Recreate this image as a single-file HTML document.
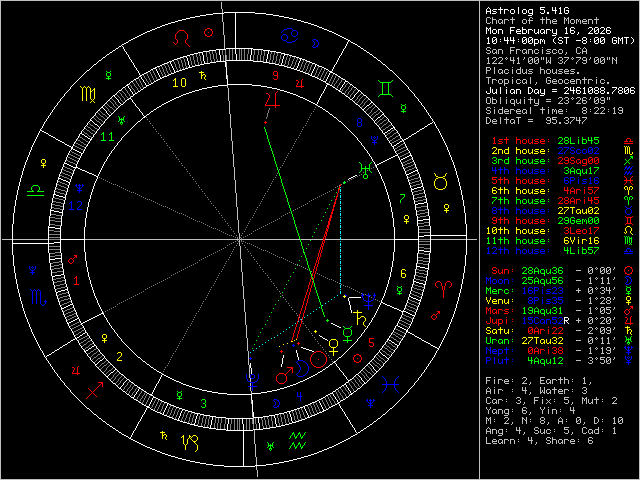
<!DOCTYPE html>
<html><head><meta charset="utf-8"><title>Astrolog 5.41G - Chart of the Moment</title>
<style>html,body{margin:0;padding:0;background:#000;width:640px;height:480px;overflow:hidden}svg{display:block}</style></head>
<body><svg width="640" height="480" viewBox="0 0 640 480" shape-rendering="crispEdges">
<defs><symbol id="g34" overflow="visible"><path d="M1 0h1v1h-1zM3 0h1v1h-1zM1 1h1v1h-1zM3 1h1v1h-1zM1 2h1v1h-1zM3 2h1v1h-1z"/></symbol><symbol id="g39" overflow="visible"><path d="M2 0h1v1h-1zM2 1h1v1h-1zM1 2h1v1h-1z"/></symbol><symbol id="g40" overflow="visible"><path d="M3 0h1v1h-1zM2 1h1v1h-1zM1 2h1v1h-1zM1 3h1v1h-1zM1 4h1v1h-1zM2 5h1v1h-1zM3 6h1v1h-1z"/></symbol><symbol id="g41" overflow="visible"><path d="M1 0h1v1h-1zM2 1h1v1h-1zM3 2h1v1h-1zM3 3h1v1h-1zM3 4h1v1h-1zM2 5h1v1h-1zM1 6h1v1h-1z"/></symbol><symbol id="g43" overflow="visible"><path d="M2 1h1v1h-1zM2 2h1v1h-1zM0 3h5v1h-5zM2 4h1v1h-1zM2 5h1v1h-1z"/></symbol><symbol id="g44" overflow="visible"><path d="M2 5h1v1h-1zM2 6h1v1h-1zM1 7h1v1h-1z"/></symbol><symbol id="g45" overflow="visible"><path d="M0 3h5v1h-5z"/></symbol><symbol id="g46" overflow="visible"><path d="M1 5h2v1h-2zM1 6h2v1h-2z"/></symbol><symbol id="g48" overflow="visible"><path d="M1 0h3v1h-3zM0 1h1v1h-1zM4 1h1v1h-1zM0 2h1v1h-1zM3 2h2v1h-2zM0 3h1v1h-1zM2 3h1v1h-1zM4 3h1v1h-1zM0 4h2v1h-2zM4 4h1v1h-1zM0 5h1v1h-1zM4 5h1v1h-1zM1 6h3v1h-3z"/></symbol><symbol id="g49" overflow="visible"><path d="M2 0h1v1h-1zM1 1h2v1h-2zM2 2h1v1h-1zM2 3h1v1h-1zM2 4h1v1h-1zM2 5h1v1h-1zM1 6h3v1h-3z"/></symbol><symbol id="g50" overflow="visible"><path d="M1 0h3v1h-3zM0 1h1v1h-1zM4 1h1v1h-1zM4 2h1v1h-1zM3 3h1v1h-1zM2 4h1v1h-1zM1 5h1v1h-1zM0 6h5v1h-5z"/></symbol><symbol id="g51" overflow="visible"><path d="M1 0h3v1h-3zM0 1h1v1h-1zM4 1h1v1h-1zM4 2h1v1h-1zM2 3h2v1h-2zM4 4h1v1h-1zM0 5h1v1h-1zM4 5h1v1h-1zM1 6h3v1h-3z"/></symbol><symbol id="g52" overflow="visible"><path d="M0 0h1v1h-1zM3 0h1v1h-1zM0 1h1v1h-1zM3 1h1v1h-1zM0 2h1v1h-1zM3 2h1v1h-1zM0 3h5v1h-5zM3 4h1v1h-1zM3 5h1v1h-1zM3 6h1v1h-1z"/></symbol><symbol id="g53" overflow="visible"><path d="M0 0h5v1h-5zM0 1h1v1h-1zM0 2h4v1h-4zM4 3h1v1h-1zM4 4h1v1h-1zM0 5h1v1h-1zM4 5h1v1h-1zM1 6h3v1h-3z"/></symbol><symbol id="g54" overflow="visible"><path d="M1 0h3v1h-3zM0 1h1v1h-1zM4 1h1v1h-1zM0 2h1v1h-1zM0 3h4v1h-4zM0 4h1v1h-1zM4 4h1v1h-1zM0 5h1v1h-1zM4 5h1v1h-1zM1 6h3v1h-3z"/></symbol><symbol id="g55" overflow="visible"><path d="M0 0h5v1h-5zM4 1h1v1h-1zM3 2h1v1h-1zM2 3h1v1h-1zM1 4h1v1h-1zM0 5h1v1h-1zM0 6h1v1h-1z"/></symbol><symbol id="g56" overflow="visible"><path d="M1 0h3v1h-3zM0 1h1v1h-1zM4 1h1v1h-1zM0 2h1v1h-1zM4 2h1v1h-1zM1 3h3v1h-3zM0 4h1v1h-1zM4 4h1v1h-1zM0 5h1v1h-1zM4 5h1v1h-1zM1 6h3v1h-3z"/></symbol><symbol id="g57" overflow="visible"><path d="M1 0h3v1h-3zM0 1h1v1h-1zM4 1h1v1h-1zM0 2h1v1h-1zM4 2h1v1h-1zM1 3h4v1h-4zM4 4h1v1h-1zM0 5h1v1h-1zM4 5h1v1h-1zM1 6h3v1h-3z"/></symbol><symbol id="g58" overflow="visible"><path d="M2 2h1v1h-1zM2 4h1v1h-1z"/></symbol><symbol id="g61" overflow="visible"><path d="M0 2h5v1h-5zM0 4h5v1h-5z"/></symbol><symbol id="g65" overflow="visible"><path d="M2 0h1v1h-1zM1 1h1v1h-1zM3 1h1v1h-1zM0 2h1v1h-1zM4 2h1v1h-1zM0 3h1v1h-1zM4 3h1v1h-1zM0 4h5v1h-5zM0 5h1v1h-1zM4 5h1v1h-1zM0 6h1v1h-1zM4 6h1v1h-1z"/></symbol><symbol id="g67" overflow="visible"><path d="M1 0h3v1h-3zM0 1h1v1h-1zM4 1h1v1h-1zM0 2h1v1h-1zM0 3h1v1h-1zM0 4h1v1h-1zM0 5h1v1h-1zM4 5h1v1h-1zM1 6h3v1h-3z"/></symbol><symbol id="g68" overflow="visible"><path d="M0 0h3v1h-3zM0 1h1v1h-1zM3 1h1v1h-1zM0 2h1v1h-1zM4 2h1v1h-1zM0 3h1v1h-1zM4 3h1v1h-1zM0 4h1v1h-1zM4 4h1v1h-1zM0 5h1v1h-1zM3 5h1v1h-1zM0 6h3v1h-3z"/></symbol><symbol id="g69" overflow="visible"><path d="M0 0h5v1h-5zM0 1h1v1h-1zM0 2h1v1h-1zM0 3h4v1h-4zM0 4h1v1h-1zM0 5h1v1h-1zM0 6h5v1h-5z"/></symbol><symbol id="g70" overflow="visible"><path d="M0 0h5v1h-5zM0 1h1v1h-1zM0 2h1v1h-1zM0 3h4v1h-4zM0 4h1v1h-1zM0 5h1v1h-1zM0 6h1v1h-1z"/></symbol><symbol id="g71" overflow="visible"><path d="M1 0h3v1h-3zM0 1h1v1h-1zM4 1h1v1h-1zM0 2h1v1h-1zM0 3h1v1h-1zM2 3h3v1h-3zM0 4h1v1h-1zM4 4h1v1h-1zM0 5h1v1h-1zM4 5h1v1h-1zM1 6h3v1h-3z"/></symbol><symbol id="g74" overflow="visible"><path d="M4 0h1v1h-1zM4 1h1v1h-1zM4 2h1v1h-1zM4 3h1v1h-1zM0 4h1v1h-1zM4 4h1v1h-1zM0 5h1v1h-1zM4 5h1v1h-1zM1 6h3v1h-3z"/></symbol><symbol id="g76" overflow="visible"><path d="M0 0h1v1h-1zM0 1h1v1h-1zM0 2h1v1h-1zM0 3h1v1h-1zM0 4h1v1h-1zM0 5h1v1h-1zM0 6h5v1h-5z"/></symbol><symbol id="g77" overflow="visible"><path d="M0 0h1v1h-1zM4 0h1v1h-1zM0 1h2v1h-2zM3 1h2v1h-2zM0 2h1v1h-1zM2 2h1v1h-1zM4 2h1v1h-1zM0 3h1v1h-1zM2 3h1v1h-1zM4 3h1v1h-1zM0 4h1v1h-1zM4 4h1v1h-1zM0 5h1v1h-1zM4 5h1v1h-1zM0 6h1v1h-1zM4 6h1v1h-1z"/></symbol><symbol id="g78" overflow="visible"><path d="M0 0h1v1h-1zM4 0h1v1h-1zM0 1h2v1h-2zM4 1h1v1h-1zM0 2h1v1h-1zM2 2h1v1h-1zM4 2h1v1h-1zM0 3h1v1h-1zM3 3h2v1h-2zM0 4h1v1h-1zM4 4h1v1h-1zM0 5h1v1h-1zM4 5h1v1h-1zM0 6h1v1h-1zM4 6h1v1h-1z"/></symbol><symbol id="g79" overflow="visible"><path d="M1 0h3v1h-3zM0 1h1v1h-1zM4 1h1v1h-1zM0 2h1v1h-1zM4 2h1v1h-1zM0 3h1v1h-1zM4 3h1v1h-1zM0 4h1v1h-1zM4 4h1v1h-1zM0 5h1v1h-1zM4 5h1v1h-1zM1 6h3v1h-3z"/></symbol><symbol id="g80" overflow="visible"><path d="M0 0h4v1h-4zM0 1h1v1h-1zM4 1h1v1h-1zM0 2h1v1h-1zM4 2h1v1h-1zM0 3h4v1h-4zM0 4h1v1h-1zM0 5h1v1h-1zM0 6h1v1h-1z"/></symbol><symbol id="g82" overflow="visible"><path d="M0 0h4v1h-4zM0 1h1v1h-1zM4 1h1v1h-1zM0 2h1v1h-1zM4 2h1v1h-1zM0 3h4v1h-4zM0 4h1v1h-1zM2 4h1v1h-1zM0 5h1v1h-1zM3 5h1v1h-1zM0 6h1v1h-1zM4 6h1v1h-1z"/></symbol><symbol id="g83" overflow="visible"><path d="M1 0h3v1h-3zM0 1h1v1h-1zM4 1h1v1h-1zM0 2h1v1h-1zM1 3h3v1h-3zM4 4h1v1h-1zM0 5h1v1h-1zM4 5h1v1h-1zM1 6h3v1h-3z"/></symbol><symbol id="g84" overflow="visible"><path d="M0 0h5v1h-5zM2 1h1v1h-1zM2 2h1v1h-1zM2 3h1v1h-1zM2 4h1v1h-1zM2 5h1v1h-1zM2 6h1v1h-1z"/></symbol><symbol id="g85" overflow="visible"><path d="M0 0h1v1h-1zM4 0h1v1h-1zM0 1h1v1h-1zM4 1h1v1h-1zM0 2h1v1h-1zM4 2h1v1h-1zM0 3h1v1h-1zM4 3h1v1h-1zM0 4h1v1h-1zM4 4h1v1h-1zM0 5h1v1h-1zM4 5h1v1h-1zM1 6h3v1h-3z"/></symbol><symbol id="g86" overflow="visible"><path d="M0 0h1v1h-1zM4 0h1v1h-1zM0 1h1v1h-1zM4 1h1v1h-1zM0 2h1v1h-1zM4 2h1v1h-1zM1 3h1v1h-1zM3 3h1v1h-1zM1 4h1v1h-1zM3 4h1v1h-1zM2 5h1v1h-1zM2 6h1v1h-1z"/></symbol><symbol id="g87" overflow="visible"><path d="M0 0h1v1h-1zM4 0h1v1h-1zM0 1h1v1h-1zM4 1h1v1h-1zM0 2h1v1h-1zM4 2h1v1h-1zM0 3h1v1h-1zM2 3h1v1h-1zM4 3h1v1h-1zM0 4h1v1h-1zM2 4h1v1h-1zM4 4h1v1h-1zM0 5h2v1h-2zM3 5h2v1h-2zM0 6h1v1h-1zM4 6h1v1h-1z"/></symbol><symbol id="g89" overflow="visible"><path d="M0 0h1v1h-1zM4 0h1v1h-1zM0 1h1v1h-1zM4 1h1v1h-1zM1 2h1v1h-1zM3 2h1v1h-1zM2 3h1v1h-1zM2 4h1v1h-1zM2 5h1v1h-1zM2 6h1v1h-1z"/></symbol><symbol id="g97" overflow="visible"><path d="M1 2h3v1h-3zM0 3h1v1h-1zM4 3h1v1h-1zM0 4h1v1h-1zM4 4h1v1h-1zM0 5h1v1h-1zM3 5h2v1h-2zM1 6h2v1h-2zM4 6h1v1h-1z"/></symbol><symbol id="g98" overflow="visible"><path d="M0 0h1v1h-1zM0 1h1v1h-1zM0 2h4v1h-4zM0 3h1v1h-1zM4 3h1v1h-1zM0 4h1v1h-1zM4 4h1v1h-1zM0 5h1v1h-1zM4 5h1v1h-1zM0 6h4v1h-4z"/></symbol><symbol id="g99" overflow="visible"><path d="M1 2h3v1h-3zM0 3h1v1h-1zM4 3h1v1h-1zM0 4h1v1h-1zM0 5h1v1h-1zM4 5h1v1h-1zM1 6h3v1h-3z"/></symbol><symbol id="g100" overflow="visible"><path d="M4 0h1v1h-1zM4 1h1v1h-1zM1 2h4v1h-4zM0 3h1v1h-1zM4 3h1v1h-1zM0 4h1v1h-1zM4 4h1v1h-1zM0 5h1v1h-1zM4 5h1v1h-1zM1 6h4v1h-4z"/></symbol><symbol id="g101" overflow="visible"><path d="M1 2h3v1h-3zM0 3h1v1h-1zM4 3h1v1h-1zM0 4h5v1h-5zM0 5h1v1h-1zM1 6h4v1h-4z"/></symbol><symbol id="g102" overflow="visible"><path d="M2 0h2v1h-2zM1 1h1v1h-1zM4 1h1v1h-1zM1 2h1v1h-1zM0 3h5v1h-5zM1 4h1v1h-1zM1 5h1v1h-1zM1 6h1v1h-1z"/></symbol><symbol id="g103" overflow="visible"><path d="M1 2h4v1h-4zM0 3h1v1h-1zM4 3h1v1h-1zM0 4h1v1h-1zM4 4h1v1h-1zM0 5h1v1h-1zM4 5h1v1h-1zM1 6h4v1h-4zM4 7h1v1h-1zM0 8h4v1h-4z"/></symbol><symbol id="g104" overflow="visible"><path d="M0 0h1v1h-1zM0 1h1v1h-1zM0 2h4v1h-4zM0 3h1v1h-1zM4 3h1v1h-1zM0 4h1v1h-1zM4 4h1v1h-1zM0 5h1v1h-1zM4 5h1v1h-1zM0 6h1v1h-1zM4 6h1v1h-1z"/></symbol><symbol id="g105" overflow="visible"><path d="M2 0h1v1h-1zM2 2h1v1h-1zM2 3h1v1h-1zM2 4h1v1h-1zM2 5h1v1h-1zM2 6h1v1h-1z"/></symbol><symbol id="g108" overflow="visible"><path d="M2 0h1v1h-1zM2 1h1v1h-1zM2 2h1v1h-1zM2 3h1v1h-1zM2 4h1v1h-1zM2 5h1v1h-1zM2 6h1v1h-1z"/></symbol><symbol id="g109" overflow="visible"><path d="M0 2h2v1h-2zM3 2h1v1h-1zM0 3h1v1h-1zM2 3h1v1h-1zM4 3h1v1h-1zM0 4h1v1h-1zM2 4h1v1h-1zM4 4h1v1h-1zM0 5h1v1h-1zM4 5h1v1h-1zM0 6h1v1h-1zM4 6h1v1h-1z"/></symbol><symbol id="g110" overflow="visible"><path d="M0 2h4v1h-4zM0 3h1v1h-1zM4 3h1v1h-1zM0 4h1v1h-1zM4 4h1v1h-1zM0 5h1v1h-1zM4 5h1v1h-1zM0 6h1v1h-1zM4 6h1v1h-1z"/></symbol><symbol id="g111" overflow="visible"><path d="M1 2h3v1h-3zM0 3h1v1h-1zM4 3h1v1h-1zM0 4h1v1h-1zM4 4h1v1h-1zM0 5h1v1h-1zM4 5h1v1h-1zM1 6h3v1h-3z"/></symbol><symbol id="g112" overflow="visible"><path d="M0 2h4v1h-4zM0 3h1v1h-1zM4 3h1v1h-1zM0 4h1v1h-1zM4 4h1v1h-1zM0 5h1v1h-1zM4 5h1v1h-1zM0 6h4v1h-4zM0 7h1v1h-1zM0 8h1v1h-1z"/></symbol><symbol id="g113" overflow="visible"><path d="M1 2h3v1h-3zM0 3h1v1h-1zM4 3h1v1h-1zM0 4h1v1h-1zM4 4h1v1h-1zM0 5h1v1h-1zM4 5h1v1h-1zM1 6h4v1h-4zM4 7h1v1h-1zM4 8h1v1h-1z"/></symbol><symbol id="g114" overflow="visible"><path d="M0 2h4v1h-4zM0 3h1v1h-1zM4 3h1v1h-1zM0 4h1v1h-1zM0 5h1v1h-1zM0 6h1v1h-1z"/></symbol><symbol id="g115" overflow="visible"><path d="M1 2h4v1h-4zM0 3h1v1h-1zM1 4h3v1h-3zM4 5h1v1h-1zM0 6h4v1h-4z"/></symbol><symbol id="g116" overflow="visible"><path d="M2 0h1v1h-1zM2 1h1v1h-1zM0 2h5v1h-5zM2 3h1v1h-1zM2 4h1v1h-1zM2 5h1v1h-1zM2 6h1v1h-1z"/></symbol><symbol id="g117" overflow="visible"><path d="M0 2h1v1h-1zM4 2h1v1h-1zM0 3h1v1h-1zM4 3h1v1h-1zM0 4h1v1h-1zM4 4h1v1h-1zM0 5h1v1h-1zM3 5h2v1h-2zM1 6h2v1h-2zM4 6h1v1h-1z"/></symbol><symbol id="g120" overflow="visible"><path d="M0 2h1v1h-1zM4 2h1v1h-1zM1 3h1v1h-1zM3 3h1v1h-1zM2 4h1v1h-1zM1 5h1v1h-1zM3 5h1v1h-1zM0 6h1v1h-1zM4 6h1v1h-1z"/></symbol><symbol id="g121" overflow="visible"><path d="M0 2h1v1h-1zM4 2h1v1h-1zM0 3h1v1h-1zM4 3h1v1h-1zM0 4h1v1h-1zM4 4h1v1h-1zM0 5h1v1h-1zM4 5h1v1h-1zM1 6h4v1h-4zM4 7h1v1h-1zM0 8h4v1h-4z"/></symbol><symbol id="g176" overflow="visible"><path d="M2 0h1v1h-1zM1 1h1v1h-1zM3 1h1v1h-1zM2 2h1v1h-1z"/></symbol></defs>
<rect width="640" height="480" fill="#000"/>
<g id="wheel">
<path fill="#c0c0c0" d="M0 0h640v1h-640zM0 1h1v1h-1zM479 1h1v1h-1zM639 1h1v1h-1zM0 2h1v1h-1zM221 2h1v1h-1zM479 2h1v1h-1zM639 2h1v1h-1zM0 3h1v1h-1zM221 3h1v1h-1zM479 3h1v1h-1zM639 3h1v1h-1zM0 4h1v1h-1zM221 4h1v1h-1zM479 4h1v1h-1zM639 4h1v1h-1zM0 5h1v1h-1zM221 5h1v1h-1zM479 5h1v1h-1zM639 5h1v1h-1zM0 6h1v1h-1zM221 6h1v1h-1zM479 6h1v1h-1zM639 6h1v1h-1zM0 7h1v1h-1zM221 7h1v1h-1zM479 7h1v1h-1zM639 7h1v1h-1zM0 8h1v1h-1zM221 8h1v1h-1zM479 8h1v1h-1zM639 8h1v1h-1zM0 9h1v1h-1zM222 9h1v1h-1zM479 9h1v1h-1zM639 9h1v1h-1zM0 10h1v1h-1zM222 10h1v1h-1zM479 10h1v1h-1zM639 10h1v1h-1zM0 11h1v1h-1zM222 11h1v1h-1zM479 11h1v1h-1zM639 11h1v1h-1zM0 12h1v1h-1zM222 12h1v1h-1zM479 12h1v1h-1zM639 12h1v1h-1zM0 13h1v1h-1zM479 13h1v1h-1zM639 13h1v1h-1zM0 14h1v1h-1zM222 14h1v1h-1zM479 14h1v1h-1zM639 14h1v1h-1zM0 15h1v1h-1zM222 15h1v1h-1zM479 15h1v1h-1zM639 15h1v1h-1zM0 16h1v1h-1zM222 16h1v1h-1zM479 16h1v1h-1zM639 16h1v1h-1zM0 17h1v1h-1zM222 17h1v1h-1zM479 17h1v1h-1zM639 17h1v1h-1zM0 18h1v1h-1zM222 18h1v1h-1zM479 18h1v1h-1zM639 18h1v1h-1zM0 19h1v1h-1zM222 19h1v1h-1zM479 19h1v1h-1zM639 19h1v1h-1zM0 20h1v1h-1zM222 20h1v1h-1zM479 20h1v1h-1zM639 20h1v1h-1zM0 21h1v1h-1zM222 21h1v1h-1zM479 21h1v1h-1zM639 21h1v1h-1zM0 22h1v1h-1zM223 22h1v1h-1zM479 22h1v1h-1zM639 22h1v1h-1zM0 23h1v1h-1zM223 23h1v1h-1zM479 23h1v1h-1zM639 23h1v1h-1zM0 24h1v1h-1zM223 24h1v1h-1zM479 24h1v1h-1zM639 24h1v1h-1zM0 25h1v1h-1zM223 25h1v1h-1zM479 25h1v1h-1zM639 25h1v1h-1zM0 26h1v1h-1zM223 26h1v1h-1zM479 26h1v1h-1zM639 26h1v1h-1zM0 27h1v1h-1zM223 27h1v1h-1zM479 27h1v1h-1zM639 27h1v1h-1zM0 28h1v1h-1zM223 28h1v1h-1zM479 28h1v1h-1zM639 28h1v1h-1zM0 29h1v1h-1zM223 29h1v1h-1zM479 29h1v1h-1zM639 29h1v1h-1zM0 30h1v1h-1zM223 30h1v1h-1zM479 30h1v1h-1zM639 30h1v1h-1zM0 31h1v1h-1zM223 31h1v1h-1zM479 31h1v1h-1zM639 31h1v1h-1zM0 32h1v1h-1zM223 32h1v1h-1zM479 32h1v1h-1zM639 32h1v1h-1zM0 33h1v1h-1zM223 33h1v1h-1zM479 33h1v1h-1zM639 33h1v1h-1zM0 34h1v1h-1zM223 34h1v1h-1zM479 34h1v1h-1zM639 34h1v1h-1zM0 35h1v1h-1zM224 35h1v1h-1zM479 35h1v1h-1zM639 35h1v1h-1zM0 36h1v1h-1zM224 36h1v1h-1zM479 36h1v1h-1zM639 36h1v1h-1zM0 37h1v1h-1zM224 37h1v1h-1zM479 37h1v1h-1zM639 37h1v1h-1zM0 38h1v1h-1zM224 38h1v1h-1zM479 38h1v1h-1zM639 38h1v1h-1zM0 39h1v1h-1zM224 39h1v1h-1zM479 39h1v1h-1zM639 39h1v1h-1zM0 40h1v1h-1zM224 40h1v1h-1zM479 40h1v1h-1zM639 40h1v1h-1zM0 41h1v1h-1zM224 41h1v1h-1zM479 41h1v1h-1zM639 41h1v1h-1zM0 42h1v1h-1zM224 42h1v1h-1zM479 42h1v1h-1zM639 42h1v1h-1zM0 43h1v1h-1zM224 43h1v1h-1zM479 43h1v1h-1zM639 43h1v1h-1zM0 44h1v1h-1zM224 44h1v1h-1zM479 44h1v1h-1zM639 44h1v1h-1zM0 45h1v1h-1zM224 45h1v1h-1zM479 45h1v1h-1zM639 45h1v1h-1zM0 46h1v1h-1zM224 46h1v1h-1zM479 46h1v1h-1zM639 46h1v1h-1zM0 47h1v1h-1zM224 47h1v1h-1zM479 47h1v1h-1zM639 47h1v1h-1zM0 48h1v1h-1zM224 48h1v1h-1zM479 48h1v1h-1zM639 48h1v1h-1zM0 49h1v1h-1zM479 49h1v1h-1zM639 49h1v1h-1zM0 50h1v1h-1zM479 50h1v1h-1zM639 50h1v1h-1zM0 51h1v1h-1zM479 51h1v1h-1zM639 51h1v1h-1zM0 52h1v1h-1zM479 52h1v1h-1zM639 52h1v1h-1zM0 53h1v1h-1zM479 53h1v1h-1zM639 53h1v1h-1zM0 54h1v1h-1zM479 54h1v1h-1zM639 54h1v1h-1zM0 55h1v1h-1zM225 55h1v1h-1zM479 55h1v1h-1zM639 55h1v1h-1zM0 56h1v1h-1zM225 56h1v1h-1zM479 56h1v1h-1zM639 56h1v1h-1zM0 57h1v1h-1zM225 57h1v1h-1zM479 57h1v1h-1zM639 57h1v1h-1zM0 58h1v1h-1zM225 58h1v1h-1zM479 58h1v1h-1zM639 58h1v1h-1zM0 59h1v1h-1zM225 59h1v1h-1zM479 59h1v1h-1zM639 59h1v1h-1zM0 60h1v1h-1zM225 60h1v1h-1zM479 60h1v1h-1zM639 60h1v1h-1zM0 61h1v1h-1zM479 61h1v1h-1zM639 61h1v1h-1zM0 62h1v1h-1zM226 62h1v1h-1zM479 62h1v1h-1zM639 62h1v1h-1zM0 63h1v1h-1zM226 63h1v1h-1zM479 63h1v1h-1zM639 63h1v1h-1zM0 64h1v1h-1zM226 64h1v1h-1zM479 64h1v1h-1zM639 64h1v1h-1zM0 65h1v1h-1zM226 65h1v1h-1zM479 65h1v1h-1zM639 65h1v1h-1zM0 66h1v1h-1zM226 66h1v1h-1zM479 66h1v1h-1zM639 66h1v1h-1zM0 67h1v1h-1zM479 67h1v1h-1zM639 67h1v1h-1zM0 68h1v1h-1zM479 68h1v1h-1zM639 68h1v1h-1zM0 69h1v1h-1zM479 69h1v1h-1zM639 69h1v1h-1zM0 70h1v1h-1zM479 70h1v1h-1zM639 70h1v1h-1zM0 71h1v1h-1zM479 71h1v1h-1zM639 71h1v1h-1zM0 72h1v1h-1zM479 72h1v1h-1zM639 72h1v1h-1zM0 73h1v1h-1zM479 73h1v1h-1zM639 73h1v1h-1zM0 74h1v1h-1zM479 74h1v1h-1zM639 74h1v1h-1zM0 75h1v1h-1zM227 75h1v1h-1zM479 75h1v1h-1zM639 75h1v1h-1zM0 76h1v1h-1zM227 76h1v1h-1zM479 76h1v1h-1zM639 76h1v1h-1zM0 77h1v1h-1zM227 77h1v1h-1zM479 77h1v1h-1zM639 77h1v1h-1zM0 78h1v1h-1zM227 78h1v1h-1zM479 78h1v1h-1zM639 78h1v1h-1zM0 79h1v1h-1zM479 79h1v1h-1zM639 79h1v1h-1zM0 80h1v1h-1zM479 80h1v1h-1zM639 80h1v1h-1zM0 81h1v1h-1zM479 81h1v1h-1zM639 81h1v1h-1zM0 82h1v1h-1zM479 82h1v1h-1zM639 82h1v1h-1zM0 83h1v1h-1zM479 83h1v1h-1zM639 83h1v1h-1zM0 84h1v1h-1zM479 84h1v1h-1zM639 84h1v1h-1zM0 85h1v1h-1zM227 85h1v1h-1zM479 85h1v1h-1zM639 85h1v1h-1zM0 86h1v1h-1zM227 86h1v1h-1zM479 86h1v1h-1zM639 86h1v1h-1zM0 87h1v1h-1zM227 87h1v1h-1zM479 87h1v1h-1zM639 87h1v1h-1zM0 88h1v1h-1zM228 88h1v1h-1zM479 88h1v1h-1zM639 88h1v1h-1zM0 89h1v1h-1zM228 89h1v1h-1zM479 89h1v1h-1zM639 89h1v1h-1zM0 90h1v1h-1zM228 90h1v1h-1zM479 90h1v1h-1zM639 90h1v1h-1zM0 91h1v1h-1zM228 91h1v1h-1zM479 91h1v1h-1zM639 91h1v1h-1zM0 92h1v1h-1zM228 92h1v1h-1zM479 92h1v1h-1zM639 92h1v1h-1zM0 93h1v1h-1zM228 93h1v1h-1zM479 93h1v1h-1zM639 93h1v1h-1zM0 94h1v1h-1zM228 94h1v1h-1zM479 94h1v1h-1zM639 94h1v1h-1zM0 95h1v1h-1zM228 95h1v1h-1zM479 95h1v1h-1zM639 95h1v1h-1zM0 96h1v1h-1zM228 96h1v1h-1zM479 96h1v1h-1zM639 96h1v1h-1zM0 97h1v1h-1zM228 97h1v1h-1zM479 97h1v1h-1zM639 97h1v1h-1zM0 98h1v1h-1zM228 98h1v1h-1zM479 98h1v1h-1zM639 98h1v1h-1zM0 99h1v1h-1zM228 99h1v1h-1zM479 99h1v1h-1zM639 99h1v1h-1zM0 100h1v1h-1zM228 100h1v1h-1zM479 100h1v1h-1zM639 100h1v1h-1zM0 101h1v1h-1zM229 101h1v1h-1zM479 101h1v1h-1zM639 101h1v1h-1zM0 102h1v1h-1zM229 102h1v1h-1zM479 102h1v1h-1zM639 102h1v1h-1zM0 103h1v1h-1zM229 103h1v1h-1zM479 103h1v1h-1zM639 103h1v1h-1zM0 104h1v1h-1zM229 104h1v1h-1zM479 104h1v1h-1zM639 104h1v1h-1zM0 105h1v1h-1zM229 105h1v1h-1zM479 105h1v1h-1zM639 105h1v1h-1zM0 106h1v1h-1zM229 106h1v1h-1zM479 106h1v1h-1zM639 106h1v1h-1zM0 107h1v1h-1zM229 107h1v1h-1zM479 107h1v1h-1zM639 107h1v1h-1zM0 108h1v1h-1zM229 108h1v1h-1zM479 108h1v1h-1zM639 108h1v1h-1zM0 109h1v1h-1zM229 109h1v1h-1zM479 109h1v1h-1zM639 109h1v1h-1zM0 110h1v1h-1zM229 110h1v1h-1zM479 110h1v1h-1zM639 110h1v1h-1zM0 111h1v1h-1zM229 111h1v1h-1zM479 111h1v1h-1zM639 111h1v1h-1zM0 112h1v1h-1zM229 112h1v1h-1zM479 112h1v1h-1zM639 112h1v1h-1zM0 113h1v1h-1zM229 113h1v1h-1zM479 113h1v1h-1zM639 113h1v1h-1zM0 114h1v1h-1zM230 114h1v1h-1zM479 114h1v1h-1zM639 114h1v1h-1zM0 115h1v1h-1zM230 115h1v1h-1zM479 115h1v1h-1zM639 115h1v1h-1zM0 116h1v1h-1zM230 116h1v1h-1zM479 116h1v1h-1zM639 116h1v1h-1zM0 117h1v1h-1zM230 117h1v1h-1zM479 117h1v1h-1zM639 117h1v1h-1zM0 118h1v1h-1zM230 118h1v1h-1zM479 118h1v1h-1zM639 118h1v1h-1zM0 119h1v1h-1zM230 119h1v1h-1zM479 119h1v1h-1zM639 119h1v1h-1zM0 120h1v1h-1zM230 120h1v1h-1zM479 120h1v1h-1zM639 120h1v1h-1zM0 121h1v1h-1zM230 121h1v1h-1zM479 121h1v1h-1zM639 121h1v1h-1zM0 122h1v1h-1zM230 122h1v1h-1zM479 122h1v1h-1zM639 122h1v1h-1zM0 123h1v1h-1zM230 123h1v1h-1zM479 123h1v1h-1zM639 123h1v1h-1zM0 124h1v1h-1zM230 124h1v1h-1zM479 124h1v1h-1zM639 124h1v1h-1zM0 125h1v1h-1zM230 125h1v1h-1zM479 125h1v1h-1zM639 125h1v1h-1zM0 126h1v1h-1zM230 126h1v1h-1zM479 126h1v1h-1zM639 126h1v1h-1zM0 127h1v1h-1zM230 127h1v1h-1zM479 127h1v1h-1zM639 127h1v1h-1zM0 128h1v1h-1zM231 128h1v1h-1zM479 128h1v1h-1zM639 128h1v1h-1zM0 129h1v1h-1zM231 129h1v1h-1zM479 129h1v1h-1zM639 129h1v1h-1zM0 130h1v1h-1zM231 130h1v1h-1zM479 130h1v1h-1zM639 130h1v1h-1zM0 131h1v1h-1zM231 131h1v1h-1zM479 131h1v1h-1zM639 131h1v1h-1zM0 132h1v1h-1zM231 132h1v1h-1zM479 132h1v1h-1zM639 132h1v1h-1zM0 133h1v1h-1zM231 133h1v1h-1zM479 133h1v1h-1zM639 133h1v1h-1zM0 134h1v1h-1zM231 134h1v1h-1zM479 134h1v1h-1zM639 134h1v1h-1zM0 135h1v1h-1zM231 135h1v1h-1zM479 135h1v1h-1zM639 135h1v1h-1zM0 136h1v1h-1zM231 136h1v1h-1zM479 136h1v1h-1zM639 136h1v1h-1zM0 137h1v1h-1zM231 137h1v1h-1zM479 137h1v1h-1zM639 137h1v1h-1zM0 138h1v1h-1zM231 138h1v1h-1zM479 138h1v1h-1zM639 138h1v1h-1zM0 139h1v1h-1zM231 139h1v1h-1zM479 139h1v1h-1zM639 139h1v1h-1zM0 140h1v1h-1zM231 140h1v1h-1zM479 140h1v1h-1zM639 140h1v1h-1zM0 141h1v1h-1zM232 141h1v1h-1zM479 141h1v1h-1zM639 141h1v1h-1zM0 142h1v1h-1zM232 142h1v1h-1zM479 142h1v1h-1zM639 142h1v1h-1zM0 143h1v1h-1zM232 143h1v1h-1zM479 143h1v1h-1zM639 143h1v1h-1zM0 144h1v1h-1zM232 144h1v1h-1zM479 144h1v1h-1zM639 144h1v1h-1zM0 145h1v1h-1zM232 145h1v1h-1zM479 145h1v1h-1zM639 145h1v1h-1zM0 146h1v1h-1zM232 146h1v1h-1zM479 146h1v1h-1zM639 146h1v1h-1zM0 147h1v1h-1zM232 147h1v1h-1zM479 147h1v1h-1zM639 147h1v1h-1zM0 148h1v1h-1zM232 148h1v1h-1zM479 148h1v1h-1zM639 148h1v1h-1zM0 149h1v1h-1zM232 149h1v1h-1zM479 149h1v1h-1zM639 149h1v1h-1zM0 150h1v1h-1zM232 150h1v1h-1zM479 150h1v1h-1zM639 150h1v1h-1zM0 151h1v1h-1zM232 151h1v1h-1zM479 151h1v1h-1zM639 151h1v1h-1zM0 152h1v1h-1zM232 152h1v1h-1zM479 152h1v1h-1zM639 152h1v1h-1zM0 153h1v1h-1zM232 153h1v1h-1zM479 153h1v1h-1zM639 153h1v1h-1zM0 154h1v1h-1zM233 154h1v1h-1zM479 154h1v1h-1zM639 154h1v1h-1zM0 155h1v1h-1zM233 155h1v1h-1zM479 155h1v1h-1zM639 155h1v1h-1zM0 156h1v1h-1zM233 156h1v1h-1zM479 156h1v1h-1zM639 156h1v1h-1zM0 157h1v1h-1zM233 157h1v1h-1zM479 157h1v1h-1zM639 157h1v1h-1zM0 158h1v1h-1zM233 158h1v1h-1zM479 158h1v1h-1zM639 158h1v1h-1zM0 159h1v1h-1zM233 159h1v1h-1zM479 159h1v1h-1zM639 159h1v1h-1zM0 160h1v1h-1zM233 160h1v1h-1zM479 160h1v1h-1zM639 160h1v1h-1zM0 161h1v1h-1zM233 161h1v1h-1zM479 161h1v1h-1zM639 161h1v1h-1zM0 162h1v1h-1zM233 162h1v1h-1zM479 162h1v1h-1zM639 162h1v1h-1zM0 163h1v1h-1zM233 163h1v1h-1zM479 163h1v1h-1zM639 163h1v1h-1zM0 164h1v1h-1zM233 164h1v1h-1zM479 164h1v1h-1zM639 164h1v1h-1zM0 165h1v1h-1zM233 165h1v1h-1zM479 165h1v1h-1zM639 165h1v1h-1zM0 166h1v1h-1zM233 166h1v1h-1zM479 166h1v1h-1zM639 166h1v1h-1zM0 167h1v1h-1zM234 167h1v1h-1zM479 167h1v1h-1zM639 167h1v1h-1zM0 168h1v1h-1zM234 168h1v1h-1zM479 168h1v1h-1zM639 168h1v1h-1zM0 169h1v1h-1zM234 169h1v1h-1zM479 169h1v1h-1zM639 169h1v1h-1zM0 170h1v1h-1zM234 170h1v1h-1zM479 170h1v1h-1zM639 170h1v1h-1zM0 171h1v1h-1zM234 171h1v1h-1zM479 171h1v1h-1zM639 171h1v1h-1zM0 172h1v1h-1zM234 172h1v1h-1zM479 172h1v1h-1zM639 172h1v1h-1zM0 173h1v1h-1zM234 173h1v1h-1zM479 173h1v1h-1zM639 173h1v1h-1zM0 174h1v1h-1zM234 174h1v1h-1zM479 174h1v1h-1zM639 174h1v1h-1zM0 175h1v1h-1zM234 175h1v1h-1zM479 175h1v1h-1zM639 175h1v1h-1zM0 176h1v1h-1zM234 176h1v1h-1zM479 176h1v1h-1zM639 176h1v1h-1zM0 177h1v1h-1zM234 177h1v1h-1zM479 177h1v1h-1zM639 177h1v1h-1zM0 178h1v1h-1zM234 178h1v1h-1zM479 178h1v1h-1zM639 178h1v1h-1zM0 179h1v1h-1zM234 179h1v1h-1zM479 179h1v1h-1zM639 179h1v1h-1zM0 180h1v1h-1zM235 180h1v1h-1zM479 180h1v1h-1zM639 180h1v1h-1zM0 181h1v1h-1zM235 181h1v1h-1zM479 181h1v1h-1zM639 181h1v1h-1zM0 182h1v1h-1zM235 182h1v1h-1zM479 182h1v1h-1zM639 182h1v1h-1zM0 183h1v1h-1zM235 183h1v1h-1zM479 183h1v1h-1zM639 183h1v1h-1zM0 184h1v1h-1zM235 184h1v1h-1zM479 184h1v1h-1zM639 184h1v1h-1zM0 185h1v1h-1zM235 185h1v1h-1zM479 185h1v1h-1zM639 185h1v1h-1zM0 186h1v1h-1zM235 186h1v1h-1zM479 186h1v1h-1zM639 186h1v1h-1zM0 187h1v1h-1zM235 187h1v1h-1zM479 187h1v1h-1zM639 187h1v1h-1zM0 188h1v1h-1zM235 188h1v1h-1zM479 188h1v1h-1zM639 188h1v1h-1zM0 189h1v1h-1zM235 189h1v1h-1zM479 189h1v1h-1zM639 189h1v1h-1zM0 190h1v1h-1zM235 190h1v1h-1zM479 190h1v1h-1zM639 190h1v1h-1zM0 191h1v1h-1zM235 191h1v1h-1zM479 191h1v1h-1zM639 191h1v1h-1zM0 192h1v1h-1zM235 192h1v1h-1zM479 192h1v1h-1zM639 192h1v1h-1zM0 193h1v1h-1zM236 193h1v1h-1zM479 193h1v1h-1zM639 193h1v1h-1zM0 194h1v1h-1zM236 194h1v1h-1zM479 194h1v1h-1zM639 194h1v1h-1zM0 195h1v1h-1zM236 195h1v1h-1zM479 195h1v1h-1zM639 195h1v1h-1zM0 196h1v1h-1zM236 196h1v1h-1zM479 196h1v1h-1zM639 196h1v1h-1zM0 197h1v1h-1zM236 197h1v1h-1zM479 197h1v1h-1zM639 197h1v1h-1zM0 198h1v1h-1zM236 198h1v1h-1zM479 198h1v1h-1zM639 198h1v1h-1zM0 199h1v1h-1zM236 199h1v1h-1zM479 199h1v1h-1zM639 199h1v1h-1zM0 200h1v1h-1zM236 200h1v1h-1zM479 200h1v1h-1zM639 200h1v1h-1zM0 201h1v1h-1zM236 201h1v1h-1zM479 201h1v1h-1zM639 201h1v1h-1zM0 202h1v1h-1zM236 202h1v1h-1zM479 202h1v1h-1zM639 202h1v1h-1zM0 203h1v1h-1zM236 203h1v1h-1zM479 203h1v1h-1zM639 203h1v1h-1zM0 204h1v1h-1zM236 204h1v1h-1zM479 204h1v1h-1zM639 204h1v1h-1zM0 205h1v1h-1zM236 205h1v1h-1zM479 205h1v1h-1zM639 205h1v1h-1zM0 206h1v1h-1zM236 206h1v1h-1zM479 206h1v1h-1zM639 206h1v1h-1zM0 207h1v1h-1zM237 207h1v1h-1zM479 207h1v1h-1zM639 207h1v1h-1zM0 208h1v1h-1zM237 208h1v1h-1zM479 208h1v1h-1zM639 208h1v1h-1zM0 209h1v1h-1zM237 209h1v1h-1zM479 209h1v1h-1zM639 209h1v1h-1zM0 210h1v1h-1zM237 210h1v1h-1zM479 210h1v1h-1zM639 210h1v1h-1zM0 211h1v1h-1zM237 211h1v1h-1zM479 211h1v1h-1zM639 211h1v1h-1zM0 212h1v1h-1zM237 212h1v1h-1zM479 212h1v1h-1zM639 212h1v1h-1zM0 213h1v1h-1zM237 213h1v1h-1zM479 213h1v1h-1zM639 213h1v1h-1zM0 214h1v1h-1zM237 214h1v1h-1zM479 214h1v1h-1zM639 214h1v1h-1zM0 215h1v1h-1zM237 215h1v1h-1zM479 215h1v1h-1zM639 215h1v1h-1zM0 216h1v1h-1zM237 216h1v1h-1zM479 216h1v1h-1zM639 216h1v1h-1zM0 217h1v1h-1zM237 217h1v1h-1zM479 217h1v1h-1zM639 217h1v1h-1zM0 218h1v1h-1zM237 218h1v1h-1zM479 218h1v1h-1zM639 218h1v1h-1zM0 219h1v1h-1zM237 219h1v1h-1zM479 219h1v1h-1zM639 219h1v1h-1zM0 220h1v1h-1zM238 220h1v1h-1zM479 220h1v1h-1zM639 220h1v1h-1zM0 221h1v1h-1zM238 221h1v1h-1zM479 221h1v1h-1zM639 221h1v1h-1zM0 222h1v1h-1zM238 222h1v1h-1zM479 222h1v1h-1zM639 222h1v1h-1zM0 223h1v1h-1zM238 223h1v1h-1zM479 223h1v1h-1zM639 223h1v1h-1zM0 224h1v1h-1zM238 224h1v1h-1zM479 224h1v1h-1zM639 224h1v1h-1zM0 225h1v1h-1zM238 225h1v1h-1zM479 225h1v1h-1zM639 225h1v1h-1zM0 226h1v1h-1zM238 226h1v1h-1zM479 226h1v1h-1zM639 226h1v1h-1zM0 227h1v1h-1zM238 227h1v1h-1zM479 227h1v1h-1zM639 227h1v1h-1zM0 228h1v1h-1zM238 228h1v1h-1zM479 228h1v1h-1zM639 228h1v1h-1zM0 229h1v1h-1zM238 229h1v1h-1zM479 229h1v1h-1zM639 229h1v1h-1zM0 230h1v1h-1zM238 230h1v1h-1zM479 230h1v1h-1zM639 230h1v1h-1zM0 231h1v1h-1zM238 231h1v1h-1zM479 231h1v1h-1zM639 231h1v1h-1zM0 232h1v1h-1zM238 232h1v1h-1zM479 232h1v1h-1zM639 232h1v1h-1zM0 233h1v1h-1zM239 233h1v1h-1zM479 233h1v1h-1zM639 233h1v1h-1zM0 234h1v1h-1zM239 234h1v1h-1zM479 234h1v1h-1zM639 234h1v1h-1zM0 235h1v1h-1zM239 235h1v1h-1zM479 235h1v1h-1zM639 235h1v1h-1zM0 236h1v1h-1zM239 236h1v1h-1zM479 236h1v1h-1zM639 236h1v1h-1zM0 237h1v1h-1zM239 237h1v1h-1zM479 237h1v1h-1zM639 237h1v1h-1zM0 238h1v1h-1zM239 238h1v1h-1zM479 238h1v1h-1zM639 238h1v1h-1zM0 239h1v1h-1zM2 239h10v1h-10zM13 239h35v1h-35zM85 239h154v1h-154zM240 239h60v1h-60zM301 239h22v1h-22zM325 239h15v1h-15zM341 239h53v1h-53zM431 239h35v1h-35zM467 239h10v1h-10zM479 239h1v1h-1zM639 239h1v1h-1zM0 240h1v1h-1zM239 240h1v1h-1zM479 240h1v1h-1zM639 240h1v1h-1zM0 241h1v1h-1zM239 241h1v1h-1zM479 241h1v1h-1zM639 241h1v1h-1zM0 242h1v1h-1zM239 242h1v1h-1zM479 242h1v1h-1zM639 242h1v1h-1zM0 243h1v1h-1zM239 243h1v1h-1zM479 243h1v1h-1zM639 243h1v1h-1zM0 244h1v1h-1zM239 244h1v1h-1zM479 244h1v1h-1zM639 244h1v1h-1zM0 245h1v1h-1zM239 245h1v1h-1zM479 245h1v1h-1zM639 245h1v1h-1zM0 246h1v1h-1zM240 246h1v1h-1zM479 246h1v1h-1zM639 246h1v1h-1zM0 247h1v1h-1zM240 247h1v1h-1zM479 247h1v1h-1zM639 247h1v1h-1zM0 248h1v1h-1zM240 248h1v1h-1zM479 248h1v1h-1zM639 248h1v1h-1zM0 249h1v1h-1zM240 249h1v1h-1zM479 249h1v1h-1zM639 249h1v1h-1zM0 250h1v1h-1zM240 250h1v1h-1zM479 250h1v1h-1zM639 250h1v1h-1zM0 251h1v1h-1zM240 251h1v1h-1zM479 251h1v1h-1zM639 251h1v1h-1zM0 252h1v1h-1zM240 252h1v1h-1zM479 252h1v1h-1zM639 252h1v1h-1zM0 253h1v1h-1zM240 253h1v1h-1zM479 253h1v1h-1zM639 253h1v1h-1zM0 254h1v1h-1zM240 254h1v1h-1zM479 254h1v1h-1zM639 254h1v1h-1zM0 255h1v1h-1zM240 255h1v1h-1zM479 255h1v1h-1zM639 255h1v1h-1zM0 256h1v1h-1zM240 256h1v1h-1zM479 256h1v1h-1zM639 256h1v1h-1zM0 257h1v1h-1zM240 257h1v1h-1zM479 257h1v1h-1zM639 257h1v1h-1zM0 258h1v1h-1zM240 258h1v1h-1zM479 258h1v1h-1zM639 258h1v1h-1zM0 259h1v1h-1zM241 259h1v1h-1zM479 259h1v1h-1zM639 259h1v1h-1zM0 260h1v1h-1zM241 260h1v1h-1zM479 260h1v1h-1zM639 260h1v1h-1zM0 261h1v1h-1zM241 261h1v1h-1zM479 261h1v1h-1zM639 261h1v1h-1zM0 262h1v1h-1zM241 262h1v1h-1zM479 262h1v1h-1zM639 262h1v1h-1zM0 263h1v1h-1zM241 263h1v1h-1zM479 263h1v1h-1zM639 263h1v1h-1zM0 264h1v1h-1zM241 264h1v1h-1zM479 264h1v1h-1zM639 264h1v1h-1zM0 265h1v1h-1zM241 265h1v1h-1zM479 265h1v1h-1zM639 265h1v1h-1zM0 266h1v1h-1zM241 266h1v1h-1zM479 266h1v1h-1zM639 266h1v1h-1zM0 267h1v1h-1zM241 267h1v1h-1zM479 267h1v1h-1zM639 267h1v1h-1zM0 268h1v1h-1zM241 268h1v1h-1zM479 268h1v1h-1zM639 268h1v1h-1zM0 269h1v1h-1zM241 269h1v1h-1zM479 269h1v1h-1zM639 269h1v1h-1zM0 270h1v1h-1zM241 270h1v1h-1zM479 270h1v1h-1zM639 270h1v1h-1zM0 271h1v1h-1zM241 271h1v1h-1zM479 271h1v1h-1zM639 271h1v1h-1zM0 272h1v1h-1zM242 272h1v1h-1zM479 272h1v1h-1zM639 272h1v1h-1zM0 273h1v1h-1zM242 273h1v1h-1zM479 273h1v1h-1zM639 273h1v1h-1zM0 274h1v1h-1zM242 274h1v1h-1zM479 274h1v1h-1zM639 274h1v1h-1zM0 275h1v1h-1zM242 275h1v1h-1zM479 275h1v1h-1zM639 275h1v1h-1zM0 276h1v1h-1zM242 276h1v1h-1zM479 276h1v1h-1zM639 276h1v1h-1zM0 277h1v1h-1zM242 277h1v1h-1zM479 277h1v1h-1zM639 277h1v1h-1zM0 278h1v1h-1zM242 278h1v1h-1zM479 278h1v1h-1zM639 278h1v1h-1zM0 279h1v1h-1zM242 279h1v1h-1zM479 279h1v1h-1zM639 279h1v1h-1zM0 280h1v1h-1zM242 280h1v1h-1zM479 280h1v1h-1zM639 280h1v1h-1zM0 281h1v1h-1zM242 281h1v1h-1zM479 281h1v1h-1zM639 281h1v1h-1zM0 282h1v1h-1zM242 282h1v1h-1zM479 282h1v1h-1zM639 282h1v1h-1zM0 283h1v1h-1zM242 283h1v1h-1zM479 283h1v1h-1zM639 283h1v1h-1zM0 284h1v1h-1zM242 284h1v1h-1zM479 284h1v1h-1zM639 284h1v1h-1zM0 285h1v1h-1zM242 285h1v1h-1zM479 285h1v1h-1zM639 285h1v1h-1zM0 286h1v1h-1zM243 286h1v1h-1zM479 286h1v1h-1zM639 286h1v1h-1zM0 287h1v1h-1zM243 287h1v1h-1zM479 287h1v1h-1zM639 287h1v1h-1zM0 288h1v1h-1zM243 288h1v1h-1zM479 288h1v1h-1zM639 288h1v1h-1zM0 289h1v1h-1zM243 289h1v1h-1zM479 289h1v1h-1zM639 289h1v1h-1zM0 290h1v1h-1zM243 290h1v1h-1zM479 290h1v1h-1zM639 290h1v1h-1zM0 291h1v1h-1zM243 291h1v1h-1zM479 291h1v1h-1zM639 291h1v1h-1zM0 292h1v1h-1zM243 292h1v1h-1zM479 292h1v1h-1zM639 292h1v1h-1zM0 293h1v1h-1zM243 293h1v1h-1zM479 293h1v1h-1zM639 293h1v1h-1zM0 294h1v1h-1zM243 294h1v1h-1zM479 294h1v1h-1zM639 294h1v1h-1zM0 295h1v1h-1zM243 295h1v1h-1zM479 295h1v1h-1zM639 295h1v1h-1zM0 296h1v1h-1zM243 296h1v1h-1zM479 296h1v1h-1zM639 296h1v1h-1zM0 297h1v1h-1zM243 297h1v1h-1zM479 297h1v1h-1zM639 297h1v1h-1zM0 298h1v1h-1zM243 298h1v1h-1zM479 298h1v1h-1zM639 298h1v1h-1zM0 299h1v1h-1zM244 299h1v1h-1zM479 299h1v1h-1zM639 299h1v1h-1zM0 300h1v1h-1zM244 300h1v1h-1zM479 300h1v1h-1zM639 300h1v1h-1zM0 301h1v1h-1zM244 301h1v1h-1zM479 301h1v1h-1zM639 301h1v1h-1zM0 302h1v1h-1zM244 302h1v1h-1zM479 302h1v1h-1zM639 302h1v1h-1zM0 303h1v1h-1zM244 303h1v1h-1zM479 303h1v1h-1zM639 303h1v1h-1zM0 304h1v1h-1zM244 304h1v1h-1zM479 304h1v1h-1zM639 304h1v1h-1zM0 305h1v1h-1zM244 305h1v1h-1zM479 305h1v1h-1zM639 305h1v1h-1zM0 306h1v1h-1zM244 306h1v1h-1zM479 306h1v1h-1zM639 306h1v1h-1zM0 307h1v1h-1zM244 307h1v1h-1zM479 307h1v1h-1zM639 307h1v1h-1zM0 308h1v1h-1zM244 308h1v1h-1zM479 308h1v1h-1zM639 308h1v1h-1zM0 309h1v1h-1zM244 309h1v1h-1zM479 309h1v1h-1zM639 309h1v1h-1zM0 310h1v1h-1zM244 310h1v1h-1zM479 310h1v1h-1zM639 310h1v1h-1zM0 311h1v1h-1zM244 311h1v1h-1zM479 311h1v1h-1zM639 311h1v1h-1zM0 312h1v1h-1zM245 312h1v1h-1zM479 312h1v1h-1zM639 312h1v1h-1zM0 313h1v1h-1zM245 313h1v1h-1zM479 313h1v1h-1zM639 313h1v1h-1zM0 314h1v1h-1zM245 314h1v1h-1zM479 314h1v1h-1zM639 314h1v1h-1zM0 315h1v1h-1zM245 315h1v1h-1zM479 315h1v1h-1zM639 315h1v1h-1zM0 316h1v1h-1zM245 316h1v1h-1zM479 316h1v1h-1zM639 316h1v1h-1zM0 317h1v1h-1zM245 317h1v1h-1zM479 317h1v1h-1zM639 317h1v1h-1zM0 318h1v1h-1zM245 318h1v1h-1zM479 318h1v1h-1zM639 318h1v1h-1zM0 319h1v1h-1zM245 319h1v1h-1zM479 319h1v1h-1zM639 319h1v1h-1zM0 320h1v1h-1zM245 320h1v1h-1zM479 320h1v1h-1zM639 320h1v1h-1zM0 321h1v1h-1zM245 321h1v1h-1zM479 321h1v1h-1zM639 321h1v1h-1zM0 322h1v1h-1zM245 322h1v1h-1zM479 322h1v1h-1zM639 322h1v1h-1zM0 323h1v1h-1zM245 323h1v1h-1zM479 323h1v1h-1zM639 323h1v1h-1zM0 324h1v1h-1zM245 324h1v1h-1zM479 324h1v1h-1zM639 324h1v1h-1zM0 325h1v1h-1zM246 325h1v1h-1zM479 325h1v1h-1zM639 325h1v1h-1zM0 326h1v1h-1zM246 326h1v1h-1zM479 326h1v1h-1zM639 326h1v1h-1zM0 327h1v1h-1zM246 327h1v1h-1zM479 327h1v1h-1zM639 327h1v1h-1zM0 328h1v1h-1zM246 328h1v1h-1zM479 328h1v1h-1zM639 328h1v1h-1zM0 329h1v1h-1zM246 329h1v1h-1zM479 329h1v1h-1zM639 329h1v1h-1zM0 330h1v1h-1zM246 330h1v1h-1zM479 330h1v1h-1zM639 330h1v1h-1zM0 331h1v1h-1zM246 331h1v1h-1zM479 331h1v1h-1zM639 331h1v1h-1zM0 332h1v1h-1zM246 332h1v1h-1zM479 332h1v1h-1zM639 332h1v1h-1zM0 333h1v1h-1zM246 333h1v1h-1zM479 333h1v1h-1zM639 333h1v1h-1zM0 334h1v1h-1zM246 334h1v1h-1zM479 334h1v1h-1zM639 334h1v1h-1zM0 335h1v1h-1zM246 335h1v1h-1zM479 335h1v1h-1zM639 335h1v1h-1zM0 336h1v1h-1zM246 336h1v1h-1zM479 336h1v1h-1zM639 336h1v1h-1zM0 337h1v1h-1zM246 337h1v1h-1zM479 337h1v1h-1zM639 337h1v1h-1zM0 338h1v1h-1zM247 338h1v1h-1zM479 338h1v1h-1zM639 338h1v1h-1zM0 339h1v1h-1zM247 339h1v1h-1zM479 339h1v1h-1zM639 339h1v1h-1zM0 340h1v1h-1zM247 340h1v1h-1zM479 340h1v1h-1zM639 340h1v1h-1zM0 341h1v1h-1zM247 341h1v1h-1zM479 341h1v1h-1zM639 341h1v1h-1zM0 342h1v1h-1zM247 342h1v1h-1zM479 342h1v1h-1zM639 342h1v1h-1zM0 343h1v1h-1zM247 343h1v1h-1zM479 343h1v1h-1zM639 343h1v1h-1zM0 344h1v1h-1zM247 344h1v1h-1zM479 344h1v1h-1zM639 344h1v1h-1zM0 345h1v1h-1zM247 345h1v1h-1zM479 345h1v1h-1zM639 345h1v1h-1zM0 346h1v1h-1zM247 346h1v1h-1zM479 346h1v1h-1zM639 346h1v1h-1zM0 347h1v1h-1zM247 347h1v1h-1zM479 347h1v1h-1zM639 347h1v1h-1zM0 348h1v1h-1zM247 348h1v1h-1zM479 348h1v1h-1zM639 348h1v1h-1zM0 349h1v1h-1zM247 349h1v1h-1zM479 349h1v1h-1zM639 349h1v1h-1zM0 350h1v1h-1zM247 350h1v1h-1zM479 350h1v1h-1zM639 350h1v1h-1zM0 351h1v1h-1zM248 351h1v1h-1zM479 351h1v1h-1zM639 351h1v1h-1zM0 352h1v1h-1zM248 352h1v1h-1zM479 352h1v1h-1zM639 352h1v1h-1zM0 353h1v1h-1zM248 353h1v1h-1zM479 353h1v1h-1zM639 353h1v1h-1zM0 354h1v1h-1zM248 354h1v1h-1zM479 354h1v1h-1zM639 354h1v1h-1zM0 355h1v1h-1zM248 355h1v1h-1zM479 355h1v1h-1zM639 355h1v1h-1zM0 356h1v1h-1zM248 356h1v1h-1zM479 356h1v1h-1zM639 356h1v1h-1zM0 357h1v1h-1zM248 357h1v1h-1zM479 357h1v1h-1zM639 357h1v1h-1zM0 358h1v1h-1zM248 358h1v1h-1zM479 358h1v1h-1zM639 358h1v1h-1zM0 359h1v1h-1zM248 359h1v1h-1zM479 359h1v1h-1zM639 359h1v1h-1zM0 360h1v1h-1zM248 360h1v1h-1zM479 360h1v1h-1zM639 360h1v1h-1zM0 361h1v1h-1zM248 361h1v1h-1zM479 361h1v1h-1zM639 361h1v1h-1zM0 362h1v1h-1zM248 362h1v1h-1zM479 362h1v1h-1zM639 362h1v1h-1zM0 363h1v1h-1zM248 363h1v1h-1zM479 363h1v1h-1zM639 363h1v1h-1zM0 364h1v1h-1zM248 364h1v1h-1zM479 364h1v1h-1zM639 364h1v1h-1zM0 365h1v1h-1zM249 365h1v1h-1zM479 365h1v1h-1zM639 365h1v1h-1zM0 366h1v1h-1zM249 366h1v1h-1zM479 366h1v1h-1zM639 366h1v1h-1zM0 367h1v1h-1zM249 367h1v1h-1zM479 367h1v1h-1zM639 367h1v1h-1zM0 368h1v1h-1zM249 368h1v1h-1zM479 368h1v1h-1zM639 368h1v1h-1zM0 369h1v1h-1zM249 369h1v1h-1zM479 369h1v1h-1zM639 369h1v1h-1zM0 370h1v1h-1zM249 370h1v1h-1zM479 370h1v1h-1zM639 370h1v1h-1zM0 371h1v1h-1zM249 371h1v1h-1zM479 371h1v1h-1zM639 371h1v1h-1zM0 372h1v1h-1zM249 372h1v1h-1zM479 372h1v1h-1zM639 372h1v1h-1zM0 373h1v1h-1zM249 373h1v1h-1zM479 373h1v1h-1zM639 373h1v1h-1zM0 374h1v1h-1zM249 374h1v1h-1zM479 374h1v1h-1zM639 374h1v1h-1zM0 375h1v1h-1zM249 375h1v1h-1zM479 375h1v1h-1zM639 375h1v1h-1zM0 376h1v1h-1zM249 376h1v1h-1zM479 376h1v1h-1zM639 376h1v1h-1zM0 377h1v1h-1zM249 377h1v1h-1zM479 377h1v1h-1zM639 377h1v1h-1zM0 378h1v1h-1zM250 378h1v1h-1zM479 378h1v1h-1zM639 378h1v1h-1zM0 379h1v1h-1zM250 379h1v1h-1zM479 379h1v1h-1zM639 379h1v1h-1zM0 380h1v1h-1zM250 380h1v1h-1zM479 380h1v1h-1zM639 380h1v1h-1zM0 381h1v1h-1zM250 381h1v1h-1zM479 381h1v1h-1zM639 381h1v1h-1zM0 382h1v1h-1zM479 382h1v1h-1zM639 382h1v1h-1zM0 383h1v1h-1zM250 383h1v1h-1zM479 383h1v1h-1zM639 383h1v1h-1zM0 384h1v1h-1zM250 384h1v1h-1zM479 384h1v1h-1zM639 384h1v1h-1zM0 385h1v1h-1zM250 385h1v1h-1zM479 385h1v1h-1zM639 385h1v1h-1zM0 386h1v1h-1zM479 386h1v1h-1zM639 386h1v1h-1zM0 387h1v1h-1zM250 387h1v1h-1zM479 387h1v1h-1zM639 387h1v1h-1zM0 388h1v1h-1zM250 388h1v1h-1zM479 388h1v1h-1zM639 388h1v1h-1zM0 389h1v1h-1zM250 389h1v1h-1zM479 389h1v1h-1zM639 389h1v1h-1zM0 390h1v1h-1zM250 390h1v1h-1zM479 390h1v1h-1zM639 390h1v1h-1zM0 391h1v1h-1zM251 391h1v1h-1zM479 391h1v1h-1zM639 391h1v1h-1zM0 392h1v1h-1zM251 392h1v1h-1zM479 392h1v1h-1zM639 392h1v1h-1zM0 393h1v1h-1zM251 393h1v1h-1zM479 393h1v1h-1zM639 393h1v1h-1zM0 394h1v1h-1zM479 394h1v1h-1zM639 394h1v1h-1zM0 395h1v1h-1zM479 395h1v1h-1zM639 395h1v1h-1zM0 396h1v1h-1zM479 396h1v1h-1zM639 396h1v1h-1zM0 397h1v1h-1zM479 397h1v1h-1zM639 397h1v1h-1zM0 398h1v1h-1zM479 398h1v1h-1zM639 398h1v1h-1zM0 399h1v1h-1zM479 399h1v1h-1zM639 399h1v1h-1zM0 400h1v1h-1zM251 400h1v1h-1zM479 400h1v1h-1zM639 400h1v1h-1zM0 401h1v1h-1zM251 401h1v1h-1zM479 401h1v1h-1zM639 401h1v1h-1zM0 402h1v1h-1zM251 402h1v1h-1zM479 402h1v1h-1zM639 402h1v1h-1zM0 403h1v1h-1zM251 403h1v1h-1zM479 403h1v1h-1zM639 403h1v1h-1zM0 404h1v1h-1zM479 404h1v1h-1zM639 404h1v1h-1zM0 405h1v1h-1zM479 405h1v1h-1zM639 405h1v1h-1zM0 406h1v1h-1zM479 406h1v1h-1zM639 406h1v1h-1zM0 407h1v1h-1zM479 407h1v1h-1zM639 407h1v1h-1zM0 408h1v1h-1zM479 408h1v1h-1zM639 408h1v1h-1zM0 409h1v1h-1zM479 409h1v1h-1zM639 409h1v1h-1zM0 410h1v1h-1zM479 410h1v1h-1zM639 410h1v1h-1zM0 411h1v1h-1zM479 411h1v1h-1zM639 411h1v1h-1zM0 412h1v1h-1zM252 412h1v1h-1zM479 412h1v1h-1zM639 412h1v1h-1zM0 413h1v1h-1zM252 413h1v1h-1zM479 413h1v1h-1zM639 413h1v1h-1zM0 414h1v1h-1zM252 414h1v1h-1zM479 414h1v1h-1zM639 414h1v1h-1zM0 415h1v1h-1zM252 415h1v1h-1zM479 415h1v1h-1zM639 415h1v1h-1zM0 416h1v1h-1zM252 416h1v1h-1zM479 416h1v1h-1zM639 416h1v1h-1zM0 417h1v1h-1zM479 417h1v1h-1zM639 417h1v1h-1zM0 418h1v1h-1zM253 418h1v1h-1zM479 418h1v1h-1zM639 418h1v1h-1zM0 419h1v1h-1zM253 419h1v1h-1zM479 419h1v1h-1zM639 419h1v1h-1zM0 420h1v1h-1zM253 420h1v1h-1zM479 420h1v1h-1zM639 420h1v1h-1zM0 421h1v1h-1zM253 421h1v1h-1zM479 421h1v1h-1zM639 421h1v1h-1zM0 422h1v1h-1zM253 422h1v1h-1zM479 422h1v1h-1zM639 422h1v1h-1zM0 423h1v1h-1zM253 423h1v1h-1zM479 423h1v1h-1zM639 423h1v1h-1zM0 424h1v1h-1zM479 424h1v1h-1zM639 424h1v1h-1zM0 425h1v1h-1zM479 425h1v1h-1zM639 425h1v1h-1zM0 426h1v1h-1zM479 426h1v1h-1zM639 426h1v1h-1zM0 427h1v1h-1zM479 427h1v1h-1zM639 427h1v1h-1zM0 428h1v1h-1zM479 428h1v1h-1zM639 428h1v1h-1zM0 429h1v1h-1zM479 429h1v1h-1zM639 429h1v1h-1zM0 430h1v1h-1zM254 430h1v1h-1zM479 430h1v1h-1zM639 430h1v1h-1zM0 431h1v1h-1zM254 431h1v1h-1zM479 431h1v1h-1zM639 431h1v1h-1zM0 432h1v1h-1zM254 432h1v1h-1zM479 432h1v1h-1zM639 432h1v1h-1zM0 433h1v1h-1zM254 433h1v1h-1zM479 433h1v1h-1zM639 433h1v1h-1zM0 434h1v1h-1zM254 434h1v1h-1zM479 434h1v1h-1zM639 434h1v1h-1zM0 435h1v1h-1zM254 435h1v1h-1zM479 435h1v1h-1zM639 435h1v1h-1zM0 436h1v1h-1zM254 436h1v1h-1zM479 436h1v1h-1zM639 436h1v1h-1zM0 437h1v1h-1zM254 437h1v1h-1zM479 437h1v1h-1zM639 437h1v1h-1zM0 438h1v1h-1zM254 438h1v1h-1zM479 438h1v1h-1zM639 438h1v1h-1zM0 439h1v1h-1zM254 439h1v1h-1zM479 439h1v1h-1zM639 439h1v1h-1zM0 440h1v1h-1zM254 440h1v1h-1zM479 440h1v1h-1zM639 440h1v1h-1zM0 441h1v1h-1zM254 441h1v1h-1zM479 441h1v1h-1zM639 441h1v1h-1zM0 442h1v1h-1zM254 442h1v1h-1zM479 442h1v1h-1zM639 442h1v1h-1zM0 443h1v1h-1zM254 443h1v1h-1zM479 443h1v1h-1zM639 443h1v1h-1zM0 444h1v1h-1zM255 444h1v1h-1zM479 444h1v1h-1zM639 444h1v1h-1zM0 445h1v1h-1zM255 445h1v1h-1zM479 445h1v1h-1zM639 445h1v1h-1zM0 446h1v1h-1zM255 446h1v1h-1zM479 446h1v1h-1zM639 446h1v1h-1zM0 447h1v1h-1zM255 447h1v1h-1zM479 447h1v1h-1zM639 447h1v1h-1zM0 448h1v1h-1zM255 448h1v1h-1zM479 448h1v1h-1zM639 448h1v1h-1zM0 449h1v1h-1zM255 449h1v1h-1zM479 449h1v1h-1zM639 449h1v1h-1zM0 450h1v1h-1zM255 450h1v1h-1zM479 450h1v1h-1zM639 450h1v1h-1zM0 451h1v1h-1zM255 451h1v1h-1zM479 451h1v1h-1zM639 451h1v1h-1zM0 452h1v1h-1zM255 452h1v1h-1zM479 452h1v1h-1zM639 452h1v1h-1zM0 453h1v1h-1zM255 453h1v1h-1zM479 453h1v1h-1zM639 453h1v1h-1zM0 454h1v1h-1zM255 454h1v1h-1zM479 454h1v1h-1zM639 454h1v1h-1zM0 455h1v1h-1zM255 455h1v1h-1zM479 455h1v1h-1zM639 455h1v1h-1zM0 456h1v1h-1zM255 456h1v1h-1zM479 456h1v1h-1zM639 456h1v1h-1zM0 457h1v1h-1zM256 457h1v1h-1zM479 457h1v1h-1zM639 457h1v1h-1zM0 458h1v1h-1zM256 458h1v1h-1zM479 458h1v1h-1zM639 458h1v1h-1zM0 459h1v1h-1zM256 459h1v1h-1zM479 459h1v1h-1zM639 459h1v1h-1zM0 460h1v1h-1zM256 460h1v1h-1zM479 460h1v1h-1zM639 460h1v1h-1zM0 461h1v1h-1zM256 461h1v1h-1zM479 461h1v1h-1zM639 461h1v1h-1zM0 462h1v1h-1zM256 462h1v1h-1zM479 462h1v1h-1zM639 462h1v1h-1zM0 463h1v1h-1zM256 463h1v1h-1zM479 463h1v1h-1zM639 463h1v1h-1zM0 464h1v1h-1zM256 464h1v1h-1zM479 464h1v1h-1zM639 464h1v1h-1zM0 465h1v1h-1zM479 465h1v1h-1zM639 465h1v1h-1zM0 466h1v1h-1zM256 466h1v1h-1zM479 466h1v1h-1zM639 466h1v1h-1zM0 467h1v1h-1zM256 467h1v1h-1zM479 467h1v1h-1zM639 467h1v1h-1zM0 468h1v1h-1zM256 468h1v1h-1zM479 468h1v1h-1zM639 468h1v1h-1zM0 469h1v1h-1zM256 469h1v1h-1zM479 469h1v1h-1zM639 469h1v1h-1zM0 470h1v1h-1zM257 470h1v1h-1zM479 470h1v1h-1zM639 470h1v1h-1zM0 471h1v1h-1zM257 471h1v1h-1zM479 471h1v1h-1zM639 471h1v1h-1zM0 472h1v1h-1zM257 472h1v1h-1zM479 472h1v1h-1zM639 472h1v1h-1zM0 473h1v1h-1zM257 473h1v1h-1zM479 473h1v1h-1zM639 473h1v1h-1zM0 474h1v1h-1zM257 474h1v1h-1zM479 474h1v1h-1zM639 474h1v1h-1zM0 475h1v1h-1zM257 475h1v1h-1zM479 475h1v1h-1zM639 475h1v1h-1zM0 476h1v1h-1zM257 476h1v1h-1zM479 476h1v1h-1zM639 476h1v1h-1zM0 477h1v1h-1zM479 477h1v1h-1zM639 477h1v1h-1zM0 478h1v1h-1zM479 478h1v1h-1zM639 478h1v1h-1zM0 479h640v1h-640z"/>
<path fill="#ffffff" d="M224 12h31v1h-31zM213 13h11v1h-11zM235 13h1v1h-1zM255 13h11v1h-11zM206 14h7v1h-7zM235 14h1v1h-1zM266 14h7v1h-7zM200 15h6v1h-6zM235 15h1v1h-1zM273 15h6v1h-6zM195 16h5v1h-5zM235 16h1v1h-1zM279 16h5v1h-5zM190 17h5v1h-5zM235 17h1v1h-1zM284 17h5v1h-5zM186 18h4v1h-4zM235 18h1v1h-1zM289 18h4v1h-4zM182 19h4v1h-4zM235 19h1v1h-1zM293 19h4v1h-4zM178 20h4v1h-4zM235 20h1v1h-1zM297 20h4v1h-4zM175 21h3v1h-3zM235 21h1v1h-1zM301 21h3v1h-3zM171 22h4v1h-4zM235 22h1v1h-1zM304 22h4v1h-4zM168 23h3v1h-3zM235 23h1v1h-1zM308 23h3v1h-3zM165 24h3v1h-3zM235 24h1v1h-1zM311 24h3v1h-3zM162 25h3v1h-3zM235 25h1v1h-1zM314 25h3v1h-3zM160 26h2v1h-2zM235 26h1v1h-1zM317 26h2v1h-2zM157 27h3v1h-3zM235 27h1v1h-1zM319 27h3v1h-3zM155 28h2v1h-2zM235 28h1v1h-1zM322 28h2v1h-2zM152 29h3v1h-3zM235 29h1v1h-1zM324 29h3v1h-3zM150 30h2v1h-2zM235 30h1v1h-1zM327 30h2v1h-2zM147 31h3v1h-3zM235 31h1v1h-1zM329 31h3v1h-3zM145 32h2v1h-2zM235 32h1v1h-1zM332 32h2v1h-2zM143 33h2v1h-2zM235 33h1v1h-1zM334 33h2v1h-2zM141 34h2v1h-2zM235 34h1v1h-1zM336 34h2v1h-2zM139 35h2v1h-2zM235 35h1v1h-1zM338 35h2v1h-2zM137 36h2v1h-2zM235 36h1v1h-1zM340 36h2v1h-2zM135 37h2v1h-2zM235 37h1v1h-1zM342 37h2v1h-2zM133 38h2v1h-2zM235 38h1v1h-1zM344 38h2v1h-2zM131 39h2v1h-2zM235 39h1v1h-1zM346 39h2v1h-2zM129 40h2v1h-2zM235 40h1v1h-1zM348 40h2v1h-2zM128 41h1v1h-1zM235 41h1v1h-1zM348 41h1v1h-1zM350 41h1v1h-1zM126 42h2v1h-2zM235 42h1v1h-1zM347 42h1v1h-1zM351 42h2v1h-2zM124 43h2v1h-2zM235 43h1v1h-1zM347 43h1v1h-1zM353 43h2v1h-2zM122 44h2v1h-2zM235 44h1v1h-1zM346 44h1v1h-1zM355 44h2v1h-2zM121 45h1v1h-1zM235 45h1v1h-1zM346 45h1v1h-1zM357 45h1v1h-1zM119 46h2v1h-2zM122 46h1v1h-1zM235 46h1v1h-1zM345 46h1v1h-1zM358 46h2v1h-2zM118 47h1v1h-1zM123 47h1v1h-1zM235 47h1v1h-1zM345 47h1v1h-1zM360 47h1v1h-1zM116 48h2v1h-2zM123 48h1v1h-1zM226 48h27v1h-27zM344 48h1v1h-1zM361 48h2v1h-2zM115 49h1v1h-1zM124 49h1v1h-1zM216 49h10v1h-10zM235 49h1v1h-1zM251 49h1v1h-1zM253 49h10v1h-10zM343 49h1v1h-1zM363 49h1v1h-1zM113 50h2v1h-2zM124 50h1v1h-1zM209 50h7v1h-7zM219 50h1v1h-1zM235 50h1v1h-1zM251 50h1v1h-1zM263 50h7v1h-7zM343 50h1v1h-1zM364 50h2v1h-2zM112 51h1v1h-1zM125 51h1v1h-1zM203 51h6v1h-6zM219 51h1v1h-1zM235 51h1v1h-1zM251 51h1v1h-1zM268 51h1v1h-1zM270 51h6v1h-6zM342 51h1v1h-1zM366 51h1v1h-1zM110 52h2v1h-2zM126 52h1v1h-1zM198 52h5v1h-5zM219 52h1v1h-1zM235 52h1v1h-1zM251 52h1v1h-1zM268 52h1v1h-1zM276 52h5v1h-5zM342 52h1v1h-1zM367 52h2v1h-2zM109 53h1v1h-1zM126 53h1v1h-1zM194 53h4v1h-4zM202 53h1v1h-1zM219 53h1v1h-1zM235 53h1v1h-1zM251 53h1v1h-1zM268 53h1v1h-1zM281 53h4v1h-4zM341 53h1v1h-1zM369 53h1v1h-1zM107 54h2v1h-2zM127 54h1v1h-1zM190 54h4v1h-4zM202 54h1v1h-1zM219 54h1v1h-1zM236 54h1v1h-1zM251 54h1v1h-1zM267 54h1v1h-1zM284 54h5v1h-5zM341 54h1v1h-1zM370 54h2v1h-2zM106 55h1v1h-1zM128 55h1v1h-1zM187 55h3v1h-3zM203 55h1v1h-1zM220 55h1v1h-1zM236 55h1v1h-1zM250 55h1v1h-1zM267 55h1v1h-1zM284 55h1v1h-1zM289 55h3v1h-3zM340 55h1v1h-1zM372 55h1v1h-1zM105 56h1v1h-1zM128 56h1v1h-1zM183 56h4v1h-4zM203 56h1v1h-1zM220 56h1v1h-1zM236 56h1v1h-1zM250 56h1v1h-1zM267 56h1v1h-1zM283 56h1v1h-1zM292 56h4v1h-4zM339 56h1v1h-1zM373 56h1v1h-1zM103 57h2v1h-2zM129 57h1v1h-1zM180 57h3v1h-3zM186 57h1v1h-1zM203 57h1v1h-1zM220 57h1v1h-1zM236 57h1v1h-1zM250 57h1v1h-1zM267 57h1v1h-1zM283 57h1v1h-1zM296 57h3v1h-3zM339 57h1v1h-1zM374 57h2v1h-2zM102 58h1v1h-1zM129 58h1v1h-1zM177 58h3v1h-3zM187 58h1v1h-1zM203 58h1v1h-1zM220 58h1v1h-1zM236 58h1v1h-1zM250 58h1v1h-1zM267 58h1v1h-1zM283 58h1v1h-1zM299 58h3v1h-3zM338 58h1v1h-1zM376 58h1v1h-1zM101 59h1v1h-1zM130 59h1v1h-1zM174 59h3v1h-3zM187 59h1v1h-1zM203 59h1v1h-1zM220 59h1v1h-1zM236 59h1v1h-1zM250 59h1v1h-1zM266 59h1v1h-1zM282 59h1v1h-1zM300 59h1v1h-1zM302 59h3v1h-3zM338 59h1v1h-1zM377 59h1v1h-1zM99 60h2v1h-2zM131 60h1v1h-1zM172 60h2v1h-2zM187 60h1v1h-1zM203 60h1v1h-1zM220 60h1v1h-1zM226 60h27v1h-27zM266 60h1v1h-1zM282 60h1v1h-1zM300 60h1v1h-1zM305 60h2v1h-2zM337 60h1v1h-1zM378 60h2v1h-2zM98 61h1v1h-1zM131 61h1v1h-1zM169 61h3v1h-3zM188 61h1v1h-1zM204 61h1v1h-1zM216 61h10v1h-10zM253 61h10v1h-10zM266 61h1v1h-1zM282 61h1v1h-1zM299 61h1v1h-1zM307 61h3v1h-3zM337 61h1v1h-1zM380 61h1v1h-1zM97 62h1v1h-1zM132 62h1v1h-1zM167 62h2v1h-2zM170 62h1v1h-1zM188 62h1v1h-1zM204 62h1v1h-1zM210 62h6v1h-6zM225 62h1v1h-1zM263 62h6v1h-6zM282 62h1v1h-1zM299 62h1v1h-1zM310 62h2v1h-2zM336 62h1v1h-1zM381 62h1v1h-1zM96 63h1v1h-1zM133 63h1v1h-1zM164 63h3v1h-3zM170 63h1v1h-1zM188 63h1v1h-1zM204 63h6v1h-6zM225 63h1v1h-1zM269 63h6v1h-6zM281 63h1v1h-1zM298 63h1v1h-1zM312 63h3v1h-3zM336 63h1v1h-1zM382 63h1v1h-1zM94 64h2v1h-2zM133 64h1v1h-1zM162 64h2v1h-2zM171 64h1v1h-1zM188 64h1v1h-1zM200 64h4v1h-4zM225 64h1v1h-1zM275 64h4v1h-4zM281 64h1v1h-1zM298 64h1v1h-1zM315 64h2v1h-2zM335 64h1v1h-1zM383 64h2v1h-2zM93 65h1v1h-1zM134 65h1v1h-1zM160 65h2v1h-2zM171 65h1v1h-1zM189 65h1v1h-1zM195 65h5v1h-5zM225 65h1v1h-1zM279 65h5v1h-5zM298 65h1v1h-1zM315 65h1v1h-1zM317 65h2v1h-2zM334 65h1v1h-1zM385 65h1v1h-1zM92 66h1v1h-1zM134 66h1v1h-1zM157 66h3v1h-3zM172 66h1v1h-1zM189 66h1v1h-1zM192 66h3v1h-3zM225 66h1v1h-1zM284 66h3v1h-3zM297 66h1v1h-1zM315 66h1v1h-1zM319 66h3v1h-3zM334 66h1v1h-1zM386 66h1v1h-1zM91 67h1v1h-1zM135 67h1v1h-1zM155 67h2v1h-2zM172 67h1v1h-1zM188 67h4v1h-4zM226 67h1v1h-1zM287 67h4v1h-4zM297 67h1v1h-1zM314 67h1v1h-1zM322 67h2v1h-2zM333 67h1v1h-1zM387 67h1v1h-1zM90 68h1v1h-1zM136 68h1v1h-1zM153 68h3v1h-3zM173 68h1v1h-1zM185 68h3v1h-3zM226 68h1v1h-1zM291 68h3v1h-3zM296 68h1v1h-1zM314 68h1v1h-1zM324 68h2v1h-2zM333 68h1v1h-1zM388 68h1v1h-1zM89 69h1v1h-1zM136 69h1v1h-1zM151 69h2v1h-2zM156 69h1v1h-1zM173 69h1v1h-1zM182 69h3v1h-3zM226 69h1v1h-1zM294 69h3v1h-3zM313 69h1v1h-1zM326 69h2v1h-2zM332 69h1v1h-1zM389 69h1v1h-1zM87 70h2v1h-2zM137 70h1v1h-1zM150 70h1v1h-1zM156 70h1v1h-1zM174 70h1v1h-1zM179 70h3v1h-3zM226 70h1v1h-1zM297 70h3v1h-3zM313 70h1v1h-1zM328 70h1v1h-1zM332 70h1v1h-1zM390 70h2v1h-2zM86 71h1v1h-1zM138 71h1v1h-1zM148 71h2v1h-2zM157 71h1v1h-1zM174 71h1v1h-1zM176 71h3v1h-3zM226 71h1v1h-1zM300 71h3v1h-3zM312 71h1v1h-1zM329 71h3v1h-3zM392 71h1v1h-1zM85 72h1v1h-1zM138 72h1v1h-1zM146 72h2v1h-2zM157 72h1v1h-1zM174 72h2v1h-2zM226 72h1v1h-1zM303 72h2v1h-2zM312 72h1v1h-1zM330 72h3v1h-3zM393 72h1v1h-1zM84 73h1v1h-1zM139 73h1v1h-1zM144 73h2v1h-2zM158 73h1v1h-1zM171 73h3v1h-3zM226 73h1v1h-1zM305 73h3v1h-3zM311 73h1v1h-1zM329 73h1v1h-1zM333 73h2v1h-2zM394 73h1v1h-1zM83 74h1v1h-1zM139 74h1v1h-1zM142 74h2v1h-2zM158 74h1v1h-1zM169 74h2v1h-2zM226 74h1v1h-1zM308 74h2v1h-2zM311 74h1v1h-1zM329 74h1v1h-1zM335 74h2v1h-2zM395 74h1v1h-1zM82 75h1v1h-1zM140 75h2v1h-2zM159 75h1v1h-1zM167 75h2v1h-2zM226 75h1v1h-1zM310 75h2v1h-2zM328 75h1v1h-1zM337 75h1v1h-1zM396 75h1v1h-1zM81 76h1v1h-1zM139 76h2v1h-2zM159 76h1v1h-1zM164 76h3v1h-3zM226 76h1v1h-1zM312 76h3v1h-3zM328 76h1v1h-1zM338 76h2v1h-2zM397 76h1v1h-1zM80 77h1v1h-1zM138 77h1v1h-1zM141 77h1v1h-1zM160 77h1v1h-1zM162 77h2v1h-2zM226 77h1v1h-1zM315 77h2v1h-2zM327 77h1v1h-1zM340 77h1v1h-1zM398 77h1v1h-1zM79 78h1v1h-1zM136 78h2v1h-2zM141 78h1v1h-1zM160 78h2v1h-2zM226 78h1v1h-1zM317 78h2v1h-2zM327 78h1v1h-1zM341 78h2v1h-2zM399 78h1v1h-1zM78 79h1v1h-1zM134 79h2v1h-2zM142 79h1v1h-1zM158 79h2v1h-2zM227 79h1v1h-1zM319 79h2v1h-2zM326 79h1v1h-1zM343 79h2v1h-2zM400 79h1v1h-1zM77 80h1v1h-1zM133 80h1v1h-1zM143 80h1v1h-1zM156 80h2v1h-2zM227 80h1v1h-1zM321 80h2v1h-2zM326 80h1v1h-1zM345 80h1v1h-1zM401 80h1v1h-1zM76 81h1v1h-1zM131 81h2v1h-2zM143 81h1v1h-1zM154 81h2v1h-2zM227 81h1v1h-1zM323 81h3v1h-3zM345 81h3v1h-3zM402 81h1v1h-1zM75 82h1v1h-1zM130 82h1v1h-1zM144 82h1v1h-1zM153 82h1v1h-1zM227 82h1v1h-1zM325 82h1v1h-1zM344 82h1v1h-1zM348 82h1v1h-1zM403 82h1v1h-1zM74 83h1v1h-1zM129 83h1v1h-1zM145 83h1v1h-1zM151 83h2v1h-2zM227 83h1v1h-1zM326 83h2v1h-2zM344 83h1v1h-1zM349 83h1v1h-1zM404 83h1v1h-1zM73 84h1v1h-1zM127 84h2v1h-2zM145 84h1v1h-1zM149 84h2v1h-2zM227 84h25v1h-25zM327 84h3v1h-3zM343 84h1v1h-1zM350 84h2v1h-2zM405 84h1v1h-1zM72 85h1v1h-1zM126 85h2v1h-2zM146 85h3v1h-3zM218 85h9v1h-9zM252 85h9v1h-9zM326 85h1v1h-1zM330 85h2v1h-2zM342 85h1v1h-1zM352 85h1v1h-1zM406 85h1v1h-1zM71 86h1v1h-1zM125 86h1v1h-1zM128 86h1v1h-1zM146 86h1v1h-1zM212 86h6v1h-6zM261 86h6v1h-6zM326 86h1v1h-1zM332 86h1v1h-1zM342 86h1v1h-1zM353 86h1v1h-1zM407 86h1v1h-1zM70 87h1v1h-1zM123 87h2v1h-2zM128 87h1v1h-1zM144 87h2v1h-2zM207 87h5v1h-5zM267 87h5v1h-5zM325 87h1v1h-1zM333 87h2v1h-2zM341 87h1v1h-1zM354 87h2v1h-2zM408 87h1v1h-1zM70 88h1v1h-1zM122 88h1v1h-1zM129 88h1v1h-1zM143 88h1v1h-1zM202 88h5v1h-5zM272 88h5v1h-5zM325 88h1v1h-1zM335 88h1v1h-1zM340 88h1v1h-1zM356 88h1v1h-1zM408 88h1v1h-1zM69 89h1v1h-1zM121 89h1v1h-1zM130 89h1v1h-1zM141 89h2v1h-2zM199 89h3v1h-3zM277 89h3v1h-3zM324 89h1v1h-1zM336 89h2v1h-2zM340 89h1v1h-1zM357 89h1v1h-1zM409 89h1v1h-1zM68 90h1v1h-1zM119 90h2v1h-2zM130 90h1v1h-1zM140 90h1v1h-1zM195 90h4v1h-4zM280 90h4v1h-4zM324 90h1v1h-1zM338 90h2v1h-2zM358 90h2v1h-2zM410 90h1v1h-1zM67 91h1v1h-1zM118 91h1v1h-1zM131 91h1v1h-1zM138 91h2v1h-2zM192 91h3v1h-3zM284 91h3v1h-3zM323 91h1v1h-1zM339 91h2v1h-2zM358 91h1v1h-1zM360 91h1v1h-1zM411 91h1v1h-1zM66 92h1v1h-1zM117 92h1v1h-1zM132 92h1v1h-1zM137 92h1v1h-1zM189 92h3v1h-3zM287 92h3v1h-3zM323 92h1v1h-1zM341 92h1v1h-1zM357 92h1v1h-1zM361 92h1v1h-1zM412 92h1v1h-1zM65 93h1v1h-1zM116 93h1v1h-1zM132 93h1v1h-1zM135 93h2v1h-2zM186 93h3v1h-3zM290 93h3v1h-3zM322 93h1v1h-1zM342 93h2v1h-2zM356 93h1v1h-1zM362 93h1v1h-1zM413 93h1v1h-1zM64 94h1v1h-1zM115 94h1v1h-1zM133 94h2v1h-2zM183 94h3v1h-3zM293 94h3v1h-3zM321 94h1v1h-1zM344 94h1v1h-1zM355 94h1v1h-1zM363 94h1v1h-1zM414 94h1v1h-1zM64 95h1v1h-1zM113 95h2v1h-2zM133 95h1v1h-1zM181 95h2v1h-2zM296 95h2v1h-2zM321 95h1v1h-1zM345 95h1v1h-1zM354 95h1v1h-1zM364 95h2v1h-2zM414 95h1v1h-1zM63 96h1v1h-1zM112 96h1v1h-1zM114 96h1v1h-1zM131 96h2v1h-2zM179 96h2v1h-2zM298 96h2v1h-2zM320 96h1v1h-1zM346 96h2v1h-2zM354 96h1v1h-1zM366 96h1v1h-1zM415 96h1v1h-1zM62 97h1v1h-1zM111 97h1v1h-1zM115 97h1v1h-1zM130 97h1v1h-1zM176 97h3v1h-3zM300 97h3v1h-3zM320 97h1v1h-1zM348 97h1v1h-1zM353 97h1v1h-1zM367 97h1v1h-1zM416 97h1v1h-1zM61 98h1v1h-1zM110 98h1v1h-1zM116 98h1v1h-1zM129 98h2v1h-2zM174 98h2v1h-2zM303 98h2v1h-2zM319 98h1v1h-1zM349 98h1v1h-1zM352 98h1v1h-1zM368 98h1v1h-1zM417 98h1v1h-1zM60 99h1v1h-1zM109 99h1v1h-1zM117 99h1v1h-1zM127 99h2v1h-2zM131 99h1v1h-1zM172 99h2v1h-2zM305 99h2v1h-2zM319 99h1v1h-1zM350 99h2v1h-2zM369 99h1v1h-1zM418 99h1v1h-1zM60 100h1v1h-1zM108 100h1v1h-1zM118 100h1v1h-1zM126 100h1v1h-1zM132 100h1v1h-1zM170 100h2v1h-2zM307 100h2v1h-2zM318 100h1v1h-1zM352 100h1v1h-1zM370 100h1v1h-1zM418 100h1v1h-1zM59 101h1v1h-1zM107 101h1v1h-1zM118 101h1v1h-1zM125 101h1v1h-1zM132 101h1v1h-1zM168 101h2v1h-2zM309 101h2v1h-2zM318 101h1v1h-1zM353 101h1v1h-1zM371 101h1v1h-1zM419 101h1v1h-1zM58 102h1v1h-1zM106 102h1v1h-1zM119 102h1v1h-1zM124 102h1v1h-1zM133 102h1v1h-1zM166 102h2v1h-2zM311 102h2v1h-2zM317 102h1v1h-1zM354 102h1v1h-1zM371 102h2v1h-2zM420 102h1v1h-1zM57 103h1v1h-1zM105 103h1v1h-1zM120 103h1v1h-1zM123 103h1v1h-1zM134 103h1v1h-1zM164 103h2v1h-2zM313 103h2v1h-2zM317 103h1v1h-1zM355 103h1v1h-1zM370 103h1v1h-1zM373 103h1v1h-1zM421 103h1v1h-1zM57 104h1v1h-1zM104 104h1v1h-1zM121 104h2v1h-2zM135 104h1v1h-1zM162 104h2v1h-2zM315 104h2v1h-2zM356 104h2v1h-2zM369 104h1v1h-1zM374 104h1v1h-1zM421 104h1v1h-1zM56 105h1v1h-1zM103 105h1v1h-1zM120 105h1v1h-1zM135 105h1v1h-1zM161 105h1v1h-1zM317 105h1v1h-1zM358 105h1v1h-1zM367 105h2v1h-2zM375 105h1v1h-1zM422 105h1v1h-1zM55 106h1v1h-1zM102 106h1v1h-1zM119 106h1v1h-1zM136 106h1v1h-1zM159 106h2v1h-2zM318 106h2v1h-2zM359 106h1v1h-1zM366 106h1v1h-1zM376 106h1v1h-1zM423 106h1v1h-1zM54 107h1v1h-1zM101 107h2v1h-2zM118 107h1v1h-1zM137 107h1v1h-1zM157 107h2v1h-2zM320 107h2v1h-2zM360 107h1v1h-1zM365 107h1v1h-1zM377 107h1v1h-1zM424 107h1v1h-1zM54 108h1v1h-1zM100 108h1v1h-1zM103 108h1v1h-1zM117 108h1v1h-1zM138 108h1v1h-1zM156 108h1v1h-1zM322 108h1v1h-1zM361 108h1v1h-1zM364 108h1v1h-1zM378 108h1v1h-1zM424 108h1v1h-1zM53 109h1v1h-1zM99 109h1v1h-1zM104 109h1v1h-1zM116 109h1v1h-1zM139 109h1v1h-1zM154 109h2v1h-2zM323 109h2v1h-2zM362 109h2v1h-2zM379 109h1v1h-1zM425 109h1v1h-1zM52 110h1v1h-1zM98 110h1v1h-1zM105 110h1v1h-1zM115 110h1v1h-1zM139 110h1v1h-1zM153 110h1v1h-1zM325 110h1v1h-1zM363 110h1v1h-1zM380 110h1v1h-1zM426 110h1v1h-1zM52 111h1v1h-1zM97 111h1v1h-1zM106 111h1v1h-1zM114 111h1v1h-1zM140 111h1v1h-1zM151 111h2v1h-2zM326 111h2v1h-2zM364 111h1v1h-1zM381 111h1v1h-1zM426 111h1v1h-1zM51 112h1v1h-1zM96 112h1v1h-1zM106 112h1v1h-1zM113 112h1v1h-1zM141 112h1v1h-1zM150 112h1v1h-1zM328 112h1v1h-1zM365 112h1v1h-1zM382 112h1v1h-1zM427 112h1v1h-1zM50 113h1v1h-1zM95 113h1v1h-1zM107 113h1v1h-1zM112 113h1v1h-1zM142 113h1v1h-1zM149 113h1v1h-1zM329 113h1v1h-1zM366 113h1v1h-1zM383 113h1v1h-1zM428 113h1v1h-1zM50 114h1v1h-1zM95 114h1v1h-1zM108 114h1v1h-1zM111 114h1v1h-1zM142 114h1v1h-1zM147 114h2v1h-2zM330 114h2v1h-2zM367 114h1v1h-1zM382 114h2v1h-2zM428 114h1v1h-1zM49 115h1v1h-1zM94 115h1v1h-1zM109 115h2v1h-2zM143 115h1v1h-1zM146 115h1v1h-1zM332 115h1v1h-1zM368 115h1v1h-1zM381 115h1v1h-1zM384 115h1v1h-1zM429 115h1v1h-1zM48 116h1v1h-1zM93 116h1v1h-1zM109 116h1v1h-1zM144 116h2v1h-2zM333 116h1v1h-1zM369 116h1v1h-1zM380 116h1v1h-1zM385 116h1v1h-1zM430 116h1v1h-1zM48 117h1v1h-1zM92 117h1v1h-1zM108 117h1v1h-1zM143 117h2v1h-2zM334 117h2v1h-2zM370 117h1v1h-1zM378 117h2v1h-2zM386 117h1v1h-1zM430 117h1v1h-1zM47 118h1v1h-1zM91 118h1v1h-1zM107 118h1v1h-1zM142 118h1v1h-1zM336 118h1v1h-1zM371 118h1v1h-1zM377 118h1v1h-1zM387 118h1v1h-1zM431 118h1v1h-1zM46 119h1v1h-1zM90 119h1v1h-1zM106 119h1v1h-1zM141 119h1v1h-1zM337 119h1v1h-1zM372 119h1v1h-1zM376 119h1v1h-1zM388 119h1v1h-1zM432 119h1v1h-1zM46 120h1v1h-1zM90 120h2v1h-2zM105 120h1v1h-1zM140 120h1v1h-1zM338 120h1v1h-1zM373 120h1v1h-1zM375 120h1v1h-1zM388 120h1v1h-1zM432 120h1v1h-1zM45 121h1v1h-1zM89 121h1v1h-1zM92 121h1v1h-1zM104 121h1v1h-1zM138 121h2v1h-2zM339 121h2v1h-2zM374 121h1v1h-1zM389 121h1v1h-1zM433 121h1v1h-1zM44 122h1v1h-1zM88 122h1v1h-1zM93 122h1v1h-1zM104 122h1v1h-1zM137 122h1v1h-1zM341 122h1v1h-1zM374 122h1v1h-1zM390 122h1v1h-1zM432 122h1v1h-1zM434 122h1v1h-1zM44 123h1v1h-1zM87 123h1v1h-1zM94 123h1v1h-1zM103 123h1v1h-1zM136 123h1v1h-1zM342 123h1v1h-1zM375 123h1v1h-1zM391 123h1v1h-1zM430 123h2v1h-2zM434 123h1v1h-1zM43 124h1v1h-1zM87 124h1v1h-1zM95 124h2v1h-2zM102 124h1v1h-1zM135 124h1v1h-1zM343 124h1v1h-1zM376 124h1v1h-1zM391 124h1v1h-1zM428 124h2v1h-2zM435 124h1v1h-1zM43 125h1v1h-1zM86 125h1v1h-1zM97 125h1v1h-1zM101 125h1v1h-1zM134 125h1v1h-1zM344 125h1v1h-1zM377 125h1v1h-1zM392 125h1v1h-1zM427 125h1v1h-1zM435 125h1v1h-1zM42 126h1v1h-1zM85 126h1v1h-1zM98 126h1v1h-1zM100 126h1v1h-1zM133 126h1v1h-1zM345 126h1v1h-1zM378 126h1v1h-1zM393 126h1v1h-1zM425 126h2v1h-2zM436 126h1v1h-1zM42 127h1v1h-1zM84 127h1v1h-1zM99 127h1v1h-1zM132 127h1v1h-1zM346 127h1v1h-1zM379 127h1v1h-1zM393 127h2v1h-2zM424 127h1v1h-1zM436 127h1v1h-1zM41 128h1v1h-1zM84 128h1v1h-1zM99 128h1v1h-1zM131 128h1v1h-1zM347 128h1v1h-1zM379 128h1v1h-1zM391 128h2v1h-2zM394 128h1v1h-1zM422 128h2v1h-2zM437 128h1v1h-1zM40 129h1v1h-1zM83 129h1v1h-1zM98 129h1v1h-1zM130 129h1v1h-1zM348 129h1v1h-1zM380 129h1v1h-1zM390 129h1v1h-1zM395 129h1v1h-1zM420 129h2v1h-2zM438 129h1v1h-1zM40 130h2v1h-2zM82 130h1v1h-1zM97 130h1v1h-1zM129 130h1v1h-1zM349 130h1v1h-1zM381 130h1v1h-1zM388 130h2v1h-2zM396 130h1v1h-1zM419 130h1v1h-1zM438 130h1v1h-1zM39 131h1v1h-1zM42 131h2v1h-2zM81 131h1v1h-1zM96 131h1v1h-1zM128 131h1v1h-1zM350 131h1v1h-1zM382 131h1v1h-1zM387 131h1v1h-1zM397 131h1v1h-1zM417 131h2v1h-2zM439 131h1v1h-1zM39 132h1v1h-1zM44 132h2v1h-2zM81 132h1v1h-1zM96 132h1v1h-1zM127 132h1v1h-1zM351 132h1v1h-1zM382 132h1v1h-1zM385 132h2v1h-2zM397 132h1v1h-1zM416 132h1v1h-1zM439 132h1v1h-1zM38 133h1v1h-1zM46 133h2v1h-2zM80 133h2v1h-2zM95 133h1v1h-1zM126 133h1v1h-1zM352 133h1v1h-1zM383 133h2v1h-2zM398 133h1v1h-1zM414 133h2v1h-2zM440 133h1v1h-1zM38 134h1v1h-1zM48 134h1v1h-1zM79 134h1v1h-1zM82 134h2v1h-2zM94 134h1v1h-1zM125 134h1v1h-1zM353 134h1v1h-1zM384 134h1v1h-1zM399 134h1v1h-1zM412 134h2v1h-2zM440 134h1v1h-1zM37 135h1v1h-1zM49 135h2v1h-2zM79 135h1v1h-1zM84 135h1v1h-1zM93 135h1v1h-1zM124 135h1v1h-1zM354 135h1v1h-1zM385 135h1v1h-1zM399 135h1v1h-1zM411 135h1v1h-1zM441 135h1v1h-1zM37 136h1v1h-1zM51 136h2v1h-2zM78 136h1v1h-1zM85 136h2v1h-2zM93 136h1v1h-1zM123 136h1v1h-1zM355 136h1v1h-1zM385 136h1v1h-1zM400 136h1v1h-1zM409 136h2v1h-2zM441 136h1v1h-1zM36 137h1v1h-1zM53 137h2v1h-2zM78 137h1v1h-1zM87 137h1v1h-1zM92 137h1v1h-1zM122 137h1v1h-1zM356 137h1v1h-1zM386 137h1v1h-1zM400 137h1v1h-1zM408 137h1v1h-1zM442 137h1v1h-1zM36 138h1v1h-1zM55 138h1v1h-1zM77 138h1v1h-1zM88 138h2v1h-2zM91 138h1v1h-1zM121 138h1v1h-1zM357 138h1v1h-1zM387 138h1v1h-1zM401 138h1v1h-1zM406 138h2v1h-2zM442 138h1v1h-1zM35 139h1v1h-1zM56 139h2v1h-2zM76 139h1v1h-1zM90 139h2v1h-2zM121 139h1v1h-1zM357 139h1v1h-1zM387 139h1v1h-1zM402 139h1v1h-1zM404 139h2v1h-2zM443 139h1v1h-1zM35 140h1v1h-1zM58 140h2v1h-2zM76 140h1v1h-1zM90 140h1v1h-1zM120 140h1v1h-1zM358 140h1v1h-1zM388 140h1v1h-1zM402 140h2v1h-2zM443 140h1v1h-1zM34 141h1v1h-1zM60 141h2v1h-2zM75 141h1v1h-1zM89 141h1v1h-1zM119 141h1v1h-1zM359 141h1v1h-1zM389 141h1v1h-1zM400 141h2v1h-2zM403 141h1v1h-1zM444 141h1v1h-1zM34 142h1v1h-1zM62 142h2v1h-2zM74 142h1v1h-1zM89 142h1v1h-1zM118 142h1v1h-1zM360 142h1v1h-1zM389 142h1v1h-1zM399 142h1v1h-1zM404 142h1v1h-1zM444 142h1v1h-1zM33 143h1v1h-1zM64 143h1v1h-1zM74 143h1v1h-1zM88 143h1v1h-1zM117 143h1v1h-1zM361 143h1v1h-1zM390 143h1v1h-1zM397 143h2v1h-2zM404 143h1v1h-1zM445 143h1v1h-1zM33 144h1v1h-1zM65 144h2v1h-2zM73 144h1v1h-1zM87 144h1v1h-1zM117 144h1v1h-1zM361 144h1v1h-1zM391 144h1v1h-1zM396 144h1v1h-1zM405 144h1v1h-1zM445 144h1v1h-1zM32 145h1v1h-1zM67 145h2v1h-2zM73 145h1v1h-1zM87 145h1v1h-1zM116 145h1v1h-1zM362 145h1v1h-1zM391 145h1v1h-1zM394 145h2v1h-2zM405 145h1v1h-1zM446 145h1v1h-1zM32 146h1v1h-1zM69 146h2v1h-2zM72 146h1v1h-1zM86 146h1v1h-1zM115 146h1v1h-1zM363 146h1v1h-1zM392 146h2v1h-2zM406 146h1v1h-1zM446 146h1v1h-1zM31 147h1v1h-1zM71 147h2v1h-2zM85 147h1v1h-1zM114 147h1v1h-1zM364 147h1v1h-1zM393 147h1v1h-1zM406 147h1v1h-1zM447 147h1v1h-1zM31 148h1v1h-1zM71 148h2v1h-2zM85 148h1v1h-1zM114 148h1v1h-1zM364 148h1v1h-1zM393 148h1v1h-1zM407 148h1v1h-1zM447 148h1v1h-1zM31 149h1v1h-1zM71 149h1v1h-1zM73 149h2v1h-2zM84 149h1v1h-1zM113 149h1v1h-1zM365 149h1v1h-1zM394 149h1v1h-1zM407 149h1v1h-1zM447 149h1v1h-1zM30 150h1v1h-1zM70 150h1v1h-1zM75 150h2v1h-2zM84 150h1v1h-1zM112 150h1v1h-1zM366 150h1v1h-1zM394 150h1v1h-1zM408 150h1v1h-1zM448 150h1v1h-1zM30 151h1v1h-1zM69 151h1v1h-1zM77 151h2v1h-2zM83 151h1v1h-1zM111 151h1v1h-1zM367 151h1v1h-1zM395 151h1v1h-1zM409 151h1v1h-1zM448 151h1v1h-1zM29 152h1v1h-1zM69 152h1v1h-1zM79 152h2v1h-2zM83 152h1v1h-1zM111 152h1v1h-1zM367 152h1v1h-1zM395 152h1v1h-1zM409 152h1v1h-1zM449 152h1v1h-1zM29 153h1v1h-1zM68 153h1v1h-1zM81 153h2v1h-2zM110 153h1v1h-1zM368 153h1v1h-1zM396 153h1v1h-1zM410 153h1v1h-1zM449 153h1v1h-1zM29 154h1v1h-1zM68 154h1v1h-1zM81 154h1v1h-1zM109 154h1v1h-1zM369 154h1v1h-1zM397 154h1v1h-1zM410 154h1v1h-1zM449 154h1v1h-1zM28 155h1v1h-1zM67 155h1v1h-1zM81 155h1v1h-1zM109 155h1v1h-1zM369 155h1v1h-1zM395 155h3v1h-3zM409 155h3v1h-3zM450 155h1v1h-1zM28 156h1v1h-1zM67 156h1v1h-1zM80 156h1v1h-1zM108 156h1v1h-1zM370 156h1v1h-1zM393 156h2v1h-2zM398 156h1v1h-1zM407 156h2v1h-2zM411 156h1v1h-1zM450 156h1v1h-1zM27 157h1v1h-1zM66 157h1v1h-1zM80 157h1v1h-1zM107 157h1v1h-1zM371 157h1v1h-1zM391 157h2v1h-2zM398 157h1v1h-1zM405 157h2v1h-2zM412 157h1v1h-1zM451 157h1v1h-1zM27 158h1v1h-1zM66 158h1v1h-1zM79 158h1v1h-1zM107 158h1v1h-1zM371 158h1v1h-1zM389 158h2v1h-2zM399 158h1v1h-1zM403 158h2v1h-2zM412 158h1v1h-1zM451 158h1v1h-1zM27 159h1v1h-1zM66 159h1v1h-1zM79 159h1v1h-1zM106 159h1v1h-1zM372 159h1v1h-1zM387 159h2v1h-2zM399 159h1v1h-1zM401 159h2v1h-2zM412 159h1v1h-1zM451 159h1v1h-1zM26 160h1v1h-1zM65 160h1v1h-1zM78 160h1v1h-1zM106 160h1v1h-1zM372 160h1v1h-1zM385 160h2v1h-2zM400 160h1v1h-1zM413 160h1v1h-1zM452 160h1v1h-1zM26 161h1v1h-1zM65 161h1v1h-1zM78 161h1v1h-1zM105 161h1v1h-1zM373 161h1v1h-1zM383 161h2v1h-2zM400 161h1v1h-1zM413 161h1v1h-1zM452 161h1v1h-1zM25 162h1v1h-1zM64 162h1v1h-1zM77 162h1v1h-1zM104 162h1v1h-1zM374 162h1v1h-1zM381 162h2v1h-2zM401 162h1v1h-1zM414 162h1v1h-1zM453 162h1v1h-1zM25 163h1v1h-1zM64 163h3v1h-3zM77 163h1v1h-1zM104 163h1v1h-1zM374 163h1v1h-1zM379 163h2v1h-2zM401 163h1v1h-1zM414 163h1v1h-1zM453 163h1v1h-1zM25 164h1v1h-1zM63 164h1v1h-1zM67 164h2v1h-2zM76 164h1v1h-1zM103 164h1v1h-1zM375 164h1v1h-1zM377 164h2v1h-2zM402 164h1v1h-1zM415 164h1v1h-1zM453 164h1v1h-1zM24 165h1v1h-1zM63 165h1v1h-1zM69 165h2v1h-2zM76 165h1v1h-1zM103 165h1v1h-1zM375 165h2v1h-2zM402 165h1v1h-1zM415 165h1v1h-1zM454 165h1v1h-1zM24 166h1v1h-1zM63 166h1v1h-1zM71 166h2v1h-2zM76 166h1v1h-1zM102 166h1v1h-1zM376 166h1v1h-1zM402 166h1v1h-1zM415 166h1v1h-1zM454 166h1v1h-1zM24 167h1v1h-1zM62 167h1v1h-1zM73 167h5v1h-5zM102 167h1v1h-1zM376 167h1v1h-1zM403 167h1v1h-1zM416 167h1v1h-1zM454 167h1v1h-1zM23 168h1v1h-1zM62 168h1v1h-1zM75 168h1v1h-1zM78 168h2v1h-2zM101 168h1v1h-1zM377 168h1v1h-1zM403 168h1v1h-1zM416 168h1v1h-1zM455 168h1v1h-1zM23 169h1v1h-1zM61 169h1v1h-1zM74 169h1v1h-1zM80 169h2v1h-2zM101 169h1v1h-1zM377 169h1v1h-1zM404 169h1v1h-1zM417 169h1v1h-1zM455 169h1v1h-1zM23 170h1v1h-1zM61 170h1v1h-1zM74 170h1v1h-1zM82 170h3v1h-3zM100 170h1v1h-1zM378 170h1v1h-1zM404 170h1v1h-1zM415 170h3v1h-3zM455 170h1v1h-1zM22 171h1v1h-1zM61 171h1v1h-1zM73 171h1v1h-1zM85 171h2v1h-2zM100 171h1v1h-1zM378 171h1v1h-1zM405 171h1v1h-1zM413 171h2v1h-2zM417 171h1v1h-1zM456 171h1v1h-1zM22 172h1v1h-1zM60 172h1v1h-1zM73 172h1v1h-1zM87 172h2v1h-2zM99 172h1v1h-1zM379 172h1v1h-1zM405 172h1v1h-1zM411 172h2v1h-2zM418 172h1v1h-1zM456 172h1v1h-1zM22 173h1v1h-1zM60 173h1v1h-1zM73 173h1v1h-1zM89 173h3v1h-3zM99 173h1v1h-1zM379 173h1v1h-1zM405 173h1v1h-1zM409 173h2v1h-2zM418 173h1v1h-1zM456 173h1v1h-1zM22 174h1v1h-1zM59 174h1v1h-1zM72 174h1v1h-1zM92 174h2v1h-2zM98 174h1v1h-1zM380 174h1v1h-1zM406 174h3v1h-3zM419 174h1v1h-1zM456 174h1v1h-1zM21 175h1v1h-1zM59 175h1v1h-1zM72 175h1v1h-1zM94 175h2v1h-2zM98 175h1v1h-1zM355 175h2v1h-2zM380 175h1v1h-1zM406 175h1v1h-1zM419 175h1v1h-1zM457 175h1v1h-1zM21 176h1v1h-1zM59 176h1v1h-1zM71 176h1v1h-1zM96 176h2v1h-2zM353 176h2v1h-2zM381 176h1v1h-1zM407 176h1v1h-1zM419 176h1v1h-1zM457 176h1v1h-1zM21 177h1v1h-1zM58 177h1v1h-1zM71 177h1v1h-1zM97 177h1v1h-1zM351 177h2v1h-2zM381 177h1v1h-1zM407 177h1v1h-1zM420 177h1v1h-1zM457 177h1v1h-1zM20 178h1v1h-1zM58 178h3v1h-3zM71 178h1v1h-1zM97 178h1v1h-1zM349 178h2v1h-2zM381 178h1v1h-1zM407 178h1v1h-1zM420 178h1v1h-1zM458 178h1v1h-1zM20 179h1v1h-1zM58 179h1v1h-1zM61 179h2v1h-2zM70 179h1v1h-1zM96 179h1v1h-1zM348 179h1v1h-1zM382 179h1v1h-1zM408 179h1v1h-1zM420 179h1v1h-1zM458 179h1v1h-1zM20 180h1v1h-1zM57 180h1v1h-1zM63 180h3v1h-3zM70 180h1v1h-1zM96 180h1v1h-1zM382 180h1v1h-1zM408 180h1v1h-1zM421 180h1v1h-1zM458 180h1v1h-1zM20 181h1v1h-1zM57 181h1v1h-1zM66 181h2v1h-2zM70 181h1v1h-1zM95 181h1v1h-1zM383 181h1v1h-1zM408 181h1v1h-1zM421 181h1v1h-1zM458 181h1v1h-1zM19 182h1v1h-1zM57 182h1v1h-1zM68 182h2v1h-2zM95 182h1v1h-1zM383 182h1v1h-1zM409 182h1v1h-1zM421 182h1v1h-1zM459 182h1v1h-1zM19 183h1v1h-1zM56 183h1v1h-1zM69 183h1v1h-1zM94 183h1v1h-1zM384 183h1v1h-1zM409 183h1v1h-1zM422 183h1v1h-1zM459 183h1v1h-1zM19 184h1v1h-1zM56 184h1v1h-1zM69 184h1v1h-1zM94 184h1v1h-1zM384 184h1v1h-1zM409 184h1v1h-1zM422 184h1v1h-1zM459 184h1v1h-1zM19 185h1v1h-1zM56 185h1v1h-1zM68 185h1v1h-1zM94 185h1v1h-1zM384 185h1v1h-1zM410 185h1v1h-1zM422 185h1v1h-1zM459 185h1v1h-1zM18 186h1v1h-1zM56 186h1v1h-1zM68 186h1v1h-1zM93 186h1v1h-1zM385 186h1v1h-1zM410 186h1v1h-1zM421 186h2v1h-2zM460 186h1v1h-1zM18 187h1v1h-1zM55 187h1v1h-1zM68 187h1v1h-1zM93 187h1v1h-1zM385 187h1v1h-1zM410 187h1v1h-1zM417 187h4v1h-4zM423 187h1v1h-1zM460 187h1v1h-1zM18 188h1v1h-1zM55 188h1v1h-1zM67 188h1v1h-1zM93 188h1v1h-1zM385 188h1v1h-1zM411 188h1v1h-1zM414 188h3v1h-3zM423 188h1v1h-1zM460 188h1v1h-1zM18 189h1v1h-1zM55 189h1v1h-1zM67 189h1v1h-1zM92 189h1v1h-1zM386 189h1v1h-1zM411 189h3v1h-3zM423 189h1v1h-1zM460 189h1v1h-1zM17 190h1v1h-1zM54 190h1v1h-1zM67 190h1v1h-1zM92 190h1v1h-1zM386 190h1v1h-1zM411 190h1v1h-1zM424 190h1v1h-1zM461 190h1v1h-1zM17 191h1v1h-1zM54 191h1v1h-1zM67 191h1v1h-1zM92 191h1v1h-1zM386 191h1v1h-1zM411 191h1v1h-1zM424 191h1v1h-1zM461 191h1v1h-1zM17 192h1v1h-1zM54 192h1v1h-1zM66 192h1v1h-1zM91 192h1v1h-1zM387 192h1v1h-1zM412 192h1v1h-1zM424 192h1v1h-1zM461 192h1v1h-1zM17 193h1v1h-1zM54 193h1v1h-1zM66 193h1v1h-1zM91 193h1v1h-1zM387 193h1v1h-1zM412 193h1v1h-1zM424 193h1v1h-1zM461 193h1v1h-1zM17 194h1v1h-1zM53 194h3v1h-3zM66 194h1v1h-1zM91 194h1v1h-1zM387 194h1v1h-1zM412 194h1v1h-1zM425 194h1v1h-1zM461 194h1v1h-1zM16 195h1v1h-1zM53 195h1v1h-1zM56 195h3v1h-3zM65 195h1v1h-1zM90 195h1v1h-1zM388 195h1v1h-1zM413 195h1v1h-1zM425 195h1v1h-1zM462 195h1v1h-1zM16 196h1v1h-1zM53 196h1v1h-1zM59 196h4v1h-4zM65 196h1v1h-1zM90 196h1v1h-1zM388 196h1v1h-1zM413 196h1v1h-1zM425 196h1v1h-1zM462 196h1v1h-1zM16 197h1v1h-1zM53 197h1v1h-1zM63 197h3v1h-3zM90 197h1v1h-1zM388 197h1v1h-1zM413 197h1v1h-1zM425 197h1v1h-1zM462 197h1v1h-1zM16 198h1v1h-1zM52 198h1v1h-1zM65 198h1v1h-1zM90 198h1v1h-1zM388 198h1v1h-1zM413 198h1v1h-1zM426 198h1v1h-1zM462 198h1v1h-1zM16 199h1v1h-1zM52 199h1v1h-1zM65 199h1v1h-1zM89 199h1v1h-1zM389 199h1v1h-1zM413 199h1v1h-1zM426 199h1v1h-1zM462 199h1v1h-1zM15 200h1v1h-1zM52 200h1v1h-1zM64 200h1v1h-1zM89 200h1v1h-1zM389 200h1v1h-1zM414 200h1v1h-1zM426 200h1v1h-1zM463 200h1v1h-1zM15 201h1v1h-1zM52 201h1v1h-1zM64 201h1v1h-1zM89 201h1v1h-1zM389 201h1v1h-1zM414 201h1v1h-1zM426 201h1v1h-1zM463 201h1v1h-1zM15 202h1v1h-1zM52 202h1v1h-1zM64 202h1v1h-1zM88 202h1v1h-1zM390 202h1v1h-1zM414 202h1v1h-1zM424 202h3v1h-3zM463 202h1v1h-1zM15 203h1v1h-1zM51 203h1v1h-1zM64 203h1v1h-1zM88 203h1v1h-1zM390 203h1v1h-1zM414 203h1v1h-1zM418 203h6v1h-6zM427 203h1v1h-1zM463 203h1v1h-1zM15 204h1v1h-1zM51 204h1v1h-1zM63 204h1v1h-1zM88 204h1v1h-1zM390 204h1v1h-1zM415 204h3v1h-3zM427 204h1v1h-1zM463 204h1v1h-1zM15 205h1v1h-1zM51 205h1v1h-1zM63 205h1v1h-1zM88 205h1v1h-1zM390 205h1v1h-1zM415 205h1v1h-1zM427 205h1v1h-1zM463 205h1v1h-1zM14 206h1v1h-1zM51 206h1v1h-1zM63 206h1v1h-1zM88 206h1v1h-1zM390 206h1v1h-1zM415 206h1v1h-1zM427 206h1v1h-1zM464 206h1v1h-1zM14 207h1v1h-1zM51 207h1v1h-1zM63 207h1v1h-1zM87 207h1v1h-1zM391 207h1v1h-1zM415 207h1v1h-1zM427 207h1v1h-1zM464 207h1v1h-1zM14 208h1v1h-1zM51 208h1v1h-1zM63 208h1v1h-1zM87 208h1v1h-1zM391 208h1v1h-1zM415 208h1v1h-1zM427 208h1v1h-1zM464 208h1v1h-1zM14 209h1v1h-1zM50 209h1v1h-1zM63 209h1v1h-1zM87 209h1v1h-1zM391 209h1v1h-1zM415 209h1v1h-1zM428 209h1v1h-1zM464 209h1v1h-1zM14 210h1v1h-1zM50 210h4v1h-4zM62 210h1v1h-1zM87 210h1v1h-1zM391 210h1v1h-1zM416 210h1v1h-1zM428 210h1v1h-1zM464 210h1v1h-1zM14 211h1v1h-1zM50 211h1v1h-1zM54 211h5v1h-5zM62 211h1v1h-1zM87 211h1v1h-1zM391 211h1v1h-1zM416 211h1v1h-1zM428 211h1v1h-1zM464 211h1v1h-1zM14 212h1v1h-1zM50 212h1v1h-1zM59 212h4v1h-4zM86 212h1v1h-1zM392 212h1v1h-1zM416 212h1v1h-1zM428 212h1v1h-1zM464 212h1v1h-1zM13 213h1v1h-1zM50 213h1v1h-1zM62 213h1v1h-1zM86 213h1v1h-1zM392 213h1v1h-1zM416 213h1v1h-1zM428 213h1v1h-1zM465 213h1v1h-1zM13 214h1v1h-1zM50 214h1v1h-1zM62 214h1v1h-1zM86 214h1v1h-1zM392 214h1v1h-1zM416 214h1v1h-1zM428 214h1v1h-1zM465 214h1v1h-1zM13 215h1v1h-1zM50 215h1v1h-1zM62 215h1v1h-1zM86 215h1v1h-1zM392 215h1v1h-1zM416 215h1v1h-1zM428 215h1v1h-1zM465 215h1v1h-1zM13 216h1v1h-1zM49 216h1v1h-1zM61 216h1v1h-1zM86 216h1v1h-1zM392 216h1v1h-1zM417 216h1v1h-1zM429 216h1v1h-1zM465 216h1v1h-1zM13 217h1v1h-1zM49 217h1v1h-1zM61 217h1v1h-1zM86 217h1v1h-1zM392 217h1v1h-1zM417 217h1v1h-1zM429 217h1v1h-1zM465 217h1v1h-1zM13 218h1v1h-1zM49 218h1v1h-1zM61 218h1v1h-1zM85 218h1v1h-1zM393 218h1v1h-1zM417 218h1v1h-1zM429 218h1v1h-1zM465 218h1v1h-1zM13 219h1v1h-1zM49 219h1v1h-1zM61 219h1v1h-1zM85 219h1v1h-1zM393 219h1v1h-1zM417 219h1v1h-1zM423 219h7v1h-7zM465 219h1v1h-1zM13 220h1v1h-1zM49 220h1v1h-1zM61 220h1v1h-1zM85 220h1v1h-1zM393 220h1v1h-1zM417 220h6v1h-6zM429 220h1v1h-1zM465 220h1v1h-1zM13 221h1v1h-1zM49 221h1v1h-1zM61 221h1v1h-1zM85 221h1v1h-1zM393 221h1v1h-1zM417 221h1v1h-1zM429 221h1v1h-1zM465 221h1v1h-1zM13 222h1v1h-1zM49 222h1v1h-1zM61 222h1v1h-1zM85 222h1v1h-1zM393 222h1v1h-1zM417 222h1v1h-1zM429 222h1v1h-1zM465 222h1v1h-1zM13 223h1v1h-1zM49 223h1v1h-1zM61 223h1v1h-1zM85 223h1v1h-1zM393 223h1v1h-1zM417 223h1v1h-1zM429 223h1v1h-1zM465 223h1v1h-1zM12 224h1v1h-1zM49 224h1v1h-1zM61 224h1v1h-1zM85 224h1v1h-1zM393 224h1v1h-1zM417 224h1v1h-1zM429 224h1v1h-1zM466 224h1v1h-1zM12 225h1v1h-1zM49 225h1v1h-1zM61 225h1v1h-1zM85 225h1v1h-1zM393 225h1v1h-1zM417 225h1v1h-1zM429 225h1v1h-1zM466 225h1v1h-1zM12 226h1v1h-1zM48 226h1v1h-1zM60 226h1v1h-1zM85 226h1v1h-1zM393 226h1v1h-1zM418 226h1v1h-1zM430 226h1v1h-1zM466 226h1v1h-1zM12 227h1v1h-1zM48 227h7v1h-7zM60 227h1v1h-1zM84 227h1v1h-1zM394 227h1v1h-1zM418 227h1v1h-1zM430 227h1v1h-1zM466 227h1v1h-1zM12 228h1v1h-1zM48 228h1v1h-1zM55 228h6v1h-6zM84 228h1v1h-1zM394 228h1v1h-1zM418 228h1v1h-1zM430 228h1v1h-1zM466 228h1v1h-1zM12 229h1v1h-1zM48 229h1v1h-1zM60 229h1v1h-1zM84 229h1v1h-1zM394 229h1v1h-1zM418 229h1v1h-1zM430 229h1v1h-1zM466 229h1v1h-1zM12 230h1v1h-1zM48 230h1v1h-1zM60 230h1v1h-1zM84 230h1v1h-1zM394 230h1v1h-1zM418 230h1v1h-1zM430 230h1v1h-1zM466 230h1v1h-1zM12 231h1v1h-1zM48 231h1v1h-1zM60 231h1v1h-1zM84 231h1v1h-1zM394 231h1v1h-1zM418 231h1v1h-1zM430 231h1v1h-1zM466 231h1v1h-1zM12 232h1v1h-1zM48 232h1v1h-1zM60 232h1v1h-1zM84 232h1v1h-1zM394 232h1v1h-1zM418 232h1v1h-1zM430 232h1v1h-1zM466 232h1v1h-1zM12 233h1v1h-1zM48 233h1v1h-1zM60 233h1v1h-1zM84 233h1v1h-1zM394 233h1v1h-1zM418 233h1v1h-1zM430 233h1v1h-1zM466 233h1v1h-1zM12 234h1v1h-1zM48 234h1v1h-1zM60 234h1v1h-1zM84 234h1v1h-1zM394 234h1v1h-1zM418 234h1v1h-1zM430 234h1v1h-1zM466 234h1v1h-1zM12 235h1v1h-1zM48 235h1v1h-1zM60 235h1v1h-1zM84 235h1v1h-1zM394 235h1v1h-1zM418 235h1v1h-1zM424 235h43v1h-43zM12 236h1v1h-1zM48 236h1v1h-1zM60 236h1v1h-1zM84 236h1v1h-1zM394 236h1v1h-1zM418 236h6v1h-6zM430 236h1v1h-1zM466 236h1v1h-1zM12 237h1v1h-1zM48 237h1v1h-1zM60 237h1v1h-1zM84 237h1v1h-1zM394 237h1v1h-1zM418 237h1v1h-1zM430 237h1v1h-1zM466 237h1v1h-1zM12 238h1v1h-1zM48 238h1v1h-1zM60 238h1v1h-1zM84 238h1v1h-1zM394 238h1v1h-1zM418 238h1v1h-1zM430 238h1v1h-1zM466 238h1v1h-1zM12 239h1v1h-1zM48 239h1v1h-1zM60 239h25v1h-25zM394 239h25v1h-25zM430 239h1v1h-1zM466 239h1v1h-1zM12 240h1v1h-1zM48 240h1v1h-1zM60 240h1v1h-1zM84 240h1v1h-1zM394 240h1v1h-1zM418 240h1v1h-1zM430 240h1v1h-1zM466 240h1v1h-1zM12 241h1v1h-1zM48 241h1v1h-1zM60 241h1v1h-1zM84 241h1v1h-1zM394 241h1v1h-1zM418 241h1v1h-1zM430 241h1v1h-1zM466 241h1v1h-1zM12 242h1v1h-1zM48 242h1v1h-1zM54 242h7v1h-7zM84 242h1v1h-1zM394 242h1v1h-1zM418 242h1v1h-1zM430 242h1v1h-1zM466 242h1v1h-1zM12 243h42v1h-42zM60 243h1v1h-1zM84 243h1v1h-1zM394 243h1v1h-1zM418 243h1v1h-1zM430 243h1v1h-1zM466 243h1v1h-1zM12 244h1v1h-1zM48 244h1v1h-1zM60 244h1v1h-1zM84 244h1v1h-1zM394 244h1v1h-1zM418 244h1v1h-1zM430 244h1v1h-1zM466 244h1v1h-1zM12 245h1v1h-1zM48 245h1v1h-1zM60 245h1v1h-1zM84 245h1v1h-1zM394 245h1v1h-1zM418 245h1v1h-1zM430 245h1v1h-1zM466 245h1v1h-1zM12 246h1v1h-1zM48 246h1v1h-1zM60 246h1v1h-1zM84 246h1v1h-1zM394 246h1v1h-1zM418 246h1v1h-1zM430 246h1v1h-1zM466 246h1v1h-1zM12 247h1v1h-1zM48 247h1v1h-1zM60 247h1v1h-1zM84 247h1v1h-1zM394 247h1v1h-1zM418 247h1v1h-1zM430 247h1v1h-1zM466 247h1v1h-1zM12 248h1v1h-1zM48 248h1v1h-1zM60 248h1v1h-1zM84 248h1v1h-1zM394 248h1v1h-1zM418 248h1v1h-1zM430 248h1v1h-1zM466 248h1v1h-1zM12 249h1v1h-1zM48 249h1v1h-1zM60 249h1v1h-1zM84 249h1v1h-1zM394 249h1v1h-1zM418 249h1v1h-1zM430 249h1v1h-1zM466 249h1v1h-1zM12 250h1v1h-1zM48 250h1v1h-1zM60 250h1v1h-1zM84 250h1v1h-1zM394 250h1v1h-1zM418 250h6v1h-6zM430 250h1v1h-1zM466 250h1v1h-1zM12 251h1v1h-1zM48 251h1v1h-1zM60 251h1v1h-1zM84 251h1v1h-1zM394 251h1v1h-1zM418 251h1v1h-1zM424 251h7v1h-7zM466 251h1v1h-1zM12 252h1v1h-1zM48 252h1v1h-1zM60 252h1v1h-1zM85 252h1v1h-1zM393 252h1v1h-1zM418 252h1v1h-1zM430 252h1v1h-1zM466 252h1v1h-1zM12 253h1v1h-1zM49 253h1v1h-1zM61 253h1v1h-1zM85 253h1v1h-1zM393 253h1v1h-1zM417 253h1v1h-1zM429 253h1v1h-1zM466 253h1v1h-1zM12 254h1v1h-1zM49 254h1v1h-1zM61 254h1v1h-1zM85 254h1v1h-1zM393 254h1v1h-1zM417 254h1v1h-1zM429 254h1v1h-1zM466 254h1v1h-1zM13 255h1v1h-1zM49 255h1v1h-1zM61 255h1v1h-1zM85 255h1v1h-1zM393 255h1v1h-1zM417 255h1v1h-1zM429 255h1v1h-1zM465 255h1v1h-1zM13 256h1v1h-1zM49 256h1v1h-1zM61 256h1v1h-1zM85 256h1v1h-1zM393 256h1v1h-1zM417 256h1v1h-1zM429 256h1v1h-1zM465 256h1v1h-1zM13 257h1v1h-1zM49 257h1v1h-1zM61 257h1v1h-1zM85 257h1v1h-1zM393 257h1v1h-1zM417 257h1v1h-1zM429 257h1v1h-1zM465 257h1v1h-1zM13 258h1v1h-1zM49 258h1v1h-1zM55 258h7v1h-7zM85 258h1v1h-1zM393 258h1v1h-1zM417 258h1v1h-1zM429 258h1v1h-1zM465 258h1v1h-1zM13 259h1v1h-1zM49 259h6v1h-6zM61 259h1v1h-1zM85 259h1v1h-1zM393 259h1v1h-1zM417 259h1v1h-1zM429 259h1v1h-1zM465 259h1v1h-1zM13 260h1v1h-1zM49 260h1v1h-1zM61 260h1v1h-1zM85 260h1v1h-1zM393 260h1v1h-1zM417 260h1v1h-1zM429 260h1v1h-1zM465 260h1v1h-1zM13 261h1v1h-1zM49 261h1v1h-1zM61 261h1v1h-1zM86 261h1v1h-1zM392 261h1v1h-1zM417 261h1v1h-1zM429 261h1v1h-1zM465 261h1v1h-1zM13 262h1v1h-1zM49 262h1v1h-1zM61 262h1v1h-1zM86 262h1v1h-1zM392 262h1v1h-1zM417 262h1v1h-1zM429 262h1v1h-1zM465 262h1v1h-1zM13 263h1v1h-1zM50 263h1v1h-1zM62 263h1v1h-1zM86 263h1v1h-1zM392 263h1v1h-1zM416 263h1v1h-1zM428 263h1v1h-1zM465 263h1v1h-1zM13 264h1v1h-1zM50 264h1v1h-1zM62 264h1v1h-1zM86 264h1v1h-1zM392 264h1v1h-1zM416 264h1v1h-1zM428 264h1v1h-1zM465 264h1v1h-1zM13 265h1v1h-1zM50 265h1v1h-1zM62 265h1v1h-1zM86 265h1v1h-1zM392 265h1v1h-1zM416 265h1v1h-1zM428 265h1v1h-1zM465 265h1v1h-1zM14 266h1v1h-1zM50 266h1v1h-1zM62 266h1v1h-1zM86 266h1v1h-1zM392 266h1v1h-1zM416 266h4v1h-4zM428 266h1v1h-1zM464 266h1v1h-1zM14 267h1v1h-1zM50 267h1v1h-1zM62 267h1v1h-1zM87 267h1v1h-1zM391 267h1v1h-1zM416 267h1v1h-1zM420 267h5v1h-5zM428 267h1v1h-1zM464 267h1v1h-1zM14 268h1v1h-1zM50 268h1v1h-1zM62 268h1v1h-1zM87 268h1v1h-1zM391 268h1v1h-1zM416 268h1v1h-1zM425 268h4v1h-4zM464 268h1v1h-1zM14 269h1v1h-1zM50 269h1v1h-1zM63 269h1v1h-1zM87 269h1v1h-1zM391 269h1v1h-1zM415 269h1v1h-1zM428 269h1v1h-1zM464 269h1v1h-1zM14 270h1v1h-1zM51 270h1v1h-1zM63 270h1v1h-1zM87 270h1v1h-1zM391 270h1v1h-1zM415 270h1v1h-1zM427 270h1v1h-1zM464 270h1v1h-1zM14 271h1v1h-1zM51 271h1v1h-1zM63 271h1v1h-1zM87 271h1v1h-1zM391 271h1v1h-1zM415 271h1v1h-1zM427 271h1v1h-1zM464 271h1v1h-1zM14 272h1v1h-1zM51 272h1v1h-1zM63 272h1v1h-1zM88 272h1v1h-1zM390 272h1v1h-1zM415 272h1v1h-1zM427 272h1v1h-1zM464 272h1v1h-1zM15 273h1v1h-1zM51 273h1v1h-1zM63 273h1v1h-1zM88 273h1v1h-1zM390 273h1v1h-1zM415 273h1v1h-1zM427 273h1v1h-1zM463 273h1v1h-1zM15 274h1v1h-1zM51 274h1v1h-1zM61 274h3v1h-3zM88 274h1v1h-1zM390 274h1v1h-1zM415 274h1v1h-1zM427 274h1v1h-1zM463 274h1v1h-1zM15 275h1v1h-1zM51 275h1v1h-1zM55 275h6v1h-6zM64 275h1v1h-1zM88 275h1v1h-1zM390 275h1v1h-1zM414 275h1v1h-1zM427 275h1v1h-1zM463 275h1v1h-1zM15 276h1v1h-1zM52 276h3v1h-3zM64 276h1v1h-1zM88 276h1v1h-1zM390 276h1v1h-1zM414 276h1v1h-1zM426 276h1v1h-1zM463 276h1v1h-1zM15 277h1v1h-1zM52 277h1v1h-1zM64 277h1v1h-1zM89 277h1v1h-1zM389 277h1v1h-1zM414 277h1v1h-1zM426 277h1v1h-1zM463 277h1v1h-1zM15 278h1v1h-1zM52 278h1v1h-1zM64 278h1v1h-1zM89 278h1v1h-1zM389 278h1v1h-1zM414 278h1v1h-1zM426 278h1v1h-1zM463 278h1v1h-1zM16 279h1v1h-1zM52 279h1v1h-1zM65 279h1v1h-1zM89 279h1v1h-1zM389 279h1v1h-1zM413 279h1v1h-1zM426 279h1v1h-1zM462 279h1v1h-1zM16 280h1v1h-1zM52 280h1v1h-1zM65 280h1v1h-1zM90 280h1v1h-1zM388 280h1v1h-1zM413 280h1v1h-1zM426 280h1v1h-1zM462 280h1v1h-1zM16 281h1v1h-1zM53 281h1v1h-1zM65 281h1v1h-1zM90 281h1v1h-1zM388 281h1v1h-1zM413 281h3v1h-3zM425 281h1v1h-1zM462 281h1v1h-1zM16 282h1v1h-1zM53 282h1v1h-1zM65 282h1v1h-1zM90 282h1v1h-1zM388 282h1v1h-1zM413 282h1v1h-1zM416 282h3v1h-3zM425 282h1v1h-1zM462 282h1v1h-1zM16 283h1v1h-1zM53 283h1v1h-1zM65 283h1v1h-1zM90 283h1v1h-1zM388 283h1v1h-1zM413 283h1v1h-1zM419 283h4v1h-4zM425 283h1v1h-1zM462 283h1v1h-1zM17 284h1v1h-1zM53 284h1v1h-1zM66 284h1v1h-1zM91 284h1v1h-1zM387 284h1v1h-1zM412 284h1v1h-1zM423 284h3v1h-3zM461 284h1v1h-1zM17 285h1v1h-1zM54 285h1v1h-1zM66 285h1v1h-1zM91 285h1v1h-1zM387 285h1v1h-1zM412 285h1v1h-1zM424 285h1v1h-1zM461 285h1v1h-1zM17 286h1v1h-1zM54 286h1v1h-1zM66 286h1v1h-1zM91 286h1v1h-1zM387 286h1v1h-1zM412 286h1v1h-1zM424 286h1v1h-1zM461 286h1v1h-1zM17 287h1v1h-1zM54 287h1v1h-1zM67 287h1v1h-1zM92 287h1v1h-1zM386 287h1v1h-1zM411 287h1v1h-1zM424 287h1v1h-1zM461 287h1v1h-1zM17 288h1v1h-1zM54 288h1v1h-1zM67 288h1v1h-1zM92 288h1v1h-1zM386 288h1v1h-1zM411 288h1v1h-1zM424 288h1v1h-1zM461 288h1v1h-1zM18 289h1v1h-1zM55 289h1v1h-1zM65 289h3v1h-3zM92 289h1v1h-1zM386 289h1v1h-1zM411 289h1v1h-1zM423 289h1v1h-1zM460 289h1v1h-1zM18 290h1v1h-1zM55 290h1v1h-1zM61 290h4v1h-4zM67 290h1v1h-1zM93 290h1v1h-1zM385 290h1v1h-1zM411 290h1v1h-1zM423 290h1v1h-1zM460 290h1v1h-1zM18 291h1v1h-1zM55 291h1v1h-1zM58 291h3v1h-3zM68 291h1v1h-1zM93 291h1v1h-1zM385 291h1v1h-1zM410 291h1v1h-1zM423 291h1v1h-1zM460 291h1v1h-1zM18 292h1v1h-1zM56 292h2v1h-2zM68 292h1v1h-1zM93 292h1v1h-1zM385 292h1v1h-1zM410 292h1v1h-1zM422 292h1v1h-1zM460 292h1v1h-1zM19 293h1v1h-1zM56 293h1v1h-1zM68 293h1v1h-1zM94 293h1v1h-1zM384 293h1v1h-1zM410 293h1v1h-1zM422 293h1v1h-1zM459 293h1v1h-1zM19 294h1v1h-1zM56 294h1v1h-1zM69 294h1v1h-1zM94 294h1v1h-1zM384 294h1v1h-1zM409 294h1v1h-1zM422 294h1v1h-1zM459 294h1v1h-1zM19 295h1v1h-1zM56 295h1v1h-1zM69 295h1v1h-1zM94 295h1v1h-1zM384 295h1v1h-1zM409 295h1v1h-1zM422 295h1v1h-1zM459 295h1v1h-1zM19 296h1v1h-1zM57 296h1v1h-1zM69 296h1v1h-1zM95 296h1v1h-1zM383 296h1v1h-1zM409 296h2v1h-2zM421 296h1v1h-1zM459 296h1v1h-1zM20 297h1v1h-1zM57 297h1v1h-1zM70 297h1v1h-1zM95 297h1v1h-1zM349 297h12v1h-12zM383 297h1v1h-1zM408 297h1v1h-1zM411 297h2v1h-2zM421 297h1v1h-1zM458 297h1v1h-1zM20 298h1v1h-1zM57 298h1v1h-1zM70 298h1v1h-1zM96 298h1v1h-1zM348 298h1v1h-1zM382 298h1v1h-1zM408 298h1v1h-1zM413 298h3v1h-3zM421 298h1v1h-1zM458 298h1v1h-1zM20 299h1v1h-1zM58 299h1v1h-1zM70 299h1v1h-1zM96 299h1v1h-1zM348 299h1v1h-1zM382 299h1v1h-1zM408 299h1v1h-1zM416 299h2v1h-2zM420 299h1v1h-1zM458 299h1v1h-1zM20 300h1v1h-1zM58 300h1v1h-1zM71 300h1v1h-1zM97 300h1v1h-1zM348 300h1v1h-1zM381 300h1v1h-1zM407 300h1v1h-1zM418 300h3v1h-3zM458 300h1v1h-1zM21 301h1v1h-1zM58 301h1v1h-1zM71 301h1v1h-1zM97 301h1v1h-1zM349 301h1v1h-1zM381 301h1v1h-1zM407 301h1v1h-1zM420 301h1v1h-1zM457 301h1v1h-1zM21 302h1v1h-1zM59 302h1v1h-1zM71 302h1v1h-1zM97 302h1v1h-1zM349 302h1v1h-1zM381 302h2v1h-2zM407 302h1v1h-1zM419 302h1v1h-1zM457 302h1v1h-1zM21 303h1v1h-1zM59 303h1v1h-1zM72 303h1v1h-1zM98 303h1v1h-1zM349 303h1v1h-1zM380 303h1v1h-1zM383 303h2v1h-2zM406 303h1v1h-1zM419 303h1v1h-1zM457 303h1v1h-1zM22 304h1v1h-1zM59 304h1v1h-1zM70 304h3v1h-3zM98 304h1v1h-1zM349 304h1v1h-1zM380 304h1v1h-1zM385 304h2v1h-2zM406 304h1v1h-1zM419 304h1v1h-1zM456 304h1v1h-1zM22 305h1v1h-1zM60 305h1v1h-1zM68 305h2v1h-2zM73 305h1v1h-1zM99 305h1v1h-1zM350 305h1v1h-1zM379 305h1v1h-1zM387 305h3v1h-3zM405 305h1v1h-1zM418 305h1v1h-1zM456 305h1v1h-1zM22 306h1v1h-1zM60 306h1v1h-1zM66 306h2v1h-2zM73 306h1v1h-1zM99 306h1v1h-1zM350 306h1v1h-1zM379 306h1v1h-1zM390 306h2v1h-2zM405 306h1v1h-1zM418 306h1v1h-1zM456 306h1v1h-1zM22 307h1v1h-1zM61 307h1v1h-1zM64 307h2v1h-2zM73 307h1v1h-1zM100 307h1v1h-1zM350 307h1v1h-1zM378 307h1v1h-1zM392 307h2v1h-2zM405 307h1v1h-1zM417 307h1v1h-1zM456 307h1v1h-1zM23 308h1v1h-1zM61 308h3v1h-3zM74 308h1v1h-1zM100 308h1v1h-1zM350 308h1v1h-1zM378 308h1v1h-1zM394 308h3v1h-3zM404 308h1v1h-1zM417 308h1v1h-1zM455 308h1v1h-1zM23 309h1v1h-1zM61 309h1v1h-1zM74 309h1v1h-1zM101 309h1v1h-1zM350 309h1v1h-1zM377 309h1v1h-1zM397 309h2v1h-2zM404 309h1v1h-1zM417 309h1v1h-1zM455 309h1v1h-1zM23 310h1v1h-1zM62 310h1v1h-1zM75 310h1v1h-1zM101 310h1v1h-1zM351 310h1v1h-1zM377 310h1v1h-1zM399 310h2v1h-2zM403 310h1v1h-1zM416 310h1v1h-1zM455 310h1v1h-1zM24 311h1v1h-1zM62 311h1v1h-1zM75 311h1v1h-1zM102 311h1v1h-1zM351 311h1v1h-1zM376 311h1v1h-1zM401 311h5v1h-5zM416 311h1v1h-1zM454 311h1v1h-1zM24 312h1v1h-1zM63 312h1v1h-1zM76 312h1v1h-1zM102 312h1v1h-1zM351 312h1v1h-1zM376 312h1v1h-1zM402 312h1v1h-1zM406 312h2v1h-2zM415 312h1v1h-1zM454 312h1v1h-1zM24 313h1v1h-1zM63 313h1v1h-1zM76 313h1v1h-1zM101 313h3v1h-3zM375 313h1v1h-1zM402 313h1v1h-1zM408 313h2v1h-2zM415 313h1v1h-1zM454 313h1v1h-1zM25 314h1v1h-1zM63 314h1v1h-1zM76 314h1v1h-1zM99 314h2v1h-2zM103 314h1v1h-1zM375 314h1v1h-1zM402 314h1v1h-1zM410 314h2v1h-2zM415 314h1v1h-1zM453 314h1v1h-1zM25 315h1v1h-1zM64 315h1v1h-1zM77 315h1v1h-1zM97 315h2v1h-2zM104 315h1v1h-1zM374 315h1v1h-1zM401 315h1v1h-1zM412 315h3v1h-3zM453 315h1v1h-1zM25 316h1v1h-1zM64 316h1v1h-1zM77 316h1v1h-1zM95 316h2v1h-2zM104 316h1v1h-1zM374 316h1v1h-1zM401 316h1v1h-1zM414 316h1v1h-1zM453 316h1v1h-1zM26 317h1v1h-1zM65 317h1v1h-1zM78 317h1v1h-1zM93 317h2v1h-2zM105 317h1v1h-1zM373 317h1v1h-1zM400 317h1v1h-1zM413 317h1v1h-1zM452 317h1v1h-1zM26 318h1v1h-1zM65 318h1v1h-1zM77 318h2v1h-2zM91 318h2v1h-2zM106 318h1v1h-1zM372 318h1v1h-1zM400 318h1v1h-1zM413 318h1v1h-1zM452 318h1v1h-1zM27 319h1v1h-1zM66 319h1v1h-1zM75 319h2v1h-2zM79 319h1v1h-1zM89 319h2v1h-2zM106 319h1v1h-1zM372 319h1v1h-1zM399 319h1v1h-1zM412 319h1v1h-1zM451 319h1v1h-1zM27 320h1v1h-1zM66 320h1v1h-1zM73 320h2v1h-2zM79 320h1v1h-1zM87 320h2v1h-2zM107 320h1v1h-1zM371 320h1v1h-1zM399 320h1v1h-1zM412 320h1v1h-1zM451 320h1v1h-1zM27 321h1v1h-1zM66 321h1v1h-1zM71 321h2v1h-2zM80 321h1v1h-1zM85 321h2v1h-2zM107 321h1v1h-1zM371 321h1v1h-1zM398 321h1v1h-1zM412 321h1v1h-1zM451 321h1v1h-1zM28 322h1v1h-1zM67 322h1v1h-1zM69 322h2v1h-2zM80 322h1v1h-1zM83 322h2v1h-2zM108 322h1v1h-1zM370 322h1v1h-1zM398 322h1v1h-1zM411 322h1v1h-1zM450 322h1v1h-1zM28 323h1v1h-1zM67 323h2v1h-2zM81 323h2v1h-2zM109 323h1v1h-1zM331 323h2v1h-2zM369 323h1v1h-1zM397 323h1v1h-1zM411 323h1v1h-1zM450 323h1v1h-1zM29 324h1v1h-1zM68 324h1v1h-1zM81 324h1v1h-1zM109 324h1v1h-1zM333 324h2v1h-2zM369 324h1v1h-1zM397 324h1v1h-1zM410 324h1v1h-1zM449 324h1v1h-1zM29 325h1v1h-1zM68 325h1v1h-1zM82 325h1v1h-1zM110 325h1v1h-1zM335 325h2v1h-2zM368 325h1v1h-1zM396 325h2v1h-2zM410 325h1v1h-1zM449 325h1v1h-1zM29 326h1v1h-1zM69 326h1v1h-1zM83 326h1v1h-1zM111 326h1v1h-1zM337 326h2v1h-2zM367 326h1v1h-1zM395 326h1v1h-1zM398 326h2v1h-2zM409 326h1v1h-1zM449 326h1v1h-1zM30 327h1v1h-1zM69 327h1v1h-1zM83 327h1v1h-1zM111 327h1v1h-1zM339 327h2v1h-2zM367 327h1v1h-1zM395 327h1v1h-1zM400 327h2v1h-2zM409 327h1v1h-1zM448 327h1v1h-1zM30 328h1v1h-1zM70 328h1v1h-1zM84 328h1v1h-1zM112 328h1v1h-1zM366 328h1v1h-1zM394 328h1v1h-1zM402 328h2v1h-2zM408 328h1v1h-1zM448 328h1v1h-1zM31 329h1v1h-1zM71 329h1v1h-1zM84 329h1v1h-1zM113 329h1v1h-1zM365 329h1v1h-1zM394 329h1v1h-1zM404 329h2v1h-2zM407 329h1v1h-1zM447 329h1v1h-1zM31 330h1v1h-1zM71 330h1v1h-1zM85 330h1v1h-1zM114 330h1v1h-1zM364 330h1v1h-1zM393 330h1v1h-1zM406 330h2v1h-2zM447 330h1v1h-1zM31 331h1v1h-1zM72 331h1v1h-1zM85 331h1v1h-1zM114 331h1v1h-1zM364 331h1v1h-1zM393 331h1v1h-1zM406 331h2v1h-2zM447 331h1v1h-1zM32 332h1v1h-1zM72 332h1v1h-1zM85 332h2v1h-2zM115 332h1v1h-1zM363 332h1v1h-1zM392 332h1v1h-1zM406 332h1v1h-1zM408 332h2v1h-2zM446 332h1v1h-1zM32 333h1v1h-1zM73 333h1v1h-1zM83 333h2v1h-2zM87 333h1v1h-1zM116 333h1v1h-1zM362 333h1v1h-1zM391 333h1v1h-1zM405 333h1v1h-1zM410 333h2v1h-2zM446 333h1v1h-1zM33 334h1v1h-1zM73 334h1v1h-1zM82 334h1v1h-1zM87 334h1v1h-1zM117 334h1v1h-1zM361 334h1v1h-1zM391 334h1v1h-1zM405 334h1v1h-1zM412 334h2v1h-2zM445 334h1v1h-1zM33 335h1v1h-1zM74 335h1v1h-1zM80 335h2v1h-2zM88 335h1v1h-1zM117 335h1v1h-1zM319 335h1v1h-1zM361 335h1v1h-1zM390 335h1v1h-1zM404 335h1v1h-1zM414 335h1v1h-1zM445 335h1v1h-1zM34 336h1v1h-1zM74 336h1v1h-1zM79 336h1v1h-1zM89 336h1v1h-1zM118 336h1v1h-1zM320 336h2v1h-2zM360 336h1v1h-1zM389 336h1v1h-1zM404 336h1v1h-1zM415 336h2v1h-2zM444 336h1v1h-1zM34 337h1v1h-1zM75 337h1v1h-1zM77 337h2v1h-2zM89 337h1v1h-1zM119 337h1v1h-1zM322 337h1v1h-1zM359 337h1v1h-1zM389 337h1v1h-1zM403 337h1v1h-1zM417 337h2v1h-2zM444 337h1v1h-1zM35 338h1v1h-1zM75 338h2v1h-2zM90 338h1v1h-1zM120 338h1v1h-1zM323 338h2v1h-2zM358 338h1v1h-1zM388 338h1v1h-1zM402 338h1v1h-1zM419 338h2v1h-2zM443 338h1v1h-1zM35 339h1v1h-1zM73 339h2v1h-2zM76 339h1v1h-1zM91 339h1v1h-1zM121 339h1v1h-1zM325 339h2v1h-2zM357 339h1v1h-1zM387 339h2v1h-2zM402 339h1v1h-1zM421 339h1v1h-1zM443 339h1v1h-1zM36 340h1v1h-1zM71 340h2v1h-2zM77 340h1v1h-1zM91 340h1v1h-1zM121 340h1v1h-1zM327 340h1v1h-1zM357 340h1v1h-1zM387 340h1v1h-1zM389 340h2v1h-2zM401 340h1v1h-1zM422 340h2v1h-2zM442 340h1v1h-1zM36 341h1v1h-1zM70 341h1v1h-1zM78 341h1v1h-1zM92 341h1v1h-1zM122 341h1v1h-1zM356 341h1v1h-1zM386 341h1v1h-1zM391 341h1v1h-1zM400 341h1v1h-1zM424 341h2v1h-2zM442 341h1v1h-1zM37 342h1v1h-1zM68 342h2v1h-2zM78 342h1v1h-1zM93 342h1v1h-1zM123 342h1v1h-1zM355 342h1v1h-1zM385 342h1v1h-1zM392 342h2v1h-2zM400 342h1v1h-1zM426 342h2v1h-2zM441 342h1v1h-1zM37 343h1v1h-1zM67 343h1v1h-1zM79 343h1v1h-1zM93 343h1v1h-1zM124 343h1v1h-1zM354 343h1v1h-1zM385 343h1v1h-1zM394 343h1v1h-1zM399 343h1v1h-1zM428 343h2v1h-2zM441 343h1v1h-1zM38 344h1v1h-1zM65 344h2v1h-2zM79 344h1v1h-1zM94 344h1v1h-1zM125 344h1v1h-1zM353 344h1v1h-1zM384 344h1v1h-1zM395 344h2v1h-2zM399 344h1v1h-1zM430 344h1v1h-1zM440 344h1v1h-1zM38 345h1v1h-1zM63 345h2v1h-2zM80 345h1v1h-1zM94 345h2v1h-2zM126 345h1v1h-1zM352 345h1v1h-1zM383 345h1v1h-1zM397 345h2v1h-2zM431 345h2v1h-2zM440 345h1v1h-1zM39 346h1v1h-1zM62 346h1v1h-1zM81 346h1v1h-1zM92 346h2v1h-2zM96 346h1v1h-1zM127 346h1v1h-1zM351 346h1v1h-1zM382 346h1v1h-1zM397 346h1v1h-1zM433 346h2v1h-2zM439 346h1v1h-1zM39 347h1v1h-1zM60 347h2v1h-2zM81 347h1v1h-1zM91 347h1v1h-1zM96 347h1v1h-1zM128 347h1v1h-1zM301 347h2v1h-2zM350 347h1v1h-1zM382 347h1v1h-1zM397 347h1v1h-1zM435 347h2v1h-2zM439 347h1v1h-1zM40 348h1v1h-1zM59 348h1v1h-1zM82 348h1v1h-1zM89 348h2v1h-2zM97 348h1v1h-1zM129 348h1v1h-1zM303 348h3v1h-3zM349 348h1v1h-1zM381 348h1v1h-1zM396 348h1v1h-1zM437 348h2v1h-2zM40 349h1v1h-1zM57 349h2v1h-2zM83 349h1v1h-1zM88 349h1v1h-1zM98 349h1v1h-1zM130 349h1v1h-1zM306 349h3v1h-3zM348 349h1v1h-1zM380 349h1v1h-1zM395 349h1v1h-1zM438 349h1v1h-1zM41 350h1v1h-1zM55 350h2v1h-2zM84 350h1v1h-1zM86 350h2v1h-2zM99 350h1v1h-1zM131 350h1v1h-1zM296 350h1v1h-1zM309 350h3v1h-3zM347 350h1v1h-1zM379 350h1v1h-1zM394 350h1v1h-1zM437 350h1v1h-1zM42 351h1v1h-1zM54 351h1v1h-1zM84 351h2v1h-2zM99 351h1v1h-1zM132 351h1v1h-1zM296 351h1v1h-1zM312 351h2v1h-2zM346 351h1v1h-1zM379 351h1v1h-1zM394 351h1v1h-1zM436 351h1v1h-1zM42 352h1v1h-1zM52 352h2v1h-2zM85 352h1v1h-1zM100 352h1v1h-1zM133 352h1v1h-1zM296 352h1v1h-1zM345 352h1v1h-1zM378 352h1v1h-1zM380 352h1v1h-1zM393 352h1v1h-1zM436 352h1v1h-1zM43 353h1v1h-1zM51 353h1v1h-1zM86 353h1v1h-1zM101 353h1v1h-1zM134 353h1v1h-1zM297 353h1v1h-1zM344 353h1v1h-1zM377 353h1v1h-1zM381 353h1v1h-1zM392 353h1v1h-1zM435 353h1v1h-1zM43 354h1v1h-1zM49 354h2v1h-2zM87 354h1v1h-1zM102 354h1v1h-1zM135 354h1v1h-1zM297 354h1v1h-1zM343 354h1v1h-1zM376 354h1v1h-1zM382 354h1v1h-1zM391 354h1v1h-1zM435 354h1v1h-1zM44 355h1v1h-1zM47 355h2v1h-2zM87 355h1v1h-1zM103 355h1v1h-1zM136 355h1v1h-1zM283 355h1v1h-1zM297 355h1v1h-1zM342 355h1v1h-1zM375 355h1v1h-1zM383 355h2v1h-2zM391 355h1v1h-1zM434 355h1v1h-1zM44 356h1v1h-1zM46 356h1v1h-1zM88 356h1v1h-1zM104 356h1v1h-1zM137 356h1v1h-1zM283 356h1v1h-1zM297 356h1v1h-1zM341 356h1v1h-1zM374 356h1v1h-1zM385 356h1v1h-1zM390 356h1v1h-1zM434 356h1v1h-1zM45 357h1v1h-1zM89 357h1v1h-1zM104 357h1v1h-1zM138 357h2v1h-2zM283 357h1v1h-1zM298 357h1v1h-1zM339 357h2v1h-2zM374 357h1v1h-1zM386 357h1v1h-1zM389 357h1v1h-1zM433 357h1v1h-1zM46 358h1v1h-1zM90 358h1v1h-1zM103 358h1v1h-1zM105 358h1v1h-1zM140 358h1v1h-1zM282 358h1v1h-1zM298 358h1v1h-1zM338 358h1v1h-1zM373 358h1v1h-1zM387 358h2v1h-2zM432 358h1v1h-1zM46 359h1v1h-1zM90 359h1v1h-1zM102 359h1v1h-1zM106 359h1v1h-1zM141 359h1v1h-1zM282 359h1v1h-1zM298 359h1v1h-1zM337 359h1v1h-1zM372 359h1v1h-1zM388 359h1v1h-1zM432 359h1v1h-1zM47 360h1v1h-1zM91 360h1v1h-1zM100 360h2v1h-2zM107 360h1v1h-1zM142 360h1v1h-1zM282 360h1v1h-1zM336 360h1v1h-1zM371 360h1v1h-1zM387 360h1v1h-1zM431 360h1v1h-1zM48 361h1v1h-1zM92 361h1v1h-1zM99 361h1v1h-1zM108 361h1v1h-1zM143 361h2v1h-2zM282 361h1v1h-1zM334 361h2v1h-2zM370 361h1v1h-1zM386 361h1v1h-1zM430 361h1v1h-1zM48 362h1v1h-1zM93 362h1v1h-1zM98 362h1v1h-1zM109 362h1v1h-1zM145 362h1v1h-1zM282 362h1v1h-1zM333 362h2v1h-2zM369 362h1v1h-1zM385 362h1v1h-1zM430 362h1v1h-1zM49 363h1v1h-1zM94 363h1v1h-1zM97 363h1v1h-1zM110 363h1v1h-1zM146 363h1v1h-1zM250 363h1v1h-1zM282 363h1v1h-1zM332 363h1v1h-1zM335 363h1v1h-1zM368 363h2v1h-2zM384 363h1v1h-1zM429 363h1v1h-1zM50 364h1v1h-1zM95 364h2v1h-2zM111 364h1v1h-1zM147 364h2v1h-2zM250 364h1v1h-1zM281 364h1v1h-1zM330 364h2v1h-2zM336 364h1v1h-1zM367 364h1v1h-1zM370 364h1v1h-1zM383 364h1v1h-1zM428 364h1v1h-1zM50 365h1v1h-1zM95 365h1v1h-1zM112 365h1v1h-1zM149 365h1v1h-1zM250 365h1v1h-1zM281 365h1v1h-1zM329 365h1v1h-1zM336 365h1v1h-1zM366 365h1v1h-1zM371 365h1v1h-1zM383 365h1v1h-1zM428 365h1v1h-1zM51 366h1v1h-1zM96 366h1v1h-1zM113 366h1v1h-1zM150 366h1v1h-1zM250 366h1v1h-1zM281 366h1v1h-1zM328 366h1v1h-1zM337 366h1v1h-1zM365 366h1v1h-1zM372 366h1v1h-1zM382 366h1v1h-1zM427 366h1v1h-1zM52 367h1v1h-1zM97 367h1v1h-1zM114 367h1v1h-1zM151 367h2v1h-2zM250 367h1v1h-1zM326 367h2v1h-2zM338 367h1v1h-1zM364 367h1v1h-1zM373 367h1v1h-1zM381 367h1v1h-1zM426 367h1v1h-1zM52 368h1v1h-1zM98 368h1v1h-1zM115 368h1v1h-1zM153 368h1v1h-1zM251 368h1v1h-1zM325 368h1v1h-1zM339 368h1v1h-1zM363 368h1v1h-1zM373 368h1v1h-1zM380 368h1v1h-1zM426 368h1v1h-1zM53 369h1v1h-1zM99 369h1v1h-1zM115 369h2v1h-2zM154 369h2v1h-2zM251 369h1v1h-1zM323 369h2v1h-2zM339 369h1v1h-1zM362 369h1v1h-1zM374 369h1v1h-1zM379 369h1v1h-1zM425 369h1v1h-1zM54 370h1v1h-1zM100 370h1v1h-1zM114 370h1v1h-1zM117 370h1v1h-1zM156 370h1v1h-1zM251 370h1v1h-1zM322 370h1v1h-1zM340 370h1v1h-1zM361 370h1v1h-1zM375 370h1v1h-1zM378 370h1v1h-1zM424 370h1v1h-1zM54 371h1v1h-1zM101 371h1v1h-1zM113 371h1v1h-1zM118 371h1v1h-1zM157 371h2v1h-2zM251 371h1v1h-1zM320 371h2v1h-2zM341 371h1v1h-1zM360 371h1v1h-1zM376 371h2v1h-2zM424 371h1v1h-1zM55 372h1v1h-1zM102 372h1v1h-1zM111 372h2v1h-2zM119 372h1v1h-1zM159 372h2v1h-2zM251 372h1v1h-1zM318 372h2v1h-2zM342 372h1v1h-1zM359 372h1v1h-1zM376 372h1v1h-1zM423 372h1v1h-1zM56 373h1v1h-1zM103 373h1v1h-1zM110 373h1v1h-1zM120 373h1v1h-1zM161 373h1v1h-1zM251 373h1v1h-1zM317 373h1v1h-1zM343 373h1v1h-1zM358 373h1v1h-1zM375 373h1v1h-1zM422 373h1v1h-1zM57 374h1v1h-1zM104 374h1v1h-1zM109 374h1v1h-1zM121 374h2v1h-2zM162 374h2v1h-2zM315 374h2v1h-2zM343 374h1v1h-1zM356 374h2v1h-2zM374 374h1v1h-1zM421 374h1v1h-1zM57 375h1v1h-1zM105 375h1v1h-1zM108 375h1v1h-1zM123 375h1v1h-1zM161 375h1v1h-1zM164 375h2v1h-2zM313 375h2v1h-2zM344 375h1v1h-1zM355 375h1v1h-1zM358 375h1v1h-1zM373 375h1v1h-1zM421 375h1v1h-1zM58 376h1v1h-1zM106 376h2v1h-2zM124 376h1v1h-1zM161 376h1v1h-1zM166 376h2v1h-2zM311 376h2v1h-2zM345 376h1v1h-1zM354 376h1v1h-1zM359 376h1v1h-1zM372 376h1v1h-1zM420 376h1v1h-1zM59 377h1v1h-1zM107 377h1v1h-1zM125 377h1v1h-1zM160 377h1v1h-1zM168 377h2v1h-2zM309 377h2v1h-2zM346 377h1v1h-1zM353 377h1v1h-1zM360 377h1v1h-1zM371 377h1v1h-1zM419 377h1v1h-1zM60 378h1v1h-1zM108 378h1v1h-1zM126 378h1v1h-1zM160 378h1v1h-1zM170 378h2v1h-2zM307 378h2v1h-2zM346 378h1v1h-1zM352 378h1v1h-1zM361 378h1v1h-1zM370 378h1v1h-1zM418 378h1v1h-1zM60 379h1v1h-1zM109 379h1v1h-1zM127 379h2v1h-2zM159 379h1v1h-1zM172 379h2v1h-2zM305 379h2v1h-2zM347 379h1v1h-1zM350 379h2v1h-2zM361 379h1v1h-1zM369 379h1v1h-1zM418 379h1v1h-1zM61 380h1v1h-1zM110 380h1v1h-1zM126 380h1v1h-1zM129 380h1v1h-1zM159 380h1v1h-1zM174 380h2v1h-2zM303 380h2v1h-2zM348 380h2v1h-2zM362 380h1v1h-1zM368 380h1v1h-1zM417 380h1v1h-1zM62 381h1v1h-1zM111 381h1v1h-1zM125 381h1v1h-1zM130 381h1v1h-1zM158 381h1v1h-1zM176 381h3v1h-3zM300 381h3v1h-3zM348 381h1v1h-1zM363 381h1v1h-1zM367 381h1v1h-1zM416 381h1v1h-1zM63 382h1v1h-1zM112 382h1v1h-1zM124 382h1v1h-1zM131 382h2v1h-2zM158 382h1v1h-1zM179 382h2v1h-2zM298 382h2v1h-2zM346 382h2v1h-2zM364 382h1v1h-1zM366 382h1v1h-1zM415 382h1v1h-1zM64 383h1v1h-1zM113 383h2v1h-2zM123 383h1v1h-1zM133 383h1v1h-1zM157 383h1v1h-1zM181 383h2v1h-2zM296 383h2v1h-2zM345 383h1v1h-1zM364 383h2v1h-2zM414 383h1v1h-1zM64 384h1v1h-1zM115 384h1v1h-1zM123 384h1v1h-1zM134 384h1v1h-1zM156 384h1v1h-1zM183 384h3v1h-3zM293 384h3v1h-3zM344 384h2v1h-2zM363 384h1v1h-1zM414 384h1v1h-1zM65 385h1v1h-1zM116 385h1v1h-1zM122 385h1v1h-1zM135 385h2v1h-2zM156 385h1v1h-1zM186 385h3v1h-3zM290 385h3v1h-3zM342 385h2v1h-2zM346 385h1v1h-1zM362 385h1v1h-1zM413 385h1v1h-1zM66 386h1v1h-1zM117 386h1v1h-1zM121 386h1v1h-1zM137 386h1v1h-1zM155 386h1v1h-1zM189 386h3v1h-3zM287 386h3v1h-3zM341 386h1v1h-1zM346 386h1v1h-1zM361 386h1v1h-1zM412 386h1v1h-1zM67 387h1v1h-1zM118 387h1v1h-1zM120 387h1v1h-1zM138 387h2v1h-2zM155 387h1v1h-1zM192 387h3v1h-3zM284 387h3v1h-3zM339 387h2v1h-2zM347 387h1v1h-1zM360 387h1v1h-1zM411 387h1v1h-1zM68 388h1v1h-1zM119 388h2v1h-2zM139 388h2v1h-2zM154 388h1v1h-1zM195 388h4v1h-4zM280 388h4v1h-4zM338 388h1v1h-1zM348 388h1v1h-1zM358 388h2v1h-2zM410 388h1v1h-1zM69 389h1v1h-1zM121 389h1v1h-1zM138 389h1v1h-1zM141 389h2v1h-2zM154 389h1v1h-1zM199 389h3v1h-3zM277 389h3v1h-3zM336 389h2v1h-2zM348 389h1v1h-1zM357 389h1v1h-1zM409 389h1v1h-1zM70 390h1v1h-1zM122 390h1v1h-1zM138 390h1v1h-1zM143 390h1v1h-1zM153 390h1v1h-1zM202 390h5v1h-5zM272 390h5v1h-5zM335 390h1v1h-1zM349 390h1v1h-1zM356 390h1v1h-1zM408 390h1v1h-1zM70 391h1v1h-1zM123 391h2v1h-2zM137 391h1v1h-1zM144 391h2v1h-2zM153 391h1v1h-1zM207 391h5v1h-5zM267 391h5v1h-5zM333 391h2v1h-2zM350 391h1v1h-1zM354 391h2v1h-2zM408 391h1v1h-1zM71 392h1v1h-1zM125 392h1v1h-1zM136 392h1v1h-1zM146 392h1v1h-1zM152 392h1v1h-1zM212 392h6v1h-6zM261 392h6v1h-6zM332 392h1v1h-1zM350 392h1v1h-1zM353 392h1v1h-1zM407 392h1v1h-1zM72 393h1v1h-1zM126 393h1v1h-1zM136 393h1v1h-1zM147 393h2v1h-2zM152 393h1v1h-1zM218 393h9v1h-9zM252 393h9v1h-9zM330 393h3v1h-3zM351 393h2v1h-2zM406 393h1v1h-1zM73 394h1v1h-1zM127 394h2v1h-2zM135 394h1v1h-1zM149 394h3v1h-3zM227 394h25v1h-25zM328 394h2v1h-2zM333 394h1v1h-1zM350 394h2v1h-2zM405 394h1v1h-1zM74 395h1v1h-1zM129 395h1v1h-1zM134 395h1v1h-1zM151 395h2v1h-2zM251 395h1v1h-1zM326 395h2v1h-2zM333 395h1v1h-1zM349 395h1v1h-1zM404 395h1v1h-1zM75 396h1v1h-1zM130 396h1v1h-1zM134 396h1v1h-1zM153 396h1v1h-1zM251 396h1v1h-1zM325 396h1v1h-1zM334 396h1v1h-1zM348 396h1v1h-1zM403 396h1v1h-1zM76 397h1v1h-1zM131 397h3v1h-3zM153 397h3v1h-3zM251 397h1v1h-1zM323 397h2v1h-2zM335 397h1v1h-1zM346 397h2v1h-2zM402 397h1v1h-1zM77 398h1v1h-1zM133 398h1v1h-1zM152 398h1v1h-1zM156 398h2v1h-2zM251 398h1v1h-1zM321 398h2v1h-2zM335 398h1v1h-1zM345 398h1v1h-1zM401 398h1v1h-1zM78 399h1v1h-1zM134 399h2v1h-2zM152 399h1v1h-1zM158 399h2v1h-2zM251 399h1v1h-1zM319 399h2v1h-2zM336 399h1v1h-1zM343 399h2v1h-2zM400 399h1v1h-1zM79 400h1v1h-1zM136 400h2v1h-2zM151 400h1v1h-1zM160 400h2v1h-2zM252 400h1v1h-1zM317 400h2v1h-2zM337 400h1v1h-1zM341 400h2v1h-2zM399 400h1v1h-1zM80 401h1v1h-1zM138 401h1v1h-1zM151 401h1v1h-1zM162 401h2v1h-2zM252 401h1v1h-1zM315 401h2v1h-2zM319 401h1v1h-1zM337 401h1v1h-1zM340 401h1v1h-1zM398 401h1v1h-1zM81 402h1v1h-1zM139 402h2v1h-2zM150 402h1v1h-1zM164 402h3v1h-3zM252 402h1v1h-1zM312 402h3v1h-3zM319 402h1v1h-1zM338 402h2v1h-2zM397 402h1v1h-1zM82 403h1v1h-1zM141 403h1v1h-1zM150 403h1v1h-1zM167 403h2v1h-2zM252 403h1v1h-1zM310 403h2v1h-2zM320 403h1v1h-1zM337 403h2v1h-2zM396 403h1v1h-1zM83 404h1v1h-1zM142 404h2v1h-2zM149 404h1v1h-1zM167 404h1v1h-1zM169 404h2v1h-2zM252 404h1v1h-1zM308 404h2v1h-2zM320 404h1v1h-1zM335 404h2v1h-2zM339 404h1v1h-1zM395 404h1v1h-1zM84 405h1v1h-1zM144 405h2v1h-2zM149 405h1v1h-1zM167 405h1v1h-1zM171 405h3v1h-3zM252 405h1v1h-1zM305 405h3v1h-3zM321 405h1v1h-1zM333 405h2v1h-2zM339 405h1v1h-1zM394 405h1v1h-1zM85 406h1v1h-1zM146 406h3v1h-3zM166 406h1v1h-1zM174 406h2v1h-2zM252 406h1v1h-1zM303 406h2v1h-2zM321 406h1v1h-1zM331 406h2v1h-2zM340 406h1v1h-1zM393 406h1v1h-1zM86 407h1v1h-1zM147 407h3v1h-3zM166 407h1v1h-1zM176 407h3v1h-3zM252 407h1v1h-1zM300 407h3v1h-3zM304 407h1v1h-1zM322 407h1v1h-1zM329 407h2v1h-2zM340 407h1v1h-1zM392 407h1v1h-1zM87 408h2v1h-2zM146 408h1v1h-1zM150 408h1v1h-1zM165 408h1v1h-1zM179 408h3v1h-3zM252 408h1v1h-1zM297 408h3v1h-3zM304 408h1v1h-1zM322 408h1v1h-1zM328 408h1v1h-1zM341 408h1v1h-1zM390 408h2v1h-2zM89 409h1v1h-1zM146 409h1v1h-1zM151 409h2v1h-2zM165 409h1v1h-1zM182 409h3v1h-3zM252 409h1v1h-1zM294 409h3v1h-3zM305 409h1v1h-1zM323 409h1v1h-1zM326 409h2v1h-2zM342 409h1v1h-1zM389 409h1v1h-1zM90 410h1v1h-1zM145 410h1v1h-1zM153 410h2v1h-2zM164 410h1v1h-1zM182 410h1v1h-1zM185 410h3v1h-3zM252 410h1v1h-1zM291 410h3v1h-3zM305 410h1v1h-1zM323 410h3v1h-3zM342 410h1v1h-1zM388 410h1v1h-1zM91 411h1v1h-1zM145 411h1v1h-1zM155 411h2v1h-2zM164 411h1v1h-1zM181 411h1v1h-1zM188 411h4v1h-4zM252 411h1v1h-1zM287 411h4v1h-4zM306 411h1v1h-1zM322 411h2v1h-2zM343 411h1v1h-1zM387 411h1v1h-1zM92 412h1v1h-1zM144 412h1v1h-1zM157 412h3v1h-3zM163 412h1v1h-1zM181 412h1v1h-1zM192 412h3v1h-3zM253 412h1v1h-1zM284 412h3v1h-3zM289 412h1v1h-1zM306 412h1v1h-1zM319 412h3v1h-3zM344 412h1v1h-1zM386 412h1v1h-1zM93 413h1v1h-1zM144 413h1v1h-1zM160 413h2v1h-2zM163 413h1v1h-1zM180 413h1v1h-1zM195 413h5v1h-5zM253 413h1v1h-1zM279 413h5v1h-5zM289 413h1v1h-1zM307 413h1v1h-1zM317 413h2v1h-2zM344 413h1v1h-1zM385 413h1v1h-1zM94 414h2v1h-2zM143 414h1v1h-1zM162 414h2v1h-2zM180 414h1v1h-1zM197 414h1v1h-1zM200 414h4v1h-4zM253 414h1v1h-1zM275 414h4v1h-4zM290 414h1v1h-1zM307 414h1v1h-1zM315 414h2v1h-2zM345 414h1v1h-1zM383 414h2v1h-2zM96 415h1v1h-1zM142 415h1v1h-1zM164 415h3v1h-3zM180 415h1v1h-1zM197 415h1v1h-1zM204 415h6v1h-6zM253 415h1v1h-1zM269 415h6v1h-6zM290 415h1v1h-1zM308 415h1v1h-1zM312 415h3v1h-3zM345 415h1v1h-1zM382 415h1v1h-1zM97 416h1v1h-1zM142 416h1v1h-1zM167 416h2v1h-2zM179 416h1v1h-1zM196 416h1v1h-1zM210 416h6v1h-6zM253 416h1v1h-1zM263 416h6v1h-6zM274 416h1v1h-1zM290 416h1v1h-1zM308 416h1v1h-1zM310 416h2v1h-2zM346 416h1v1h-1zM381 416h1v1h-1zM98 417h1v1h-1zM141 417h1v1h-1zM169 417h3v1h-3zM179 417h1v1h-1zM196 417h1v1h-1zM212 417h1v1h-1zM216 417h10v1h-10zM253 417h10v1h-10zM274 417h1v1h-1zM291 417h1v1h-1zM307 417h3v1h-3zM347 417h1v1h-1zM380 417h1v1h-1zM99 418h2v1h-2zM141 418h1v1h-1zM172 418h2v1h-2zM178 418h1v1h-1zM196 418h1v1h-1zM212 418h1v1h-1zM226 418h27v1h-27zM258 418h1v1h-1zM275 418h1v1h-1zM291 418h1v1h-1zM305 418h2v1h-2zM347 418h1v1h-1zM378 418h2v1h-2zM101 419h1v1h-1zM140 419h1v1h-1zM174 419h3v1h-3zM178 419h1v1h-1zM195 419h1v1h-1zM212 419h1v1h-1zM228 419h1v1h-1zM242 419h1v1h-1zM258 419h1v1h-1zM275 419h1v1h-1zM291 419h1v1h-1zM302 419h3v1h-3zM348 419h1v1h-1zM377 419h1v1h-1zM102 420h1v1h-1zM140 420h1v1h-1zM177 420h3v1h-3zM195 420h1v1h-1zM211 420h1v1h-1zM228 420h1v1h-1zM242 420h1v1h-1zM258 420h1v1h-1zM275 420h1v1h-1zM291 420h1v1h-1zM299 420h3v1h-3zM349 420h1v1h-1zM376 420h1v1h-1zM103 421h2v1h-2zM139 421h1v1h-1zM180 421h3v1h-3zM195 421h1v1h-1zM211 421h1v1h-1zM228 421h1v1h-1zM242 421h1v1h-1zM258 421h1v1h-1zM275 421h1v1h-1zM292 421h1v1h-1zM296 421h3v1h-3zM349 421h1v1h-1zM374 421h2v1h-2zM105 422h1v1h-1zM138 422h1v1h-1zM183 422h4v1h-4zM195 422h1v1h-1zM211 422h1v1h-1zM228 422h1v1h-1zM242 422h1v1h-1zM258 422h1v1h-1zM275 422h1v1h-1zM292 422h4v1h-4zM350 422h1v1h-1zM373 422h1v1h-1zM106 423h1v1h-1zM138 423h1v1h-1zM187 423h3v1h-3zM194 423h1v1h-1zM211 423h1v1h-1zM228 423h1v1h-1zM242 423h1v1h-1zM259 423h1v1h-1zM275 423h1v1h-1zM289 423h3v1h-3zM350 423h1v1h-1zM372 423h1v1h-1zM107 424h2v1h-2zM137 424h1v1h-1zM190 424h5v1h-5zM211 424h1v1h-1zM227 424h1v1h-1zM243 424h1v1h-1zM259 424h1v1h-1zM276 424h1v1h-1zM285 424h4v1h-4zM351 424h1v1h-1zM370 424h2v1h-2zM109 425h1v1h-1zM137 425h1v1h-1zM194 425h4v1h-4zM210 425h1v1h-1zM227 425h1v1h-1zM243 425h1v1h-1zM259 425h1v1h-1zM276 425h1v1h-1zM281 425h4v1h-4zM352 425h1v1h-1zM369 425h1v1h-1zM110 426h2v1h-2zM136 426h1v1h-1zM198 426h5v1h-5zM210 426h1v1h-1zM227 426h1v1h-1zM243 426h1v1h-1zM259 426h1v1h-1zM276 426h5v1h-5zM352 426h1v1h-1zM367 426h2v1h-2zM112 427h1v1h-1zM136 427h1v1h-1zM203 427h6v1h-6zM210 427h1v1h-1zM227 427h1v1h-1zM243 427h1v1h-1zM259 427h1v1h-1zM270 427h6v1h-6zM353 427h1v1h-1zM366 427h1v1h-1zM113 428h2v1h-2zM135 428h1v1h-1zM209 428h7v1h-7zM227 428h1v1h-1zM243 428h1v1h-1zM259 428h1v1h-1zM263 428h7v1h-7zM354 428h1v1h-1zM364 428h2v1h-2zM115 429h1v1h-1zM135 429h1v1h-1zM216 429h10v1h-10zM227 429h1v1h-1zM243 429h1v1h-1zM253 429h10v1h-10zM354 429h1v1h-1zM363 429h1v1h-1zM116 430h2v1h-2zM134 430h1v1h-1zM226 430h27v1h-27zM355 430h1v1h-1zM361 430h2v1h-2zM118 431h1v1h-1zM133 431h1v1h-1zM243 431h1v1h-1zM355 431h1v1h-1zM360 431h1v1h-1zM119 432h2v1h-2zM133 432h1v1h-1zM243 432h1v1h-1zM356 432h1v1h-1zM358 432h2v1h-2zM121 433h1v1h-1zM132 433h1v1h-1zM243 433h1v1h-1zM357 433h1v1h-1zM122 434h2v1h-2zM132 434h1v1h-1zM243 434h1v1h-1zM355 434h2v1h-2zM124 435h2v1h-2zM131 435h1v1h-1zM243 435h1v1h-1zM353 435h2v1h-2zM126 436h2v1h-2zM131 436h1v1h-1zM243 436h1v1h-1zM351 436h2v1h-2zM128 437h1v1h-1zM130 437h1v1h-1zM243 437h1v1h-1zM350 437h1v1h-1zM129 438h2v1h-2zM243 438h1v1h-1zM348 438h2v1h-2zM131 439h2v1h-2zM243 439h1v1h-1zM346 439h2v1h-2zM133 440h2v1h-2zM243 440h1v1h-1zM344 440h2v1h-2zM135 441h2v1h-2zM243 441h1v1h-1zM342 441h2v1h-2zM137 442h2v1h-2zM243 442h1v1h-1zM340 442h2v1h-2zM139 443h2v1h-2zM243 443h1v1h-1zM338 443h2v1h-2zM141 444h2v1h-2zM243 444h1v1h-1zM336 444h2v1h-2zM143 445h2v1h-2zM243 445h1v1h-1zM334 445h2v1h-2zM145 446h2v1h-2zM243 446h1v1h-1zM332 446h2v1h-2zM147 447h3v1h-3zM243 447h1v1h-1zM329 447h3v1h-3zM150 448h2v1h-2zM243 448h1v1h-1zM327 448h2v1h-2zM152 449h3v1h-3zM243 449h1v1h-1zM324 449h3v1h-3zM155 450h2v1h-2zM243 450h1v1h-1zM322 450h2v1h-2zM157 451h3v1h-3zM243 451h1v1h-1zM319 451h3v1h-3zM160 452h2v1h-2zM243 452h1v1h-1zM317 452h2v1h-2zM162 453h3v1h-3zM243 453h1v1h-1zM314 453h3v1h-3zM165 454h3v1h-3zM243 454h1v1h-1zM311 454h3v1h-3zM168 455h3v1h-3zM243 455h1v1h-1zM308 455h3v1h-3zM171 456h4v1h-4zM243 456h1v1h-1zM304 456h4v1h-4zM175 457h3v1h-3zM243 457h1v1h-1zM301 457h3v1h-3zM178 458h4v1h-4zM243 458h1v1h-1zM297 458h4v1h-4zM182 459h4v1h-4zM243 459h1v1h-1zM293 459h4v1h-4zM186 460h4v1h-4zM243 460h1v1h-1zM289 460h4v1h-4zM190 461h5v1h-5zM243 461h1v1h-1zM284 461h5v1h-5zM195 462h5v1h-5zM243 462h1v1h-1zM279 462h5v1h-5zM200 463h6v1h-6zM243 463h1v1h-1zM273 463h6v1h-6zM206 464h7v1h-7zM243 464h1v1h-1zM266 464h7v1h-7zM213 465h11v1h-11zM243 465h1v1h-1zM255 465h11v1h-11zM224 466h31v1h-31z"/>
<path fill="#808080" d="M229 49h1v1h-1zM232 49h1v1h-1zM239 49h1v1h-1zM241 49h1v1h-1zM244 49h1v1h-1zM248 49h1v1h-1zM222 50h1v1h-1zM225 50h1v1h-1zM229 50h1v1h-1zM232 50h1v1h-1zM239 50h1v1h-1zM241 50h1v1h-1zM244 50h1v1h-1zM248 50h1v1h-1zM254 50h1v1h-1zM258 50h1v1h-1zM261 50h1v1h-1zM209 51h1v1h-1zM212 51h1v1h-1zM215 51h1v1h-1zM222 51h1v1h-1zM225 51h1v1h-1zM229 51h1v1h-1zM232 51h1v1h-1zM239 51h1v1h-1zM241 51h1v1h-1zM244 51h1v1h-1zM248 51h1v1h-1zM254 51h1v1h-1zM258 51h1v1h-1zM261 51h1v1h-1zM264 51h1v1h-1zM206 52h1v1h-1zM209 52h1v1h-1zM212 52h1v1h-1zM215 52h1v1h-1zM222 52h1v1h-1zM225 52h1v1h-1zM229 52h1v1h-1zM232 52h1v1h-1zM239 52h1v1h-1zM241 52h1v1h-1zM244 52h1v1h-1zM248 52h1v1h-1zM254 52h1v1h-1zM258 52h1v1h-1zM261 52h1v1h-1zM264 52h1v1h-1zM271 52h1v1h-1zM274 52h1v1h-1zM199 53h1v1h-1zM206 53h1v1h-1zM209 53h1v1h-1zM212 53h1v1h-1zM216 53h1v1h-1zM222 53h1v1h-1zM225 53h1v1h-1zM229 53h1v1h-1zM232 53h1v1h-1zM239 53h1v1h-1zM241 53h1v1h-1zM244 53h1v1h-1zM248 53h1v1h-1zM254 53h1v1h-1zM258 53h1v1h-1zM261 53h1v1h-1zM264 53h1v1h-1zM271 53h1v1h-1zM274 53h1v1h-1zM277 53h1v1h-1zM196 54h1v1h-1zM199 54h1v1h-1zM206 54h1v1h-1zM210 54h1v1h-1zM213 54h1v1h-1zM216 54h1v1h-1zM222 54h1v1h-1zM225 54h1v1h-1zM229 54h1v1h-1zM232 54h1v1h-1zM239 54h1v1h-1zM241 54h1v1h-1zM244 54h1v1h-1zM247 54h1v1h-1zM254 54h1v1h-1zM258 54h1v1h-1zM261 54h1v1h-1zM264 54h1v1h-1zM270 54h1v1h-1zM274 54h1v1h-1zM277 54h1v1h-1zM281 54h1v1h-1zM192 55h1v1h-1zM196 55h1v1h-1zM199 55h1v1h-1zM206 55h1v1h-1zM210 55h1v1h-1zM213 55h1v1h-1zM216 55h1v1h-1zM223 55h1v1h-1zM226 55h1v1h-1zM229 55h1v1h-1zM232 55h1v1h-1zM239 55h1v1h-1zM241 55h1v1h-1zM244 55h1v1h-1zM247 55h1v1h-1zM253 55h1v1h-1zM257 55h1v1h-1zM260 55h1v1h-1zM264 55h1v1h-1zM270 55h1v1h-1zM273 55h1v1h-1zM277 55h1v1h-1zM280 55h1v1h-1zM287 55h1v1h-1zM189 56h1v1h-1zM193 56h1v1h-1zM196 56h1v1h-1zM200 56h1v1h-1zM206 56h1v1h-1zM210 56h1v1h-1zM213 56h1v1h-1zM216 56h1v1h-1zM223 56h1v1h-1zM226 56h1v1h-1zM229 56h1v1h-1zM232 56h1v1h-1zM239 56h1v1h-1zM241 56h1v1h-1zM244 56h1v1h-1zM247 56h1v1h-1zM253 56h1v1h-1zM257 56h1v1h-1zM260 56h1v1h-1zM263 56h1v1h-1zM270 56h1v1h-1zM273 56h1v1h-1zM276 56h1v1h-1zM280 56h1v1h-1zM287 56h1v1h-1zM290 56h1v1h-1zM183 57h1v1h-1zM190 57h1v1h-1zM193 57h1v1h-1zM197 57h1v1h-1zM200 57h1v1h-1zM207 57h1v1h-1zM210 57h1v1h-1zM213 57h1v1h-1zM216 57h1v1h-1zM223 57h1v1h-1zM226 57h1v1h-1zM229 57h1v1h-1zM232 57h1v1h-1zM239 57h1v1h-1zM241 57h1v1h-1zM244 57h1v1h-1zM247 57h1v1h-1zM253 57h1v1h-1zM257 57h1v1h-1zM260 57h1v1h-1zM263 57h1v1h-1zM270 57h1v1h-1zM273 57h1v1h-1zM276 57h1v1h-1zM280 57h1v1h-1zM286 57h1v1h-1zM290 57h1v1h-1zM294 57h1v1h-1zM180 58h1v1h-1zM183 58h1v1h-1zM190 58h1v1h-1zM193 58h1v1h-1zM197 58h1v1h-1zM200 58h1v1h-1zM207 58h1v1h-1zM210 58h1v1h-1zM213 58h1v1h-1zM216 58h1v1h-1zM223 58h1v1h-1zM226 58h1v1h-1zM229 58h1v1h-1zM232 58h1v1h-1zM239 58h1v1h-1zM241 58h1v1h-1zM244 58h1v1h-1zM247 58h1v1h-1zM253 58h1v1h-1zM257 58h1v1h-1zM260 58h1v1h-1zM263 58h1v1h-1zM270 58h1v1h-1zM273 58h1v1h-1zM276 58h1v1h-1zM280 58h1v1h-1zM286 58h1v1h-1zM289 58h1v1h-1zM294 58h1v1h-1zM297 58h1v1h-1zM177 59h1v1h-1zM180 59h1v1h-1zM184 59h1v1h-1zM190 59h1v1h-1zM193 59h1v1h-1zM197 59h1v1h-1zM200 59h1v1h-1zM207 59h1v1h-1zM210 59h1v1h-1zM214 59h1v1h-1zM217 59h1v1h-1zM223 59h1v1h-1zM226 59h1v1h-1zM229 59h1v1h-1zM232 59h1v1h-1zM239 59h1v1h-1zM241 59h1v1h-1zM244 59h1v1h-1zM247 59h1v1h-1zM253 59h1v1h-1zM257 59h1v1h-1zM260 59h1v1h-1zM263 59h1v1h-1zM270 59h1v1h-1zM273 59h1v1h-1zM276 59h1v1h-1zM279 59h1v1h-1zM286 59h1v1h-1zM289 59h1v1h-1zM293 59h1v1h-1zM297 59h1v1h-1zM177 60h1v1h-1zM181 60h1v1h-1zM184 60h1v1h-1zM190 60h1v1h-1zM194 60h1v1h-1zM197 60h1v1h-1zM200 60h1v1h-1zM207 60h1v1h-1zM211 60h1v1h-1zM214 60h1v1h-1zM217 60h1v1h-1zM223 60h1v1h-1zM253 60h1v1h-1zM257 60h1v1h-1zM260 60h1v1h-1zM263 60h1v1h-1zM269 60h1v1h-1zM272 60h1v1h-1zM276 60h1v1h-1zM279 60h1v1h-1zM285 60h1v1h-1zM289 60h1v1h-1zM293 60h1v1h-1zM296 60h1v1h-1zM303 60h1v1h-1zM173 61h1v1h-1zM178 61h1v1h-1zM181 61h1v1h-1zM184 61h1v1h-1zM191 61h1v1h-1zM194 61h1v1h-1zM197 61h1v1h-1zM201 61h1v1h-1zM207 61h1v1h-1zM211 61h1v1h-1zM214 61h1v1h-1zM263 61h1v1h-1zM269 61h1v1h-1zM272 61h1v1h-1zM275 61h1v1h-1zM279 61h1v1h-1zM285 61h1v1h-1zM288 61h1v1h-1zM292 61h1v1h-1zM296 61h1v1h-1zM303 61h1v1h-1zM306 61h1v1h-1zM174 62h1v1h-1zM178 62h1v1h-1zM181 62h1v1h-1zM185 62h1v1h-1zM191 62h1v1h-1zM194 62h1v1h-1zM198 62h1v1h-1zM201 62h1v1h-1zM207 62h1v1h-1zM269 62h1v1h-1zM272 62h1v1h-1zM275 62h1v1h-1zM279 62h1v1h-1zM285 62h1v1h-1zM288 62h1v1h-1zM292 62h1v1h-1zM295 62h1v1h-1zM302 62h1v1h-1zM306 62h1v1h-1zM309 62h1v1h-1zM167 63h1v1h-1zM174 63h1v1h-1zM178 63h1v1h-1zM182 63h1v1h-1zM185 63h1v1h-1zM191 63h1v1h-1zM194 63h1v1h-1zM198 63h1v1h-1zM201 63h1v1h-1zM275 63h1v1h-1zM278 63h1v1h-1zM285 63h1v1h-1zM288 63h1v1h-1zM292 63h1v1h-1zM295 63h1v1h-1zM302 63h1v1h-1zM305 63h1v1h-1zM309 63h1v1h-1zM164 64h1v1h-1zM167 64h1v1h-1zM175 64h1v1h-1zM179 64h1v1h-1zM182 64h1v1h-1zM185 64h1v1h-1zM191 64h1v1h-1zM195 64h1v1h-1zM198 64h1v1h-1zM284 64h1v1h-1zM288 64h1v1h-1zM291 64h1v1h-1zM295 64h1v1h-1zM301 64h1v1h-1zM305 64h1v1h-1zM308 64h1v1h-1zM312 64h1v1h-1zM164 65h1v1h-1zM168 65h1v1h-1zM175 65h1v1h-1zM179 65h1v1h-1zM182 65h1v1h-1zM185 65h1v1h-1zM192 65h1v1h-1zM284 65h1v1h-1zM287 65h1v1h-1zM291 65h1v1h-1zM294 65h1v1h-1zM301 65h1v1h-1zM304 65h1v1h-1zM308 65h1v1h-1zM311 65h1v1h-1zM161 66h1v1h-1zM165 66h1v1h-1zM168 66h1v1h-1zM175 66h1v1h-1zM179 66h1v1h-1zM182 66h1v1h-1zM186 66h1v1h-1zM287 66h1v1h-1zM290 66h1v1h-1zM294 66h1v1h-1zM301 66h1v1h-1zM304 66h1v1h-1zM307 66h1v1h-1zM311 66h1v1h-1zM318 66h1v1h-1zM158 67h1v1h-1zM162 67h1v1h-1zM165 67h1v1h-1zM169 67h1v1h-1zM176 67h1v1h-1zM179 67h1v1h-1zM183 67h1v1h-1zM186 67h1v1h-1zM293 67h1v1h-1zM300 67h1v1h-1zM304 67h1v1h-1zM307 67h1v1h-1zM310 67h1v1h-1zM318 67h1v1h-1zM159 68h1v1h-1zM162 68h1v1h-1zM166 68h1v1h-1zM169 68h1v1h-1zM176 68h1v1h-1zM180 68h1v1h-1zM183 68h1v1h-1zM300 68h1v1h-1zM303 68h1v1h-1zM307 68h1v1h-1zM310 68h1v1h-1zM317 68h1v1h-1zM321 68h1v1h-1zM159 69h1v1h-1zM163 69h1v1h-1zM166 69h1v1h-1zM169 69h1v1h-1zM177 69h1v1h-1zM180 69h1v1h-1zM299 69h1v1h-1zM303 69h1v1h-1zM306 69h1v1h-1zM310 69h1v1h-1zM317 69h1v1h-1zM321 69h1v1h-1zM324 69h1v1h-1zM152 70h1v1h-1zM160 70h1v1h-1zM163 70h1v1h-1zM166 70h1v1h-1zM170 70h1v1h-1zM177 70h1v1h-1zM302 70h1v1h-1zM306 70h1v1h-1zM309 70h1v1h-1zM316 70h1v1h-1zM320 70h1v1h-1zM324 70h1v1h-1zM153 71h1v1h-1zM160 71h1v1h-1zM163 71h1v1h-1zM167 71h1v1h-1zM170 71h1v1h-1zM305 71h1v1h-1zM309 71h1v1h-1zM316 71h1v1h-1zM320 71h1v1h-1zM323 71h1v1h-1zM327 71h1v1h-1zM150 72h1v1h-1zM153 72h1v1h-1zM161 72h1v1h-1zM164 72h1v1h-1zM167 72h1v1h-1zM171 72h1v1h-1zM305 72h1v1h-1zM308 72h1v1h-1zM316 72h1v1h-1zM319 72h1v1h-1zM323 72h1v1h-1zM326 72h1v1h-1zM146 73h1v1h-1zM150 73h1v1h-1zM154 73h1v1h-1zM161 73h1v1h-1zM164 73h1v1h-1zM168 73h1v1h-1zM308 73h1v1h-1zM315 73h1v1h-1zM319 73h1v1h-1zM322 73h1v1h-1zM326 73h1v1h-1zM147 74h1v1h-1zM151 74h1v1h-1zM154 74h1v1h-1zM162 74h1v1h-1zM165 74h1v1h-1zM168 74h1v1h-1zM315 74h1v1h-1zM318 74h1v1h-1zM322 74h1v1h-1zM325 74h1v1h-1zM333 74h1v1h-1zM143 75h1v1h-1zM147 75h1v1h-1zM151 75h1v1h-1zM155 75h1v1h-1zM162 75h1v1h-1zM165 75h1v1h-1zM314 75h1v1h-1zM318 75h1v1h-1zM321 75h1v1h-1zM325 75h1v1h-1zM332 75h1v1h-1zM336 75h1v1h-1zM144 76h1v1h-1zM148 76h1v1h-1zM152 76h1v1h-1zM155 76h1v1h-1zM163 76h1v1h-1zM317 76h1v1h-1zM321 76h1v1h-1zM324 76h1v1h-1zM332 76h1v1h-1zM335 76h1v1h-1zM144 77h1v1h-1zM148 77h1v1h-1zM152 77h1v1h-1zM156 77h1v1h-1zM317 77h1v1h-1zM320 77h1v1h-1zM324 77h1v1h-1zM331 77h1v1h-1zM335 77h1v1h-1zM339 77h1v1h-1zM138 78h1v1h-1zM145 78h1v1h-1zM149 78h1v1h-1zM153 78h1v1h-1zM156 78h1v1h-1zM320 78h1v1h-1zM323 78h1v1h-1zM331 78h1v1h-1zM334 78h1v1h-1zM338 78h1v1h-1zM139 79h1v1h-1zM146 79h1v1h-1zM149 79h1v1h-1zM153 79h1v1h-1zM157 79h1v1h-1zM323 79h1v1h-1zM330 79h1v1h-1zM334 79h1v1h-1zM338 79h1v1h-1zM342 79h1v1h-1zM135 80h1v1h-1zM139 80h1v1h-1zM146 80h1v1h-1zM150 80h1v1h-1zM154 80h1v1h-1zM330 80h1v1h-1zM333 80h1v1h-1zM337 80h1v1h-1zM341 80h1v1h-1zM136 81h1v1h-1zM140 81h1v1h-1zM147 81h1v1h-1zM150 81h1v1h-1zM329 81h1v1h-1zM333 81h1v1h-1zM336 81h1v1h-1zM341 81h1v1h-1zM132 82h1v1h-1zM136 82h1v1h-1zM140 82h1v1h-1zM148 82h1v1h-1zM151 82h1v1h-1zM329 82h1v1h-1zM332 82h1v1h-1zM336 82h1v1h-1zM340 82h1v1h-1zM133 83h1v1h-1zM137 83h1v1h-1zM141 83h1v1h-1zM148 83h1v1h-1zM328 83h1v1h-1zM332 83h1v1h-1zM335 83h1v1h-1zM339 83h1v1h-1zM347 83h1v1h-1zM129 84h1v1h-1zM134 84h1v1h-1zM138 84h1v1h-1zM141 84h1v1h-1zM331 84h1v1h-1zM334 84h1v1h-1zM339 84h1v1h-1zM346 84h1v1h-1zM130 85h1v1h-1zM134 85h1v1h-1zM138 85h1v1h-1zM142 85h1v1h-1zM334 85h1v1h-1zM338 85h1v1h-1zM345 85h1v1h-1zM350 85h1v1h-1zM131 86h1v1h-1zM135 86h1v1h-1zM139 86h1v1h-1zM142 86h1v1h-1zM333 86h1v1h-1zM337 86h1v1h-1zM345 86h1v1h-1zM349 86h1v1h-1zM131 87h1v1h-1zM136 87h1v1h-1zM140 87h1v1h-1zM143 87h1v1h-1zM337 87h1v1h-1zM344 87h1v1h-1zM348 87h1v1h-1zM352 87h1v1h-1zM125 88h1v1h-1zM132 88h1v1h-1zM137 88h1v1h-1zM140 88h1v1h-1zM336 88h1v1h-1zM343 88h1v1h-1zM348 88h1v1h-1zM351 88h1v1h-1zM125 89h1v1h-1zM133 89h1v1h-1zM137 89h1v1h-1zM342 89h1v1h-1zM347 89h1v1h-1zM351 89h1v1h-1zM355 89h1v1h-1zM121 90h1v1h-1zM126 90h1v1h-1zM134 90h1v1h-1zM138 90h1v1h-1zM342 90h1v1h-1zM346 90h1v1h-1zM350 90h1v1h-1zM354 90h1v1h-1zM122 91h1v1h-1zM127 91h1v1h-1zM134 91h1v1h-1zM341 91h1v1h-1zM345 91h1v1h-1zM349 91h1v1h-1zM353 91h1v1h-1zM119 92h1v1h-1zM123 92h1v1h-1zM127 92h1v1h-1zM135 92h1v1h-1zM345 92h1v1h-1zM348 92h1v1h-1zM353 92h1v1h-1zM120 93h1v1h-1zM124 93h1v1h-1zM128 93h1v1h-1zM344 93h1v1h-1zM348 93h1v1h-1zM352 93h1v1h-1zM361 93h1v1h-1zM116 94h1v1h-1zM121 94h1v1h-1zM125 94h1v1h-1zM129 94h1v1h-1zM347 94h1v1h-1zM351 94h1v1h-1zM360 94h1v1h-1zM117 95h1v1h-1zM121 95h1v1h-1zM125 95h1v1h-1zM129 95h1v1h-1zM346 95h1v1h-1zM350 95h1v1h-1zM359 95h1v1h-1zM363 95h1v1h-1zM118 96h1v1h-1zM122 96h1v1h-1zM126 96h1v1h-1zM130 96h1v1h-1zM350 96h1v1h-1zM358 96h1v1h-1zM362 96h1v1h-1zM119 97h1v1h-1zM123 97h1v1h-1zM127 97h1v1h-1zM349 97h1v1h-1zM357 97h1v1h-1zM361 97h1v1h-1zM366 97h1v1h-1zM111 98h1v1h-1zM120 98h1v1h-1zM124 98h1v1h-1zM128 98h1v1h-1zM357 98h1v1h-1zM360 98h1v1h-1zM365 98h1v1h-1zM112 99h1v1h-1zM120 99h1v1h-1zM124 99h1v1h-1zM356 99h1v1h-1zM359 99h1v1h-1zM364 99h1v1h-1zM368 99h1v1h-1zM109 100h1v1h-1zM113 100h1v1h-1zM121 100h1v1h-1zM125 100h1v1h-1zM355 100h1v1h-1zM359 100h1v1h-1zM363 100h1v1h-1zM367 100h1v1h-1zM110 101h1v1h-1zM114 101h1v1h-1zM122 101h1v1h-1zM354 101h1v1h-1zM358 101h1v1h-1zM362 101h1v1h-1zM366 101h1v1h-1zM111 102h1v1h-1zM115 102h1v1h-1zM123 102h1v1h-1zM357 102h1v1h-1zM362 102h1v1h-1zM365 102h1v1h-1zM106 103h1v1h-1zM112 103h1v1h-1zM115 103h1v1h-1zM356 103h1v1h-1zM361 103h1v1h-1zM364 103h1v1h-1zM107 104h1v1h-1zM113 104h1v1h-1zM116 104h1v1h-1zM360 104h1v1h-1zM364 104h1v1h-1zM373 104h1v1h-1zM104 105h1v1h-1zM108 105h1v1h-1zM113 105h1v1h-1zM117 105h1v1h-1zM316 105h1v1h-1zM359 105h1v1h-1zM363 105h1v1h-1zM372 105h1v1h-1zM105 106h1v1h-1zM109 106h1v1h-1zM114 106h1v1h-1zM118 106h1v1h-1zM362 106h1v1h-1zM371 106h1v1h-1zM375 106h1v1h-1zM106 107h1v1h-1zM110 107h2v1h-2zM115 107h1v1h-1zM315 107h1v1h-1zM361 107h1v1h-1zM369 107h2v1h-2zM374 107h1v1h-1zM107 108h1v1h-1zM112 108h1v1h-1zM116 108h1v1h-1zM269 108h1v1h-1zM368 108h1v1h-1zM373 108h1v1h-1zM108 109h1v1h-1zM113 109h1v1h-1zM269 109h1v1h-1zM314 109h1v1h-1zM367 109h1v1h-1zM372 109h1v1h-1zM378 109h1v1h-1zM99 110h1v1h-1zM108 110h1v1h-1zM114 110h1v1h-1zM268 110h1v1h-1zM366 110h1v1h-1zM371 110h1v1h-1zM377 110h1v1h-1zM100 111h1v1h-1zM109 111h1v1h-1zM268 111h1v1h-1zM313 111h1v1h-1zM365 111h1v1h-1zM371 111h1v1h-1zM376 111h1v1h-1zM380 111h1v1h-1zM97 112h1v1h-1zM101 112h1v1h-1zM110 112h1v1h-1zM268 112h1v1h-1zM370 112h1v1h-1zM374 112h2v1h-2zM379 112h1v1h-1zM98 113h1v1h-1zM102 113h1v1h-1zM111 113h1v1h-1zM267 113h1v1h-1zM311 113h1v1h-1zM369 113h1v1h-1zM373 113h1v1h-1zM378 113h1v1h-1zM99 114h1v1h-1zM103 114h2v1h-2zM267 114h1v1h-1zM368 114h1v1h-1zM372 114h1v1h-1zM376 114h2v1h-2zM95 115h1v1h-1zM100 115h1v1h-1zM105 115h1v1h-1zM267 115h1v1h-1zM310 115h1v1h-1zM371 115h1v1h-1zM375 115h1v1h-1zM96 116h1v1h-1zM101 116h2v1h-2zM106 116h1v1h-1zM267 116h1v1h-1zM370 116h1v1h-1zM374 116h1v1h-1zM384 116h1v1h-1zM93 117h1v1h-1zM97 117h1v1h-1zM103 117h1v1h-1zM107 117h1v1h-1zM146 117h1v1h-1zM266 117h1v1h-1zM309 117h1v1h-1zM373 117h1v1h-1zM383 117h1v1h-1zM94 118h1v1h-1zM98 118h1v1h-1zM104 118h1v1h-1zM266 118h1v1h-1zM372 118h1v1h-1zM382 118h1v1h-1zM95 119h1v1h-1zM99 119h2v1h-2zM105 119h1v1h-1zM147 119h1v1h-1zM308 119h1v1h-1zM380 119h2v1h-2zM386 119h1v1h-1zM96 120h1v1h-1zM101 120h1v1h-1zM379 120h1v1h-1zM384 120h2v1h-2zM97 121h2v1h-2zM102 121h1v1h-1zM149 121h1v1h-1zM307 121h1v1h-1zM378 121h1v1h-1zM383 121h1v1h-1zM388 121h1v1h-1zM99 122h1v1h-1zM103 122h1v1h-1zM377 122h1v1h-1zM382 122h1v1h-1zM387 122h1v1h-1zM89 123h1v1h-1zM100 123h1v1h-1zM150 123h1v1h-1zM306 123h1v1h-1zM376 123h1v1h-1zM380 123h2v1h-2zM386 123h1v1h-1zM90 124h1v1h-1zM101 124h1v1h-1zM379 124h1v1h-1zM384 124h2v1h-2zM91 125h2v1h-2zM152 125h1v1h-1zM305 125h1v1h-1zM378 125h1v1h-1zM383 125h1v1h-1zM389 125h2v1h-2zM87 126h1v1h-1zM93 126h1v1h-1zM382 126h1v1h-1zM388 126h1v1h-1zM88 127h2v1h-2zM94 127h1v1h-1zM153 127h1v1h-1zM303 127h1v1h-1zM381 127h1v1h-1zM386 127h2v1h-2zM85 128h1v1h-1zM90 128h1v1h-1zM95 128h2v1h-2zM380 128h1v1h-1zM385 128h1v1h-1zM86 129h1v1h-1zM91 129h1v1h-1zM97 129h1v1h-1zM155 129h1v1h-1zM302 129h1v1h-1zM383 129h2v1h-2zM394 129h1v1h-1zM87 130h2v1h-2zM92 130h2v1h-2zM382 130h1v1h-1zM392 130h2v1h-2zM83 131h1v1h-1zM89 131h1v1h-1zM94 131h1v1h-1zM156 131h1v1h-1zM301 131h1v1h-1zM391 131h1v1h-1zM84 132h1v1h-1zM90 132h1v1h-1zM95 132h1v1h-1zM390 132h1v1h-1zM396 132h1v1h-1zM85 133h2v1h-2zM91 133h2v1h-2zM158 133h1v1h-1zM300 133h1v1h-1zM388 133h2v1h-2zM394 133h2v1h-2zM87 134h1v1h-1zM93 134h1v1h-1zM387 134h1v1h-1zM393 134h1v1h-1zM88 135h1v1h-1zM160 135h1v1h-1zM299 135h1v1h-1zM386 135h1v1h-1zM392 135h1v1h-1zM398 135h1v1h-1zM79 136h1v1h-1zM89 136h2v1h-2zM390 136h2v1h-2zM396 136h2v1h-2zM80 137h2v1h-2zM91 137h1v1h-1zM161 137h1v1h-1zM298 137h1v1h-1zM389 137h1v1h-1zM395 137h1v1h-1zM82 138h1v1h-1zM388 138h1v1h-1zM393 138h2v1h-2zM400 138h1v1h-1zM77 139h1v1h-1zM83 139h2v1h-2zM163 139h1v1h-1zM296 139h1v1h-1zM392 139h1v1h-1zM398 139h2v1h-2zM78 140h2v1h-2zM85 140h1v1h-1zM390 140h2v1h-2zM396 140h2v1h-2zM80 141h1v1h-1zM86 141h2v1h-2zM164 141h1v1h-1zM295 141h1v1h-1zM394 141h2v1h-2zM75 142h1v1h-1zM81 142h2v1h-2zM88 142h1v1h-1zM392 142h2v1h-2zM76 143h2v1h-2zM83 143h1v1h-1zM166 143h1v1h-1zM294 143h1v1h-1zM391 143h1v1h-1zM403 143h1v1h-1zM78 144h2v1h-2zM84 144h2v1h-2zM401 144h2v1h-2zM74 145h1v1h-1zM80 145h2v1h-2zM86 145h1v1h-1zM167 145h1v1h-1zM293 145h1v1h-1zM400 145h1v1h-1zM75 146h2v1h-2zM82 146h2v1h-2zM398 146h2v1h-2zM405 146h1v1h-1zM77 147h2v1h-2zM84 147h1v1h-1zM169 147h1v1h-1zM292 147h1v1h-1zM397 147h1v1h-1zM403 147h2v1h-2zM79 148h2v1h-2zM395 148h2v1h-2zM401 148h2v1h-2zM81 149h2v1h-2zM170 149h1v1h-1zM291 149h1v1h-1zM399 149h2v1h-2zM406 149h1v1h-1zM83 150h1v1h-1zM397 150h2v1h-2zM404 150h2v1h-2zM71 151h1v1h-1zM172 151h1v1h-1zM290 151h1v1h-1zM396 151h1v1h-1zM402 151h2v1h-2zM72 152h2v1h-2zM400 152h2v1h-2zM408 152h1v1h-1zM74 153h2v1h-2zM173 153h1v1h-1zM288 153h1v1h-1zM398 153h2v1h-2zM406 153h2v1h-2zM69 154h2v1h-2zM76 154h2v1h-2zM404 154h2v1h-2zM71 155h2v1h-2zM78 155h2v1h-2zM175 155h1v1h-1zM287 155h1v1h-1zM402 155h2v1h-2zM73 156h2v1h-2zM400 156h2v1h-2zM68 157h2v1h-2zM75 157h2v1h-2zM176 157h1v1h-1zM286 157h1v1h-1zM399 157h1v1h-1zM70 158h2v1h-2zM77 158h2v1h-2zM411 158h1v1h-1zM72 159h2v1h-2zM178 159h1v1h-1zM285 159h1v1h-1zM409 159h2v1h-2zM66 160h2v1h-2zM74 160h2v1h-2zM407 160h2v1h-2zM68 161h2v1h-2zM76 161h2v1h-2zM179 161h1v1h-1zM284 161h1v1h-1zM405 161h2v1h-2zM412 161h1v1h-1zM70 162h3v1h-3zM403 162h2v1h-2zM410 162h2v1h-2zM73 163h2v1h-2zM181 163h1v1h-1zM283 163h1v1h-1zM402 163h1v1h-1zM407 163h3v1h-3zM75 164h1v1h-1zM405 164h2v1h-2zM413 164h2v1h-2zM182 165h1v1h-1zM282 165h1v1h-1zM403 165h2v1h-2zM411 165h2v1h-2zM64 166h1v1h-1zM375 166h1v1h-1zM408 166h3v1h-3zM65 167h2v1h-2zM184 167h1v1h-1zM280 167h1v1h-1zM373 167h1v1h-1zM406 167h2v1h-2zM414 167h2v1h-2zM67 168h3v1h-3zM371 168h1v1h-1zM404 168h2v1h-2zM412 168h2v1h-2zM62 169h2v1h-2zM70 169h2v1h-2zM186 169h1v1h-1zM279 169h1v1h-1zM409 169h3v1h-3zM64 170h2v1h-2zM72 170h2v1h-2zM367 170h1v1h-1zM407 170h2v1h-2zM66 171h3v1h-3zM187 171h1v1h-1zM406 171h1v1h-1zM61 172h2v1h-2zM69 172h2v1h-2zM363 172h1v1h-1zM63 173h2v1h-2zM71 173h2v1h-2zM189 173h1v1h-1zM277 173h1v1h-1zM417 173h1v1h-1zM65 174h3v1h-3zM361 174h1v1h-1zM415 174h2v1h-2zM60 175h2v1h-2zM68 175h2v1h-2zM190 175h1v1h-1zM276 175h1v1h-1zM359 175h1v1h-1zM412 175h3v1h-3zM62 176h2v1h-2zM70 176h1v1h-1zM357 176h1v1h-1zM410 176h2v1h-2zM64 177h3v1h-3zM99 177h1v1h-1zM192 177h1v1h-1zM275 177h1v1h-1zM355 177h1v1h-1zM408 177h2v1h-2zM418 177h2v1h-2zM67 178h2v1h-2zM101 178h1v1h-1zM353 178h1v1h-1zM414 178h4v1h-4zM69 179h1v1h-1zM103 179h1v1h-1zM193 179h1v1h-1zM273 179h1v1h-1zM351 179h1v1h-1zM411 179h3v1h-3zM105 180h1v1h-1zM349 180h1v1h-1zM409 180h2v1h-2zM419 180h2v1h-2zM58 181h2v1h-2zM107 181h1v1h-1zM195 181h1v1h-1zM272 181h1v1h-1zM347 181h1v1h-1zM415 181h4v1h-4zM60 182h2v1h-2zM109 182h1v1h-1zM412 182h3v1h-3zM62 183h3v1h-3zM111 183h1v1h-1zM196 183h1v1h-1zM271 183h1v1h-1zM343 183h1v1h-1zM410 183h2v1h-2zM420 183h2v1h-2zM57 184h2v1h-2zM65 184h2v1h-2zM113 184h1v1h-1zM115 184h1v1h-1zM341 184h1v1h-1zM416 184h4v1h-4zM59 185h2v1h-2zM67 185h1v1h-1zM117 185h1v1h-1zM198 185h1v1h-1zM270 185h1v1h-1zM339 185h1v1h-1zM413 185h3v1h-3zM61 186h3v1h-3zM119 186h1v1h-1zM337 186h1v1h-1zM411 186h2v1h-2zM64 187h2v1h-2zM121 187h1v1h-1zM199 187h1v1h-1zM269 187h1v1h-1zM335 187h1v1h-1zM56 188h2v1h-2zM66 188h1v1h-1zM123 188h1v1h-1zM58 189h3v1h-3zM125 189h1v1h-1zM201 189h1v1h-1zM268 189h1v1h-1zM333 189h1v1h-1zM422 189h1v1h-1zM61 190h4v1h-4zM127 190h1v1h-1zM331 190h1v1h-1zM418 190h4v1h-4zM55 191h2v1h-2zM65 191h2v1h-2zM129 191h1v1h-1zM202 191h1v1h-1zM267 191h1v1h-1zM329 191h1v1h-1zM414 191h4v1h-4zM57 192h3v1h-3zM131 192h1v1h-1zM133 192h1v1h-1zM327 192h1v1h-1zM413 192h1v1h-1zM423 192h1v1h-1zM60 193h4v1h-4zM135 193h1v1h-1zM204 193h1v1h-1zM265 193h1v1h-1zM325 193h1v1h-1zM419 193h4v1h-4zM64 194h2v1h-2zM137 194h1v1h-1zM323 194h1v1h-1zM415 194h4v1h-4zM139 195h1v1h-1zM205 195h1v1h-1zM264 195h1v1h-1zM321 195h1v1h-1zM414 195h1v1h-1zM141 196h1v1h-1zM319 196h1v1h-1zM422 196h3v1h-3zM54 197h1v1h-1zM143 197h1v1h-1zM207 197h1v1h-1zM263 197h1v1h-1zM317 197h1v1h-1zM417 197h5v1h-5zM55 198h4v1h-4zM145 198h1v1h-1zM315 198h1v1h-1zM414 198h3v1h-3zM59 199h4v1h-4zM147 199h1v1h-1zM149 199h1v1h-1zM208 199h1v1h-1zM262 199h1v1h-1zM313 199h1v1h-1zM423 199h3v1h-3zM63 200h1v1h-1zM151 200h1v1h-1zM311 200h1v1h-1zM418 200h5v1h-5zM53 201h3v1h-3zM153 201h1v1h-1zM210 201h1v1h-1zM261 201h1v1h-1zM309 201h1v1h-1zM415 201h3v1h-3zM56 202h5v1h-5zM155 202h1v1h-1zM61 203h3v1h-3zM157 203h1v1h-1zM211 203h1v1h-1zM260 203h1v1h-1zM307 203h1v1h-1zM52 204h3v1h-3zM159 204h1v1h-1zM305 204h1v1h-1zM55 205h5v1h-5zM161 205h1v1h-1zM213 205h1v1h-1zM259 205h1v1h-1zM303 205h1v1h-1zM60 206h3v1h-3zM163 206h1v1h-1zM165 206h1v1h-1zM301 206h1v1h-1zM421 206h6v1h-6zM52 207h2v1h-2zM167 207h1v1h-1zM215 207h1v1h-1zM257 207h1v1h-1zM299 207h1v1h-1zM416 207h5v1h-5zM54 208h6v1h-6zM169 208h1v1h-1zM297 208h1v1h-1zM60 209h3v1h-3zM171 209h1v1h-1zM216 209h1v1h-1zM256 209h1v1h-1zM295 209h1v1h-1zM425 209h3v1h-3zM173 210h1v1h-1zM293 210h1v1h-1zM419 210h6v1h-6zM175 211h1v1h-1zM218 211h1v1h-1zM255 211h1v1h-1zM417 211h2v1h-2zM177 212h1v1h-1zM289 212h1v1h-1zM425 212h3v1h-3zM179 213h1v1h-1zM181 213h1v1h-1zM219 213h1v1h-1zM254 213h1v1h-1zM287 213h1v1h-1zM420 213h5v1h-5zM51 214h5v1h-5zM183 214h1v1h-1zM285 214h1v1h-1zM417 214h3v1h-3zM56 215h6v1h-6zM185 215h1v1h-1zM221 215h1v1h-1zM253 215h1v1h-1zM283 215h1v1h-1zM426 215h2v1h-2zM187 216h1v1h-1zM281 216h1v1h-1zM420 216h6v1h-6zM50 217h5v1h-5zM189 217h1v1h-1zM222 217h1v1h-1zM252 217h1v1h-1zM418 217h2v1h-2zM55 218h6v1h-6zM191 218h1v1h-1zM279 218h1v1h-1zM193 219h1v1h-1zM224 219h1v1h-1zM250 219h1v1h-1zM277 219h1v1h-1zM50 220h5v1h-5zM195 220h1v1h-1zM275 220h1v1h-1zM55 221h6v1h-6zM197 221h1v1h-1zM199 221h1v1h-1zM225 221h1v1h-1zM249 221h1v1h-1zM273 221h1v1h-1zM201 222h1v1h-1zM271 222h1v1h-1zM424 222h5v1h-5zM203 223h1v1h-1zM227 223h1v1h-1zM248 223h1v1h-1zM269 223h1v1h-1zM418 223h6v1h-6zM50 224h5v1h-5zM205 224h1v1h-1zM267 224h1v1h-1zM55 225h6v1h-6zM207 225h1v1h-1zM228 225h1v1h-1zM247 225h1v1h-1zM265 225h1v1h-1zM424 225h5v1h-5zM209 226h1v1h-1zM263 226h1v1h-1zM419 226h5v1h-5zM211 227h1v1h-1zM230 227h1v1h-1zM246 227h1v1h-1zM261 227h1v1h-1zM213 228h1v1h-1zM215 228h1v1h-1zM259 228h1v1h-1zM217 229h1v1h-1zM231 229h1v1h-1zM245 229h1v1h-1zM257 229h1v1h-1zM419 229h11v1h-11zM49 230h5v1h-5zM219 230h1v1h-1zM255 230h1v1h-1zM54 231h6v1h-6zM221 231h1v1h-1zM233 231h1v1h-1zM244 231h1v1h-1zM253 231h1v1h-1zM223 232h1v1h-1zM419 232h11v1h-11zM225 233h1v1h-1zM234 233h1v1h-1zM242 233h1v1h-1zM251 233h1v1h-1zM49 234h11v1h-11zM227 234h1v1h-1zM249 234h1v1h-1zM229 235h1v1h-1zM231 235h1v1h-1zM236 235h1v1h-1zM241 235h1v1h-1zM247 235h1v1h-1zM233 236h1v1h-1zM245 236h1v1h-1zM49 237h11v1h-11zM235 237h1v1h-1zM237 237h1v1h-1zM240 237h1v1h-1zM243 237h1v1h-1zM237 238h1v1h-1zM241 238h1v1h-1zM49 239h11v1h-11zM239 239h1v1h-1zM419 239h11v1h-11zM237 240h1v1h-1zM241 240h1v1h-1zM235 241h1v1h-1zM238 241h1v1h-1zM241 241h1v1h-1zM243 241h1v1h-1zM419 241h11v1h-11zM233 242h1v1h-1zM245 242h1v1h-1zM231 243h1v1h-1zM237 243h1v1h-1zM242 243h1v1h-1zM247 243h1v1h-1zM249 243h1v1h-1zM229 244h1v1h-1zM251 244h1v1h-1zM419 244h11v1h-11zM227 245h1v1h-1zM236 245h1v1h-1zM244 245h1v1h-1zM253 245h1v1h-1zM49 246h11v1h-11zM255 246h1v1h-1zM225 247h1v1h-1zM234 247h1v1h-1zM245 247h1v1h-1zM257 247h1v1h-1zM419 247h5v1h-5zM223 248h1v1h-1zM259 248h1v1h-1zM424 248h6v1h-6zM49 249h11v1h-11zM221 249h1v1h-1zM233 249h1v1h-1zM247 249h1v1h-1zM261 249h1v1h-1zM219 250h1v1h-1zM263 250h1v1h-1zM265 250h1v1h-1zM217 251h1v1h-1zM232 251h1v1h-1zM248 251h1v1h-1zM267 251h1v1h-1zM55 252h5v1h-5zM215 252h1v1h-1zM269 252h1v1h-1zM50 253h5v1h-5zM213 253h1v1h-1zM231 253h1v1h-1zM250 253h1v1h-1zM271 253h1v1h-1zM418 253h6v1h-6zM211 254h1v1h-1zM273 254h1v1h-1zM424 254h5v1h-5zM55 255h6v1h-6zM209 255h1v1h-1zM230 255h1v1h-1zM251 255h1v1h-1zM275 255h1v1h-1zM50 256h5v1h-5zM207 256h1v1h-1zM277 256h1v1h-1zM205 257h1v1h-1zM229 257h1v1h-1zM253 257h1v1h-1zM279 257h1v1h-1zM281 257h1v1h-1zM418 257h5v1h-5zM203 258h1v1h-1zM283 258h1v1h-1zM423 258h6v1h-6zM201 259h1v1h-1zM228 259h1v1h-1zM254 259h1v1h-1zM285 259h1v1h-1zM199 260h1v1h-1zM287 260h1v1h-1zM418 260h5v1h-5zM59 261h2v1h-2zM226 261h1v1h-1zM256 261h1v1h-1zM289 261h1v1h-1zM423 261h6v1h-6zM53 262h6v1h-6zM197 262h1v1h-1zM291 262h1v1h-1zM51 263h2v1h-2zM195 263h1v1h-1zM225 263h1v1h-1zM257 263h1v1h-1zM293 263h1v1h-1zM417 263h6v1h-6zM59 264h3v1h-3zM193 264h1v1h-1zM295 264h1v1h-1zM423 264h5v1h-5zM54 265h5v1h-5zM191 265h1v1h-1zM224 265h1v1h-1zM259 265h1v1h-1zM297 265h1v1h-1zM299 265h1v1h-1zM51 266h3v1h-3zM189 266h1v1h-1zM301 266h1v1h-1zM60 267h2v1h-2zM187 267h1v1h-1zM223 267h1v1h-1zM260 267h1v1h-1zM303 267h1v1h-1zM54 268h6v1h-6zM185 268h1v1h-1zM305 268h1v1h-1zM51 269h3v1h-3zM183 269h1v1h-1zM222 269h1v1h-1zM262 269h1v1h-1zM307 269h1v1h-1zM416 269h3v1h-3zM181 270h1v1h-1zM419 270h6v1h-6zM57 271h6v1h-6zM179 271h1v1h-1zM221 271h1v1h-1zM263 271h1v1h-1zM311 271h1v1h-1zM425 271h2v1h-2zM52 272h5v1h-5zM177 272h1v1h-1zM416 272h3v1h-3zM175 273h1v1h-1zM219 273h1v1h-1zM265 273h1v1h-1zM317 273h1v1h-1zM419 273h5v1h-5zM173 274h1v1h-1zM319 274h1v1h-1zM424 274h3v1h-3zM171 275h1v1h-1zM218 275h1v1h-1zM267 275h1v1h-1zM321 275h1v1h-1zM415 275h3v1h-3zM323 276h1v1h-1zM418 276h5v1h-5zM61 277h3v1h-3zM169 277h1v1h-1zM217 277h1v1h-1zM268 277h1v1h-1zM325 277h1v1h-1zM423 277h3v1h-3zM56 278h5v1h-5zM167 278h1v1h-1zM327 278h1v1h-1zM415 278h1v1h-1zM53 279h3v1h-3zM165 279h1v1h-1zM216 279h1v1h-1zM270 279h1v1h-1zM329 279h1v1h-1zM331 279h1v1h-1zM416 279h4v1h-4zM62 280h3v1h-3zM163 280h1v1h-1zM333 280h1v1h-1zM420 280h4v1h-4zM57 281h5v1h-5zM161 281h1v1h-1zM215 281h1v1h-1zM271 281h1v1h-1zM335 281h1v1h-1zM424 281h1v1h-1zM54 282h3v1h-3zM159 282h1v1h-1zM337 282h1v1h-1zM64 283h1v1h-1zM157 283h1v1h-1zM214 283h1v1h-1zM273 283h1v1h-1zM339 283h1v1h-1zM60 284h4v1h-4zM155 284h1v1h-1zM341 284h1v1h-1zM413 284h2v1h-2zM56 285h4v1h-4zM153 285h1v1h-1zM213 285h1v1h-1zM274 285h1v1h-1zM343 285h1v1h-1zM415 285h3v1h-3zM55 286h1v1h-1zM65 286h1v1h-1zM151 286h1v1h-1zM345 286h1v1h-1zM347 286h1v1h-1zM418 286h4v1h-4zM61 287h4v1h-4zM149 287h1v1h-1zM211 287h1v1h-1zM276 287h1v1h-1zM349 287h1v1h-1zM412 287h2v1h-2zM422 287h2v1h-2zM57 288h4v1h-4zM147 288h1v1h-1zM351 288h1v1h-1zM414 288h3v1h-3zM56 289h1v1h-1zM145 289h1v1h-1zM210 289h1v1h-1zM277 289h1v1h-1zM353 289h1v1h-1zM417 289h4v1h-4zM355 290h1v1h-1zM412 290h1v1h-1zM421 290h2v1h-2zM143 291h1v1h-1zM209 291h1v1h-1zM279 291h1v1h-1zM357 291h1v1h-1zM413 291h2v1h-2zM66 292h2v1h-2zM141 292h1v1h-1zM359 292h1v1h-1zM415 292h3v1h-3zM62 293h4v1h-4zM139 293h1v1h-1zM208 293h1v1h-1zM280 293h1v1h-1zM361 293h1v1h-1zM411 293h1v1h-1zM418 293h2v1h-2zM59 294h3v1h-3zM137 294h1v1h-1zM363 294h1v1h-1zM365 294h1v1h-1zM412 294h2v1h-2zM420 294h2v1h-2zM57 295h2v1h-2zM67 295h2v1h-2zM135 295h1v1h-1zM207 295h1v1h-1zM282 295h1v1h-1zM414 295h3v1h-3zM63 296h4v1h-4zM133 296h1v1h-1zM369 296h1v1h-1zM417 296h2v1h-2zM60 297h3v1h-3zM131 297h1v1h-1zM206 297h1v1h-1zM283 297h1v1h-1zM371 297h1v1h-1zM419 297h2v1h-2zM58 298h2v1h-2zM68 298h2v1h-2zM129 298h1v1h-1zM64 299h4v1h-4zM127 299h1v1h-1zM205 299h1v1h-1zM285 299h1v1h-1zM375 299h1v1h-1zM409 299h1v1h-1zM61 300h3v1h-3zM125 300h1v1h-1zM377 300h1v1h-1zM410 300h2v1h-2zM59 301h2v1h-2zM69 301h2v1h-2zM123 301h1v1h-1zM203 301h1v1h-1zM286 301h1v1h-1zM379 301h1v1h-1zM412 301h3v1h-3zM67 302h2v1h-2zM121 302h1v1h-1zM408 302h1v1h-1zM415 302h2v1h-2zM64 303h3v1h-3zM119 303h1v1h-1zM202 303h1v1h-1zM288 303h1v1h-1zM409 303h2v1h-2zM417 303h2v1h-2zM62 304h2v1h-2zM117 304h1v1h-1zM411 304h3v1h-3zM61 305h1v1h-1zM201 305h1v1h-1zM289 305h1v1h-1zM406 305h2v1h-2zM414 305h2v1h-2zM115 306h1v1h-1zM408 306h2v1h-2zM416 306h2v1h-2zM72 307h1v1h-1zM113 307h1v1h-1zM200 307h1v1h-1zM291 307h1v1h-1zM410 307h3v1h-3zM70 308h2v1h-2zM111 308h1v1h-1zM405 308h2v1h-2zM413 308h2v1h-2zM67 309h3v1h-3zM109 309h1v1h-1zM199 309h1v1h-1zM292 309h1v1h-1zM407 309h2v1h-2zM415 309h2v1h-2zM65 310h2v1h-2zM73 310h2v1h-2zM107 310h1v1h-1zM409 310h3v1h-3zM63 311h2v1h-2zM71 311h2v1h-2zM105 311h1v1h-1zM198 311h1v1h-1zM294 311h1v1h-1zM412 311h2v1h-2zM68 312h3v1h-3zM103 312h1v1h-1zM414 312h1v1h-1zM66 313h2v1h-2zM74 313h2v1h-2zM196 313h1v1h-1zM296 313h1v1h-1zM64 314h2v1h-2zM72 314h2v1h-2zM403 314h1v1h-1zM69 315h3v1h-3zM76 315h1v1h-1zM195 315h1v1h-1zM297 315h1v1h-1zM404 315h2v1h-2zM67 316h2v1h-2zM74 316h2v1h-2zM406 316h3v1h-3zM66 317h1v1h-1zM72 317h2v1h-2zM194 317h1v1h-1zM299 317h1v1h-1zM401 317h2v1h-2zM409 317h2v1h-2zM70 318h2v1h-2zM403 318h2v1h-2zM411 318h2v1h-2zM68 319h2v1h-2zM193 319h1v1h-1zM300 319h1v1h-1zM405 319h2v1h-2zM67 320h1v1h-1zM400 320h2v1h-2zM407 320h2v1h-2zM79 321h1v1h-1zM192 321h1v1h-1zM302 321h1v1h-1zM402 321h2v1h-2zM409 321h2v1h-2zM77 322h2v1h-2zM404 322h2v1h-2zM75 323h2v1h-2zM191 323h1v1h-1zM303 323h1v1h-1zM399 323h2v1h-2zM406 323h2v1h-2zM73 324h2v1h-2zM80 324h1v1h-1zM401 324h2v1h-2zM408 324h2v1h-2zM71 325h2v1h-2zM78 325h2v1h-2zM190 325h1v1h-1zM305 325h1v1h-1zM403 325h2v1h-2zM70 326h1v1h-1zM76 326h2v1h-2zM405 326h2v1h-2zM74 327h2v1h-2zM82 327h1v1h-1zM188 327h1v1h-1zM306 327h1v1h-1zM407 327h1v1h-1zM72 328h2v1h-2zM80 328h2v1h-2zM395 328h1v1h-1zM78 329h2v1h-2zM187 329h1v1h-1zM308 329h1v1h-1zM396 329h2v1h-2zM76 330h2v1h-2zM82 330h2v1h-2zM398 330h2v1h-2zM74 331h2v1h-2zM81 331h1v1h-1zM186 331h1v1h-1zM309 331h1v1h-1zM400 331h2v1h-2zM73 332h1v1h-1zM79 332h2v1h-2zM394 332h2v1h-2zM402 332h2v1h-2zM78 333h1v1h-1zM185 333h1v1h-1zM311 333h1v1h-1zM392 333h1v1h-1zM396 333h2v1h-2zM404 333h1v1h-1zM76 334h2v1h-2zM393 334h2v1h-2zM398 334h2v1h-2zM75 335h1v1h-1zM87 335h1v1h-1zM184 335h1v1h-1zM312 335h1v1h-1zM395 335h1v1h-1zM400 335h2v1h-2zM85 336h2v1h-2zM390 336h1v1h-1zM396 336h2v1h-2zM402 336h2v1h-2zM83 337h2v1h-2zM183 337h1v1h-1zM314 337h1v1h-1zM391 337h2v1h-2zM398 337h1v1h-1zM81 338h2v1h-2zM87 338h2v1h-2zM393 338h1v1h-1zM399 338h2v1h-2zM79 339h2v1h-2zM86 339h1v1h-1zM182 339h1v1h-1zM315 339h1v1h-1zM394 339h2v1h-2zM401 339h1v1h-1zM78 340h1v1h-1zM84 340h2v1h-2zM90 340h1v1h-1zM396 340h1v1h-1zM83 341h1v1h-1zM88 341h2v1h-2zM180 341h1v1h-1zM317 341h1v1h-1zM387 341h1v1h-1zM397 341h2v1h-2zM81 342h2v1h-2zM87 342h1v1h-1zM388 342h1v1h-1zM399 342h1v1h-1zM80 343h1v1h-1zM86 343h1v1h-1zM92 343h1v1h-1zM179 343h1v1h-1zM318 343h1v1h-1zM389 343h2v1h-2zM84 344h2v1h-2zM90 344h2v1h-2zM385 344h1v1h-1zM391 344h1v1h-1zM83 345h1v1h-1zM89 345h1v1h-1zM178 345h1v1h-1zM320 345h1v1h-1zM386 345h1v1h-1zM392 345h1v1h-1zM82 346h1v1h-1zM88 346h1v1h-1zM383 346h1v1h-1zM387 346h2v1h-2zM393 346h2v1h-2zM86 347h2v1h-2zM177 347h1v1h-1zM322 347h1v1h-1zM384 347h1v1h-1zM389 347h1v1h-1zM395 347h1v1h-1zM85 348h1v1h-1zM96 348h1v1h-1zM385 348h2v1h-2zM390 348h1v1h-1zM84 349h1v1h-1zM94 349h2v1h-2zM176 349h1v1h-1zM323 349h1v1h-1zM381 349h1v1h-1zM387 349h1v1h-1zM391 349h2v1h-2zM93 350h1v1h-1zM98 350h1v1h-1zM382 350h1v1h-1zM388 350h1v1h-1zM393 350h1v1h-1zM91 351h2v1h-2zM97 351h1v1h-1zM175 351h1v1h-1zM325 351h1v1h-1zM383 351h2v1h-2zM389 351h2v1h-2zM90 352h1v1h-1zM96 352h1v1h-1zM385 352h1v1h-1zM391 352h1v1h-1zM88 353h2v1h-2zM94 353h2v1h-2zM100 353h1v1h-1zM173 353h1v1h-1zM326 353h1v1h-1zM386 353h1v1h-1zM93 354h1v1h-1zM98 354h2v1h-2zM377 354h1v1h-1zM387 354h2v1h-2zM92 355h1v1h-1zM97 355h1v1h-1zM102 355h1v1h-1zM172 355h1v1h-1zM328 355h1v1h-1zM378 355h1v1h-1zM389 355h1v1h-1zM91 356h1v1h-1zM96 356h1v1h-1zM101 356h1v1h-1zM375 356h1v1h-1zM379 356h1v1h-1zM90 357h1v1h-1zM94 357h2v1h-2zM100 357h1v1h-1zM171 357h1v1h-1zM329 357h1v1h-1zM376 357h1v1h-1zM380 357h1v1h-1zM93 358h1v1h-1zM98 358h2v1h-2zM377 358h1v1h-1zM381 358h2v1h-2zM92 359h1v1h-1zM97 359h1v1h-1zM170 359h1v1h-1zM331 359h1v1h-1zM373 359h1v1h-1zM378 359h1v1h-1zM383 359h1v1h-1zM96 360h1v1h-1zM106 360h1v1h-1zM374 360h1v1h-1zM379 360h2v1h-2zM384 360h1v1h-1zM95 361h1v1h-1zM105 361h1v1h-1zM169 361h1v1h-1zM332 361h1v1h-1zM371 361h1v1h-1zM375 361h1v1h-1zM381 361h1v1h-1zM385 361h1v1h-1zM94 362h1v1h-1zM104 362h1v1h-1zM108 362h1v1h-1zM372 362h1v1h-1zM376 362h1v1h-1zM382 362h1v1h-1zM102 363h2v1h-2zM107 363h1v1h-1zM168 363h1v1h-1zM373 363h1v1h-1zM377 363h2v1h-2zM383 363h1v1h-1zM101 364h1v1h-1zM106 364h1v1h-1zM110 364h1v1h-1zM374 364h1v1h-1zM379 364h1v1h-1zM100 365h1v1h-1zM104 365h2v1h-2zM109 365h1v1h-1zM167 365h1v1h-1zM367 365h1v1h-1zM375 365h2v1h-2zM380 365h1v1h-1zM99 366h1v1h-1zM103 366h1v1h-1zM108 366h1v1h-1zM368 366h1v1h-1zM377 366h1v1h-1zM381 366h1v1h-1zM98 367h1v1h-1zM102 367h1v1h-1zM107 367h1v1h-1zM113 367h1v1h-1zM165 367h1v1h-1zM369 367h1v1h-1zM378 367h1v1h-1zM101 368h1v1h-1zM106 368h1v1h-1zM112 368h1v1h-1zM364 368h1v1h-1zM370 368h1v1h-1zM379 368h1v1h-1zM100 369h1v1h-1zM106 369h1v1h-1zM111 369h1v1h-1zM164 369h1v1h-1zM365 369h1v1h-1zM371 369h1v1h-1zM105 370h1v1h-1zM109 370h2v1h-2zM362 370h1v1h-1zM366 370h1v1h-1zM371 370h1v1h-1zM104 371h1v1h-1zM108 371h1v1h-1zM117 371h1v1h-1zM163 371h1v1h-1zM363 371h1v1h-1zM367 371h1v1h-1zM372 371h1v1h-1zM103 372h1v1h-1zM107 372h1v1h-1zM116 372h1v1h-1zM360 372h1v1h-1zM364 372h1v1h-1zM368 372h2v1h-2zM373 372h1v1h-1zM106 373h1v1h-1zM115 373h1v1h-1zM119 373h1v1h-1zM162 373h1v1h-1zM361 373h1v1h-1zM365 373h1v1h-1zM370 373h1v1h-1zM374 373h1v1h-1zM105 374h1v1h-1zM114 374h1v1h-1zM118 374h1v1h-1zM362 374h1v1h-1zM366 374h1v1h-1zM371 374h1v1h-1zM113 375h1v1h-1zM117 375h1v1h-1zM122 375h1v1h-1zM363 375h1v1h-1zM366 375h1v1h-1zM372 375h1v1h-1zM113 376h1v1h-1zM116 376h1v1h-1zM121 376h1v1h-1zM355 376h1v1h-1zM364 376h1v1h-1zM367 376h1v1h-1zM112 377h1v1h-1zM115 377h1v1h-1zM120 377h1v1h-1zM124 377h1v1h-1zM356 377h1v1h-1zM364 377h1v1h-1zM368 377h1v1h-1zM111 378h1v1h-1zM115 378h1v1h-1zM119 378h1v1h-1zM123 378h1v1h-1zM353 378h1v1h-1zM357 378h1v1h-1zM365 378h1v1h-1zM369 378h1v1h-1zM110 379h1v1h-1zM114 379h1v1h-1zM118 379h1v1h-1zM122 379h1v1h-1zM354 379h1v1h-1zM358 379h1v1h-1zM366 379h1v1h-1zM113 380h1v1h-1zM118 380h1v1h-1zM121 380h1v1h-1zM350 380h1v1h-1zM355 380h1v1h-1zM359 380h1v1h-1zM367 380h1v1h-1zM112 381h1v1h-1zM117 381h1v1h-1zM120 381h1v1h-1zM129 381h1v1h-1zM351 381h1v1h-1zM355 381h1v1h-1zM359 381h1v1h-1zM116 382h1v1h-1zM120 382h1v1h-1zM128 382h1v1h-1zM348 382h1v1h-1zM352 382h1v1h-1zM356 382h1v1h-1zM360 382h1v1h-1zM115 383h1v1h-1zM119 383h1v1h-1zM127 383h1v1h-1zM132 383h1v1h-1zM349 383h1v1h-1zM353 383h1v1h-1zM357 383h1v1h-1zM361 383h1v1h-1zM118 384h1v1h-1zM127 384h1v1h-1zM131 384h1v1h-1zM349 384h1v1h-1zM354 384h1v1h-1zM358 384h1v1h-1zM362 384h1v1h-1zM117 385h1v1h-1zM126 385h1v1h-1zM130 385h1v1h-1zM134 385h1v1h-1zM350 385h1v1h-1zM354 385h1v1h-1zM358 385h1v1h-1zM125 386h1v1h-1zM130 386h1v1h-1zM133 386h1v1h-1zM343 386h1v1h-1zM351 386h1v1h-1zM355 386h1v1h-1zM359 386h1v1h-1zM124 387h1v1h-1zM129 387h1v1h-1zM132 387h1v1h-1zM137 387h1v1h-1zM344 387h1v1h-1zM351 387h1v1h-1zM356 387h1v1h-1zM124 388h1v1h-1zM128 388h1v1h-1zM132 388h1v1h-1zM136 388h1v1h-1zM340 388h1v1h-1zM345 388h1v1h-1zM352 388h1v1h-1zM357 388h1v1h-1zM123 389h1v1h-1zM127 389h1v1h-1zM131 389h1v1h-1zM135 389h1v1h-1zM341 389h1v1h-1zM345 389h1v1h-1zM353 389h1v1h-1zM127 390h1v1h-1zM130 390h1v1h-1zM135 390h1v1h-1zM142 390h1v1h-1zM338 390h1v1h-1zM342 390h1v1h-1zM346 390h1v1h-1zM353 390h1v1h-1zM126 391h1v1h-1zM129 391h1v1h-1zM134 391h1v1h-1zM141 391h1v1h-1zM335 391h1v1h-1zM338 391h1v1h-1zM342 391h1v1h-1zM347 391h1v1h-1zM129 392h1v1h-1zM133 392h1v1h-1zM141 392h1v1h-1zM145 392h1v1h-1zM336 392h1v1h-1zM339 392h1v1h-1zM343 392h1v1h-1zM348 392h1v1h-1zM128 393h1v1h-1zM132 393h1v1h-1zM140 393h1v1h-1zM144 393h1v1h-1zM336 393h1v1h-1zM340 393h1v1h-1zM344 393h1v1h-1zM348 393h1v1h-1zM132 394h1v1h-1zM139 394h1v1h-1zM144 394h1v1h-1zM146 394h1v1h-1zM337 394h1v1h-1zM340 394h1v1h-1zM345 394h1v1h-1zM349 394h1v1h-1zM131 395h1v1h-1zM139 395h1v1h-1zM143 395h1v1h-1zM146 395h1v1h-1zM150 395h1v1h-1zM330 395h1v1h-1zM337 395h1v1h-1zM341 395h1v1h-1zM345 395h1v1h-1zM138 396h1v1h-1zM142 396h1v1h-1zM145 396h1v1h-1zM149 396h1v1h-1zM327 396h1v1h-1zM330 396h1v1h-1zM338 396h1v1h-1zM342 396h1v1h-1zM346 396h1v1h-1zM137 397h1v1h-1zM142 397h1v1h-1zM145 397h1v1h-1zM149 397h1v1h-1zM328 397h1v1h-1zM331 397h1v1h-1zM338 397h1v1h-1zM342 397h1v1h-1zM137 398h1v1h-1zM141 398h1v1h-1zM144 398h1v1h-1zM148 398h1v1h-1zM325 398h1v1h-1zM328 398h1v1h-1zM332 398h1v1h-1zM339 398h1v1h-1zM343 398h1v1h-1zM136 399h1v1h-1zM140 399h1v1h-1zM144 399h1v1h-1zM148 399h1v1h-1zM155 399h1v1h-1zM321 399h1v1h-1zM325 399h1v1h-1zM329 399h1v1h-1zM332 399h1v1h-1zM339 399h1v1h-1zM140 400h1v1h-1zM143 400h1v1h-1zM147 400h1v1h-1zM155 400h1v1h-1zM158 400h1v1h-1zM322 400h1v1h-1zM326 400h1v1h-1zM329 400h1v1h-1zM333 400h1v1h-1zM340 400h1v1h-1zM139 401h1v1h-1zM143 401h1v1h-1zM147 401h1v1h-1zM154 401h1v1h-1zM158 401h1v1h-1zM161 401h1v1h-1zM322 401h1v1h-1zM326 401h1v1h-1zM330 401h1v1h-1zM334 401h1v1h-1zM142 402h1v1h-1zM146 402h1v1h-1zM154 402h1v1h-1zM157 402h1v1h-1zM161 402h1v1h-1zM315 402h1v1h-1zM323 402h1v1h-1zM327 402h1v1h-1zM330 402h1v1h-1zM334 402h1v1h-1zM142 403h1v1h-1zM146 403h1v1h-1zM153 403h1v1h-1zM157 403h1v1h-1zM160 403h1v1h-1zM164 403h1v1h-1zM313 403h1v1h-1zM316 403h1v1h-1zM323 403h1v1h-1zM327 403h1v1h-1zM331 403h1v1h-1zM335 403h1v1h-1zM145 404h1v1h-1zM153 404h1v1h-1zM156 404h1v1h-1zM160 404h1v1h-1zM163 404h1v1h-1zM310 404h1v1h-1zM313 404h1v1h-1zM316 404h1v1h-1zM324 404h1v1h-1zM328 404h1v1h-1zM331 404h1v1h-1zM152 405h1v1h-1zM156 405h1v1h-1zM159 405h1v1h-1zM163 405h1v1h-1zM170 405h1v1h-1zM310 405h1v1h-1zM314 405h1v1h-1zM317 405h1v1h-1zM324 405h1v1h-1zM328 405h1v1h-1zM332 405h1v1h-1zM152 406h1v1h-1zM155 406h1v1h-1zM159 406h1v1h-1zM162 406h1v1h-1zM170 406h1v1h-1zM173 406h1v1h-1zM307 406h1v1h-1zM311 406h1v1h-1zM314 406h1v1h-1zM317 406h1v1h-1zM325 406h1v1h-1zM329 406h1v1h-1zM151 407h1v1h-1zM155 407h1v1h-1zM158 407h1v1h-1zM162 407h1v1h-1zM169 407h1v1h-1zM173 407h1v1h-1zM308 407h1v1h-1zM311 407h1v1h-1zM315 407h1v1h-1zM318 407h1v1h-1zM325 407h1v1h-1zM154 408h1v1h-1zM158 408h1v1h-1zM162 408h1v1h-1zM169 408h1v1h-1zM172 408h1v1h-1zM176 408h1v1h-1zM301 408h1v1h-1zM308 408h1v1h-1zM312 408h1v1h-1zM315 408h1v1h-1zM318 408h1v1h-1zM326 408h1v1h-1zM154 409h1v1h-1zM157 409h1v1h-1zM161 409h1v1h-1zM168 409h1v1h-1zM172 409h1v1h-1zM175 409h1v1h-1zM179 409h1v1h-1zM298 409h1v1h-1zM301 409h1v1h-1zM309 409h1v1h-1zM312 409h1v1h-1zM315 409h1v1h-1zM319 409h1v1h-1zM157 410h1v1h-1zM161 410h1v1h-1zM168 410h1v1h-1zM171 410h1v1h-1zM175 410h1v1h-1zM178 410h1v1h-1zM295 410h1v1h-1zM298 410h1v1h-1zM302 410h1v1h-1zM309 410h1v1h-1zM312 410h1v1h-1zM316 410h1v1h-1zM319 410h1v1h-1zM160 411h1v1h-1zM168 411h1v1h-1zM171 411h1v1h-1zM174 411h1v1h-1zM178 411h1v1h-1zM185 411h1v1h-1zM292 411h1v1h-1zM295 411h1v1h-1zM299 411h1v1h-1zM302 411h1v1h-1zM309 411h1v1h-1zM313 411h1v1h-1zM316 411h1v1h-1zM320 411h1v1h-1zM160 412h1v1h-1zM167 412h1v1h-1zM171 412h1v1h-1zM174 412h1v1h-1zM177 412h1v1h-1zM184 412h1v1h-1zM188 412h1v1h-1zM191 412h1v1h-1zM292 412h1v1h-1zM296 412h1v1h-1zM299 412h1v1h-1zM303 412h1v1h-1zM310 412h1v1h-1zM313 412h1v1h-1zM317 412h1v1h-1zM167 413h1v1h-1zM170 413h1v1h-1zM174 413h1v1h-1zM177 413h1v1h-1zM184 413h1v1h-1zM187 413h1v1h-1zM191 413h1v1h-1zM194 413h1v1h-1zM286 413h1v1h-1zM293 413h1v1h-1zM296 413h1v1h-1zM299 413h1v1h-1zM303 413h1v1h-1zM310 413h1v1h-1zM314 413h1v1h-1zM166 414h1v1h-1zM170 414h1v1h-1zM173 414h1v1h-1zM177 414h1v1h-1zM183 414h1v1h-1zM187 414h1v1h-1zM190 414h1v1h-1zM194 414h1v1h-1zM280 414h1v1h-1zM283 414h1v1h-1zM287 414h1v1h-1zM293 414h1v1h-1zM296 414h1v1h-1zM300 414h1v1h-1zM303 414h1v1h-1zM311 414h1v1h-1zM314 414h1v1h-1zM169 415h1v1h-1zM173 415h1v1h-1zM176 415h1v1h-1zM183 415h1v1h-1zM186 415h1v1h-1zM190 415h1v1h-1zM193 415h1v1h-1zM200 415h1v1h-1zM203 415h1v1h-1zM277 415h1v1h-1zM280 415h1v1h-1zM284 415h1v1h-1zM287 415h1v1h-1zM293 415h1v1h-1zM297 415h1v1h-1zM300 415h1v1h-1zM304 415h1v1h-1zM311 415h1v1h-1zM169 416h1v1h-1zM172 416h1v1h-1zM176 416h1v1h-1zM183 416h1v1h-1zM186 416h1v1h-1zM190 416h1v1h-1zM193 416h1v1h-1zM199 416h1v1h-1zM203 416h1v1h-1zM206 416h1v1h-1zM209 416h1v1h-1zM271 416h1v1h-1zM277 416h1v1h-1zM280 416h1v1h-1zM284 416h1v1h-1zM287 416h1v1h-1zM294 416h1v1h-1zM297 416h1v1h-1zM300 416h1v1h-1zM304 416h1v1h-1zM172 417h1v1h-1zM175 417h1v1h-1zM182 417h1v1h-1zM186 417h1v1h-1zM189 417h1v1h-1zM193 417h1v1h-1zM199 417h1v1h-1zM203 417h1v1h-1zM206 417h1v1h-1zM209 417h1v1h-1zM215 417h1v1h-1zM264 417h1v1h-1zM267 417h1v1h-1zM271 417h1v1h-1zM277 417h1v1h-1zM281 417h1v1h-1zM284 417h1v1h-1zM287 417h1v1h-1zM294 417h1v1h-1zM297 417h1v1h-1zM300 417h1v1h-1zM305 417h1v1h-1zM175 418h1v1h-1zM182 418h1v1h-1zM185 418h1v1h-1zM189 418h1v1h-1zM192 418h1v1h-1zM199 418h1v1h-1zM202 418h1v1h-1zM206 418h1v1h-1zM209 418h1v1h-1zM215 418h1v1h-1zM218 418h1v1h-1zM221 418h1v1h-1zM225 418h1v1h-1zM255 418h1v1h-1zM261 418h1v1h-1zM264 418h1v1h-1zM267 418h1v1h-1zM271 418h1v1h-1zM278 418h1v1h-1zM281 418h1v1h-1zM284 418h1v1h-1zM288 418h1v1h-1zM294 418h1v1h-1zM297 418h1v1h-1zM301 418h1v1h-1zM181 419h1v1h-1zM185 419h1v1h-1zM189 419h1v1h-1zM192 419h1v1h-1zM199 419h1v1h-1zM202 419h1v1h-1zM205 419h1v1h-1zM208 419h1v1h-1zM215 419h1v1h-1zM218 419h1v1h-1zM221 419h1v1h-1zM225 419h1v1h-1zM231 419h1v1h-1zM234 419h1v1h-1zM237 419h1v1h-1zM239 419h1v1h-1zM246 419h1v1h-1zM249 419h1v1h-1zM252 419h1v1h-1zM255 419h1v1h-1zM261 419h1v1h-1zM264 419h1v1h-1zM268 419h1v1h-1zM271 419h1v1h-1zM278 419h1v1h-1zM281 419h1v1h-1zM285 419h1v1h-1zM288 419h1v1h-1zM294 419h1v1h-1zM298 419h1v1h-1zM301 419h1v1h-1zM181 420h1v1h-1zM184 420h1v1h-1zM189 420h1v1h-1zM192 420h1v1h-1zM198 420h1v1h-1zM202 420h1v1h-1zM205 420h1v1h-1zM208 420h1v1h-1zM215 420h1v1h-1zM218 420h1v1h-1zM221 420h1v1h-1zM225 420h1v1h-1zM231 420h1v1h-1zM234 420h1v1h-1zM237 420h1v1h-1zM239 420h1v1h-1zM246 420h1v1h-1zM249 420h1v1h-1zM252 420h1v1h-1zM255 420h1v1h-1zM262 420h1v1h-1zM265 420h1v1h-1zM268 420h1v1h-1zM271 420h1v1h-1zM278 420h1v1h-1zM281 420h1v1h-1zM285 420h1v1h-1zM288 420h1v1h-1zM295 420h1v1h-1zM298 420h1v1h-1zM184 421h1v1h-1zM188 421h1v1h-1zM192 421h1v1h-1zM198 421h1v1h-1zM202 421h1v1h-1zM205 421h1v1h-1zM208 421h1v1h-1zM215 421h1v1h-1zM218 421h1v1h-1zM221 421h1v1h-1zM225 421h1v1h-1zM231 421h1v1h-1zM234 421h1v1h-1zM237 421h1v1h-1zM239 421h1v1h-1zM246 421h1v1h-1zM249 421h1v1h-1zM252 421h1v1h-1zM255 421h1v1h-1zM262 421h1v1h-1zM265 421h1v1h-1zM268 421h1v1h-1zM272 421h1v1h-1zM278 421h1v1h-1zM281 421h1v1h-1zM285 421h1v1h-1zM288 421h1v1h-1zM295 421h1v1h-1zM188 422h1v1h-1zM191 422h1v1h-1zM198 422h1v1h-1zM202 422h1v1h-1zM205 422h1v1h-1zM208 422h1v1h-1zM215 422h1v1h-1zM218 422h1v1h-1zM221 422h1v1h-1zM225 422h1v1h-1zM231 422h1v1h-1zM234 422h1v1h-1zM237 422h1v1h-1zM239 422h1v1h-1zM246 422h1v1h-1zM249 422h1v1h-1zM252 422h1v1h-1zM255 422h1v1h-1zM262 422h1v1h-1zM265 422h1v1h-1zM268 422h1v1h-1zM272 422h1v1h-1zM278 422h1v1h-1zM282 422h1v1h-1zM285 422h1v1h-1zM289 422h1v1h-1zM191 423h1v1h-1zM198 423h1v1h-1zM201 423h1v1h-1zM205 423h1v1h-1zM208 423h1v1h-1zM214 423h1v1h-1zM217 423h1v1h-1zM220 423h1v1h-1zM225 423h1v1h-1zM231 423h1v1h-1zM234 423h1v1h-1zM237 423h1v1h-1zM239 423h1v1h-1zM246 423h1v1h-1zM249 423h1v1h-1zM252 423h1v1h-1zM255 423h1v1h-1zM262 423h1v1h-1zM265 423h1v1h-1zM268 423h1v1h-1zM272 423h1v1h-1zM279 423h1v1h-1zM282 423h1v1h-1zM286 423h1v1h-1zM197 424h1v1h-1zM201 424h1v1h-1zM204 424h1v1h-1zM208 424h1v1h-1zM214 424h1v1h-1zM217 424h1v1h-1zM220 424h1v1h-1zM224 424h1v1h-1zM230 424h1v1h-1zM234 424h1v1h-1zM237 424h1v1h-1zM239 424h1v1h-1zM246 424h1v1h-1zM249 424h1v1h-1zM253 424h1v1h-1zM256 424h1v1h-1zM262 424h1v1h-1zM265 424h1v1h-1zM268 424h1v1h-1zM272 424h1v1h-1zM279 424h1v1h-1zM282 424h1v1h-1zM201 425h1v1h-1zM204 425h1v1h-1zM207 425h1v1h-1zM214 425h1v1h-1zM217 425h1v1h-1zM220 425h1v1h-1zM224 425h1v1h-1zM230 425h1v1h-1zM234 425h1v1h-1zM237 425h1v1h-1zM239 425h1v1h-1zM246 425h1v1h-1zM249 425h1v1h-1zM253 425h1v1h-1zM256 425h1v1h-1zM262 425h1v1h-1zM266 425h1v1h-1zM269 425h1v1h-1zM272 425h1v1h-1zM279 425h1v1h-1zM204 426h1v1h-1zM207 426h1v1h-1zM214 426h1v1h-1zM217 426h1v1h-1zM220 426h1v1h-1zM224 426h1v1h-1zM230 426h1v1h-1zM234 426h1v1h-1zM237 426h1v1h-1zM239 426h1v1h-1zM246 426h1v1h-1zM249 426h1v1h-1zM253 426h1v1h-1zM256 426h1v1h-1zM263 426h1v1h-1zM266 426h1v1h-1zM269 426h1v1h-1zM272 426h1v1h-1zM214 427h1v1h-1zM217 427h1v1h-1zM220 427h1v1h-1zM224 427h1v1h-1zM230 427h1v1h-1zM234 427h1v1h-1zM237 427h1v1h-1zM239 427h1v1h-1zM246 427h1v1h-1zM249 427h1v1h-1zM253 427h1v1h-1zM256 427h1v1h-1zM263 427h1v1h-1zM266 427h1v1h-1zM269 427h1v1h-1zM217 428h1v1h-1zM220 428h1v1h-1zM224 428h1v1h-1zM230 428h1v1h-1zM234 428h1v1h-1zM237 428h1v1h-1zM239 428h1v1h-1zM246 428h1v1h-1zM249 428h1v1h-1zM253 428h1v1h-1zM256 428h1v1h-1zM230 429h1v1h-1zM234 429h1v1h-1zM237 429h1v1h-1zM239 429h1v1h-1zM246 429h1v1h-1zM249 429h1v1h-1z"/>
<path fill="#00ff00" d="M106 71h1v1h-1zM110 71h1v1h-1zM107 72h3v1h-3zM106 73h1v1h-1zM110 73h1v1h-1zM106 74h1v1h-1zM110 74h1v1h-1zM106 75h1v1h-1zM110 75h1v1h-1zM107 76h3v1h-3zM108 77h1v1h-1zM106 78h5v1h-5zM108 79h1v1h-1zM378 80h1v1h-1zM392 80h1v1h-1zM379 81h1v1h-1zM391 81h1v1h-1zM380 82h11v1h-11zM382 83h1v1h-1zM388 83h1v1h-1zM382 84h1v1h-1zM388 84h1v1h-1zM382 85h1v1h-1zM388 85h1v1h-1zM382 86h1v1h-1zM388 86h1v1h-1zM382 87h1v1h-1zM388 87h1v1h-1zM382 88h1v1h-1zM388 88h1v1h-1zM382 89h1v1h-1zM388 89h1v1h-1zM382 90h1v1h-1zM388 90h1v1h-1zM382 91h1v1h-1zM388 91h1v1h-1zM382 92h1v1h-1zM388 92h1v1h-1zM382 93h1v1h-1zM388 93h1v1h-1zM380 94h11v1h-11zM379 95h1v1h-1zM391 95h1v1h-1zM378 96h1v1h-1zM392 96h1v1h-1zM401 104h1v1h-1zM405 104h1v1h-1zM402 105h3v1h-3zM401 106h1v1h-1zM405 106h1v1h-1zM401 107h1v1h-1zM405 107h1v1h-1zM401 108h1v1h-1zM405 108h1v1h-1zM402 109h3v1h-3zM403 110h1v1h-1zM401 111h5v1h-5zM403 112h1v1h-1zM118 116h1v1h-1zM124 116h1v1h-1zM119 117h1v1h-1zM123 117h1v1h-1zM119 118h1v1h-1zM121 118h1v1h-1zM123 118h1v1h-1zM119 119h5v1h-5zM119 120h1v1h-1zM121 120h1v1h-1zM123 120h1v1h-1zM118 121h1v1h-1zM121 121h1v1h-1zM124 121h1v1h-1zM120 122h3v1h-3zM120 123h1v1h-1zM122 123h1v1h-1zM121 124h1v1h-1zM264 127h1v1h-1zM264 128h1v1h-1zM265 129h1v1h-1zM265 130h1v1h-1zM265 131h1v1h-1zM103 132h1v1h-1zM111 132h1v1h-1zM266 132h1v1h-1zM102 133h2v1h-2zM110 133h2v1h-2zM266 133h1v1h-1zM101 134h1v1h-1zM103 134h1v1h-1zM109 134h1v1h-1zM111 134h1v1h-1zM266 134h1v1h-1zM103 135h1v1h-1zM111 135h1v1h-1zM267 135h1v1h-1zM103 136h1v1h-1zM111 136h1v1h-1zM267 136h1v1h-1zM103 137h1v1h-1zM111 137h1v1h-1zM267 137h1v1h-1zM103 138h1v1h-1zM111 138h1v1h-1zM267 138h1v1h-1zM103 139h1v1h-1zM111 139h1v1h-1zM268 139h1v1h-1zM101 140h5v1h-5zM109 140h5v1h-5zM268 140h1v1h-1zM268 141h1v1h-1zM269 142h1v1h-1zM269 143h1v1h-1zM269 144h1v1h-1zM270 145h1v1h-1zM270 146h1v1h-1zM270 147h1v1h-1zM271 148h1v1h-1zM271 149h1v1h-1zM271 150h1v1h-1zM272 151h1v1h-1zM272 152h1v1h-1zM272 153h1v1h-1zM273 154h1v1h-1zM273 155h1v1h-1zM273 156h1v1h-1zM630 156h3v1h-3zM274 157h1v1h-1zM631 157h2v1h-2zM274 158h1v1h-1zM630 158h1v1h-1zM632 158h1v1h-1zM274 159h1v1h-1zM625 159h1v1h-1zM629 159h1v1h-1zM274 160h1v1h-1zM626 160h1v1h-1zM628 160h1v1h-1zM275 161h1v1h-1zM627 161h1v1h-1zM275 162h1v1h-1zM359 162h1v1h-1zM371 162h1v1h-1zM626 162h1v1h-1zM628 162h1v1h-1zM275 163h1v1h-1zM360 163h1v1h-1zM370 163h1v1h-1zM625 163h1v1h-1zM629 163h1v1h-1zM276 164h1v1h-1zM361 164h1v1h-1zM369 164h1v1h-1zM624 164h1v1h-1zM276 165h1v1h-1zM361 165h1v1h-1zM369 165h1v1h-1zM276 166h1v1h-1zM361 166h1v1h-1zM365 166h1v1h-1zM369 166h1v1h-1zM277 167h1v1h-1zM361 167h1v1h-1zM365 167h1v1h-1zM369 167h1v1h-1zM277 168h1v1h-1zM361 168h9v1h-9zM277 169h1v1h-1zM361 169h1v1h-1zM365 169h1v1h-1zM369 169h1v1h-1zM278 170h1v1h-1zM361 170h1v1h-1zM365 170h1v1h-1zM369 170h1v1h-1zM278 171h1v1h-1zM360 171h1v1h-1zM365 171h1v1h-1zM370 171h1v1h-1zM278 172h1v1h-1zM359 172h1v1h-1zM365 172h1v1h-1zM371 172h1v1h-1zM279 173h1v1h-1zM365 173h1v1h-1zM279 174h1v1h-1zM364 174h3v1h-3zM279 175h1v1h-1zM363 175h1v1h-1zM367 175h1v1h-1zM280 176h1v1h-1zM363 176h1v1h-1zM367 176h1v1h-1zM280 177h1v1h-1zM363 177h1v1h-1zM367 177h1v1h-1zM280 178h1v1h-1zM364 178h3v1h-3zM281 179h1v1h-1zM281 180h1v1h-1zM281 181h1v1h-1zM344 181h1v1h-1zM281 182h1v1h-1zM343 182h3v1h-3zM282 183h1v1h-1zM344 183h1v1h-1zM282 184h1v1h-1zM33 185h5v1h-5zM282 185h1v1h-1zM32 186h1v1h-1zM38 186h1v1h-1zM283 186h1v1h-1zM31 187h1v1h-1zM39 187h1v1h-1zM283 187h1v1h-1zM31 188h1v1h-1zM39 188h1v1h-1zM283 188h1v1h-1zM338 188h1v1h-1zM31 189h1v1h-1zM39 189h1v1h-1zM284 189h1v1h-1zM32 190h1v1h-1zM38 190h1v1h-1zM284 190h1v1h-1zM27 191h7v1h-7zM37 191h7v1h-7zM284 191h1v1h-1zM285 192h1v1h-1zM336 192h1v1h-1zM285 193h1v1h-1zM285 194h1v1h-1zM400 194h5v1h-5zM27 195h17v1h-17zM286 195h1v1h-1zM404 195h1v1h-1zM286 196h1v1h-1zM334 196h1v1h-1zM404 196h1v1h-1zM625 196h2v1h-2zM630 196h2v1h-2zM286 197h1v1h-1zM403 197h1v1h-1zM624 197h1v1h-1zM627 197h1v1h-1zM629 197h1v1h-1zM632 197h1v1h-1zM287 198h1v1h-1zM402 198h1v1h-1zM624 198h1v1h-1zM627 198h1v1h-1zM629 198h1v1h-1zM632 198h1v1h-1zM287 199h1v1h-1zM401 199h1v1h-1zM625 199h1v1h-1zM627 199h1v1h-1zM629 199h1v1h-1zM631 199h1v1h-1zM287 200h1v1h-1zM331 200h1v1h-1zM400 200h1v1h-1zM628 200h1v1h-1zM287 201h1v1h-1zM400 201h1v1h-1zM628 201h1v1h-1zM288 202h1v1h-1zM400 202h1v1h-1zM628 202h1v1h-1zM288 203h1v1h-1zM628 203h1v1h-1zM288 204h1v1h-1zM329 204h1v1h-1zM628 204h1v1h-1zM289 205h1v1h-1zM289 206h1v1h-1zM289 207h1v1h-1zM290 208h1v1h-1zM327 208h1v1h-1zM290 209h1v1h-1zM290 210h1v1h-1zM291 211h1v1h-1zM291 212h1v1h-1zM325 212h1v1h-1zM291 213h1v1h-1zM292 214h1v1h-1zM292 215h1v1h-1zM292 216h1v1h-1zM323 216h1v1h-1zM293 217h1v1h-1zM293 218h1v1h-1zM293 219h1v1h-1zM294 220h1v1h-1zM321 220h1v1h-1zM294 221h1v1h-1zM294 222h1v1h-1zM294 223h1v1h-1zM295 224h1v1h-1zM318 224h1v1h-1zM295 225h1v1h-1zM295 226h1v1h-1zM296 227h1v1h-1zM296 228h1v1h-1zM316 228h1v1h-1zM296 229h1v1h-1zM297 230h1v1h-1zM297 231h1v1h-1zM297 232h1v1h-1zM314 232h1v1h-1zM298 233h1v1h-1zM298 234h1v1h-1zM298 235h1v1h-1zM299 236h1v1h-1zM312 236h1v1h-1zM624 236h1v1h-1zM626 236h1v1h-1zM628 236h1v1h-1zM299 237h1v1h-1zM625 237h1v1h-1zM627 237h1v1h-1zM629 237h1v1h-1zM631 237h1v1h-1zM299 238h1v1h-1zM625 238h1v1h-1zM627 238h1v1h-1zM629 238h3v1h-3zM300 239h1v1h-1zM625 239h1v1h-1zM627 239h1v1h-1zM629 239h1v1h-1zM631 239h1v1h-1zM300 240h1v1h-1zM310 240h1v1h-1zM625 240h1v1h-1zM627 240h1v1h-1zM629 240h1v1h-1zM631 240h1v1h-1zM300 241h1v1h-1zM625 241h1v1h-1zM627 241h1v1h-1zM629 241h1v1h-1zM631 241h1v1h-1zM301 242h1v1h-1zM625 242h1v1h-1zM627 242h1v1h-1zM629 242h1v1h-1zM631 242h1v1h-1zM301 243h1v1h-1zM625 243h1v1h-1zM627 243h1v1h-1zM630 243h1v1h-1zM301 244h1v1h-1zM308 244h1v1h-1zM629 244h1v1h-1zM631 244h1v1h-1zM301 245h1v1h-1zM302 246h1v1h-1zM302 247h1v1h-1zM302 248h1v1h-1zM306 248h1v1h-1zM303 249h1v1h-1zM303 250h1v1h-1zM303 251h1v1h-1zM303 252h2v1h-2zM304 253h1v1h-1zM304 254h1v1h-1zM305 255h1v1h-1zM301 256h1v1h-1zM305 256h1v1h-1zM305 257h1v1h-1zM306 258h1v1h-1zM306 259h1v1h-1zM299 260h1v1h-1zM306 260h1v1h-1zM307 261h1v1h-1zM307 262h1v1h-1zM307 263h1v1h-1zM297 264h1v1h-1zM307 264h1v1h-1zM308 265h1v1h-1zM308 266h1v1h-1zM308 267h1v1h-1zM295 268h1v1h-1zM309 268h1v1h-1zM309 269h1v1h-1zM309 270h1v1h-1zM310 271h1v1h-1zM293 272h1v1h-1zM310 272h1v1h-1zM310 273h1v1h-1zM311 274h1v1h-1zM311 275h1v1h-1zM290 276h1v1h-1zM311 276h1v1h-1zM312 277h1v1h-1zM312 278h1v1h-1zM312 279h1v1h-1zM288 280h1v1h-1zM313 280h1v1h-1zM313 281h1v1h-1zM313 282h1v1h-1zM314 283h1v1h-1zM286 284h1v1h-1zM314 284h1v1h-1zM314 285h1v1h-1zM314 286h1v1h-1zM397 286h1v1h-1zM401 286h1v1h-1zM626 286h1v1h-1zM630 286h1v1h-1zM315 287h1v1h-1zM398 287h3v1h-3zM627 287h3v1h-3zM284 288h1v1h-1zM315 288h1v1h-1zM397 288h1v1h-1zM401 288h1v1h-1zM626 288h1v1h-1zM630 288h1v1h-1zM315 289h1v1h-1zM397 289h1v1h-1zM401 289h1v1h-1zM626 289h1v1h-1zM630 289h1v1h-1zM316 290h1v1h-1zM397 290h1v1h-1zM401 290h1v1h-1zM626 290h1v1h-1zM630 290h1v1h-1zM316 291h1v1h-1zM398 291h3v1h-3zM627 291h3v1h-3zM282 292h1v1h-1zM316 292h1v1h-1zM399 292h1v1h-1zM628 292h1v1h-1zM317 293h1v1h-1zM397 293h5v1h-5zM626 293h5v1h-5zM317 294h1v1h-1zM399 294h1v1h-1zM628 294h1v1h-1zM317 295h1v1h-1zM280 296h1v1h-1zM318 296h1v1h-1zM318 297h1v1h-1zM318 298h1v1h-1zM319 299h1v1h-1zM278 300h1v1h-1zM319 300h1v1h-1zM319 301h1v1h-1zM320 302h1v1h-1zM320 303h1v1h-1zM275 304h1v1h-1zM320 304h1v1h-1zM321 305h1v1h-1zM321 306h1v1h-1zM321 307h1v1h-1zM273 308h1v1h-1zM321 308h1v1h-1zM322 309h1v1h-1zM322 310h1v1h-1zM322 311h1v1h-1zM271 312h1v1h-1zM323 312h1v1h-1zM323 313h1v1h-1zM323 314h1v1h-1zM324 315h1v1h-1zM269 316h1v1h-1zM324 316h1v1h-1zM327 319h1v1h-1zM267 320h1v1h-1zM326 320h3v1h-3zM327 321h1v1h-1zM265 324h1v1h-1zM343 326h1v1h-1zM351 326h1v1h-1zM344 327h1v1h-1zM350 327h1v1h-1zM262 328h1v1h-1zM345 328h5v1h-5zM344 329h1v1h-1zM350 329h1v1h-1zM343 330h1v1h-1zM351 330h1v1h-1zM343 331h1v1h-1zM351 331h1v1h-1zM260 332h1v1h-1zM343 332h1v1h-1zM351 332h1v1h-1zM343 333h1v1h-1zM351 333h1v1h-1zM343 334h1v1h-1zM351 334h1v1h-1zM344 335h1v1h-1zM350 335h1v1h-1zM258 336h1v1h-1zM345 336h5v1h-5zM625 336h1v1h-1zM631 336h1v1h-1zM347 337h1v1h-1zM626 337h1v1h-1zM630 337h1v1h-1zM347 338h1v1h-1zM626 338h1v1h-1zM628 338h1v1h-1zM630 338h1v1h-1zM347 339h1v1h-1zM626 339h5v1h-5zM256 340h1v1h-1zM343 340h9v1h-9zM626 340h1v1h-1zM628 340h1v1h-1zM630 340h1v1h-1zM347 341h1v1h-1zM625 341h1v1h-1zM628 341h1v1h-1zM631 341h1v1h-1zM347 342h1v1h-1zM627 342h3v1h-3zM627 343h1v1h-1zM629 343h1v1h-1zM254 344h1v1h-1zM628 344h1v1h-1zM252 348h1v1h-1zM177 391h1v1h-1zM181 391h1v1h-1zM178 392h3v1h-3zM177 393h1v1h-1zM181 393h1v1h-1zM177 394h1v1h-1zM181 394h1v1h-1zM177 395h1v1h-1zM181 395h1v1h-1zM178 396h3v1h-3zM179 397h1v1h-1zM177 398h5v1h-5zM179 399h1v1h-1zM202 399h3v1h-3zM201 400h1v1h-1zM205 400h1v1h-1zM205 401h1v1h-1zM205 402h1v1h-1zM203 403h2v1h-2zM205 404h1v1h-1zM205 405h1v1h-1zM201 406h1v1h-1zM205 406h1v1h-1zM202 407h3v1h-3zM293 432h1v1h-1zM299 432h1v1h-1zM305 432h1v1h-1zM292 433h2v1h-2zM298 433h2v1h-2zM304 433h1v1h-1zM292 434h1v1h-1zM294 434h1v1h-1zM298 434h1v1h-1zM300 434h1v1h-1zM304 434h1v1h-1zM291 435h1v1h-1zM294 435h1v1h-1zM297 435h1v1h-1zM300 435h1v1h-1zM303 435h1v1h-1zM290 436h1v1h-1zM294 436h1v1h-1zM296 436h1v1h-1zM300 436h1v1h-1zM302 436h1v1h-1zM290 437h1v1h-1zM295 437h2v1h-2zM301 437h2v1h-2zM289 438h1v1h-1zM295 438h1v1h-1zM301 438h1v1h-1zM267 442h1v1h-1zM273 442h1v1h-1zM293 442h1v1h-1zM299 442h1v1h-1zM305 442h1v1h-1zM268 443h1v1h-1zM272 443h1v1h-1zM292 443h2v1h-2zM298 443h2v1h-2zM304 443h1v1h-1zM268 444h1v1h-1zM270 444h1v1h-1zM272 444h1v1h-1zM292 444h1v1h-1zM294 444h1v1h-1zM298 444h1v1h-1zM300 444h1v1h-1zM304 444h1v1h-1zM268 445h5v1h-5zM291 445h1v1h-1zM294 445h1v1h-1zM297 445h1v1h-1zM300 445h1v1h-1zM303 445h1v1h-1zM268 446h1v1h-1zM270 446h1v1h-1zM272 446h1v1h-1zM290 446h1v1h-1zM294 446h1v1h-1zM296 446h1v1h-1zM300 446h1v1h-1zM302 446h1v1h-1zM267 447h1v1h-1zM270 447h1v1h-1zM273 447h1v1h-1zM290 447h1v1h-1zM295 447h2v1h-2zM301 447h2v1h-2zM269 448h3v1h-3zM289 448h1v1h-1zM295 448h1v1h-1zM301 448h1v1h-1zM269 449h1v1h-1zM271 449h1v1h-1zM270 450h1v1h-1z"/>
<path fill="#ff0000" d="M207 28h3v1h-3zM205 29h2v1h-2zM210 29h2v1h-2zM179 30h5v1h-5zM205 30h1v1h-1zM211 30h1v1h-1zM178 31h1v1h-1zM184 31h1v1h-1zM204 31h1v1h-1zM212 31h1v1h-1zM177 32h1v1h-1zM185 32h1v1h-1zM204 32h1v1h-1zM208 32h1v1h-1zM212 32h1v1h-1zM176 33h1v1h-1zM186 33h1v1h-1zM204 33h1v1h-1zM212 33h1v1h-1zM175 34h1v1h-1zM187 34h1v1h-1zM205 34h1v1h-1zM211 34h1v1h-1zM175 35h1v1h-1zM187 35h1v1h-1zM205 35h2v1h-2zM210 35h2v1h-2zM175 36h1v1h-1zM187 36h1v1h-1zM207 36h3v1h-3zM175 37h1v1h-1zM187 37h1v1h-1zM175 38h1v1h-1zM187 38h1v1h-1zM176 39h1v1h-1zM186 39h1v1h-1zM177 40h1v1h-1zM185 40h1v1h-1zM177 41h1v1h-1zM185 41h1v1h-1zM173 42h1v1h-1zM177 42h1v1h-1zM185 42h1v1h-1zM174 43h1v1h-1zM176 43h1v1h-1zM186 43h1v1h-1zM175 44h1v1h-1zM187 44h1v1h-1zM188 45h1v1h-1zM189 46h1v1h-1zM274 71h3v1h-3zM273 72h1v1h-1zM277 72h1v1h-1zM273 73h1v1h-1zM277 73h1v1h-1zM273 74h1v1h-1zM277 74h1v1h-1zM274 75h4v1h-4zM277 76h1v1h-1zM277 77h1v1h-1zM273 78h1v1h-1zM277 78h1v1h-1zM274 79h3v1h-3zM302 79h1v1h-1zM296 80h2v1h-2zM301 80h1v1h-1zM298 81h1v1h-1zM301 81h1v1h-1zM298 82h1v1h-1zM301 82h1v1h-1zM297 83h1v1h-1zM301 83h1v1h-1zM297 84h1v1h-1zM301 84h1v1h-1zM296 85h1v1h-1zM301 85h1v1h-1zM296 86h8v1h-8zM301 87h1v1h-1zM277 91h1v1h-1zM276 92h1v1h-1zM266 93h2v1h-2zM275 93h1v1h-1zM268 94h1v1h-1zM275 94h1v1h-1zM269 95h1v1h-1zM275 95h1v1h-1zM269 96h1v1h-1zM275 96h1v1h-1zM269 97h1v1h-1zM275 97h1v1h-1zM268 98h1v1h-1zM275 98h1v1h-1zM268 99h1v1h-1zM275 99h1v1h-1zM267 100h1v1h-1zM275 100h1v1h-1zM267 101h1v1h-1zM275 101h1v1h-1zM266 102h1v1h-1zM275 102h1v1h-1zM266 103h1v1h-1zM275 103h1v1h-1zM265 104h1v1h-1zM275 104h1v1h-1zM265 105h15v1h-15zM275 106h1v1h-1zM275 107h1v1h-1zM265 121h1v1h-1zM264 122h3v1h-3zM265 123h1v1h-1zM627 138h3v1h-3zM626 139h1v1h-1zM630 139h1v1h-1zM626 140h1v1h-1zM630 140h1v1h-1zM624 141h4v1h-4zM629 141h4v1h-4zM624 143h9v1h-9zM624 176h1v1h-1zM632 176h1v1h-1zM625 177h1v1h-1zM631 177h1v1h-1zM626 178h1v1h-1zM630 178h1v1h-1zM626 179h1v1h-1zM630 179h1v1h-1zM624 180h9v1h-9zM626 181h1v1h-1zM630 181h1v1h-1zM626 182h1v1h-1zM630 182h1v1h-1zM625 183h1v1h-1zM631 183h1v1h-1zM340 184h1v1h-1zM624 184h1v1h-1zM632 184h1v1h-1zM340 185h1v1h-1zM339 186h1v1h-1zM339 187h1v1h-1zM339 188h1v1h-1zM338 189h2v1h-2zM338 190h1v1h-1zM338 191h1v1h-1zM338 192h1v1h-1zM337 193h1v1h-1zM337 194h1v1h-1zM337 195h1v1h-1zM336 196h2v1h-2zM336 197h1v1h-1zM336 198h1v1h-1zM335 199h2v1h-2zM335 200h1v1h-1zM335 201h1v1h-1zM334 202h2v1h-2zM334 203h2v1h-2zM334 204h1v1h-1zM333 205h2v1h-2zM333 206h2v1h-2zM333 207h1v1h-1zM333 208h1v1h-1zM332 209h2v1h-2zM332 210h2v1h-2zM332 211h1v1h-1zM331 212h2v1h-2zM331 213h2v1h-2zM331 214h1v1h-1zM330 215h2v1h-2zM330 216h2v1h-2zM625 216h1v1h-1zM632 216h1v1h-1zM330 217h2v1h-2zM626 217h6v1h-6zM329 218h2v1h-2zM627 218h1v1h-1zM630 218h1v1h-1zM329 219h2v1h-2zM627 219h1v1h-1zM630 219h1v1h-1zM329 220h2v1h-2zM627 220h1v1h-1zM630 220h1v1h-1zM328 221h2v1h-2zM627 221h1v1h-1zM630 221h1v1h-1zM328 222h2v1h-2zM627 222h1v1h-1zM630 222h1v1h-1zM328 223h2v1h-2zM626 223h6v1h-6zM328 224h2v1h-2zM625 224h1v1h-1zM632 224h1v1h-1zM327 225h2v1h-2zM327 226h2v1h-2zM327 227h2v1h-2zM326 228h1v1h-1zM328 228h1v1h-1zM326 229h2v1h-2zM326 230h2v1h-2zM325 231h1v1h-1zM327 231h1v1h-1zM325 232h2v1h-2zM325 233h2v1h-2zM324 234h1v1h-1zM326 234h1v1h-1zM324 235h1v1h-1zM326 235h1v1h-1zM324 236h2v1h-2zM323 237h1v1h-1zM325 237h1v1h-1zM323 238h1v1h-1zM325 238h1v1h-1zM323 239h2v1h-2zM323 240h2v1h-2zM322 241h1v1h-1zM324 241h1v1h-1zM322 242h1v1h-1zM324 242h1v1h-1zM322 243h2v1h-2zM321 244h1v1h-1zM323 244h1v1h-1zM321 245h1v1h-1zM323 245h1v1h-1zM321 246h2v1h-2zM320 247h1v1h-1zM322 247h1v1h-1zM320 248h1v1h-1zM322 248h1v1h-1zM320 249h1v1h-1zM322 249h1v1h-1zM319 250h1v1h-1zM321 250h1v1h-1zM319 251h1v1h-1zM321 251h1v1h-1zM319 252h1v1h-1zM321 252h1v1h-1zM318 253h1v1h-1zM320 253h1v1h-1zM318 254h1v1h-1zM320 254h1v1h-1zM74 255h3v1h-3zM318 255h1v1h-1zM320 255h1v1h-1zM75 256h2v1h-2zM318 256h1v1h-1zM320 256h1v1h-1zM74 257h1v1h-1zM76 257h1v1h-1zM317 257h1v1h-1zM319 257h1v1h-1zM70 258h2v1h-2zM73 258h1v1h-1zM317 258h1v1h-1zM319 258h1v1h-1zM69 259h1v1h-1zM72 259h1v1h-1zM317 259h1v1h-1zM319 259h1v1h-1zM68 260h1v1h-1zM73 260h1v1h-1zM316 260h1v1h-1zM318 260h1v1h-1zM68 261h1v1h-1zM73 261h1v1h-1zM316 261h1v1h-1zM318 261h1v1h-1zM69 262h1v1h-1zM72 262h1v1h-1zM316 262h1v1h-1zM318 262h1v1h-1zM70 263h2v1h-2zM315 263h1v1h-1zM318 263h1v1h-1zM315 264h1v1h-1zM317 264h1v1h-1zM315 265h1v1h-1zM317 265h1v1h-1zM314 266h1v1h-1zM317 266h1v1h-1zM627 266h3v1h-3zM314 267h1v1h-1zM316 267h1v1h-1zM625 267h2v1h-2zM630 267h2v1h-2zM314 268h1v1h-1zM316 268h1v1h-1zM625 268h1v1h-1zM631 268h1v1h-1zM313 269h1v1h-1zM316 269h1v1h-1zM624 269h1v1h-1zM632 269h1v1h-1zM313 270h1v1h-1zM316 270h1v1h-1zM624 270h1v1h-1zM628 270h1v1h-1zM632 270h1v1h-1zM313 271h1v1h-1zM315 271h1v1h-1zM624 271h1v1h-1zM632 271h1v1h-1zM313 272h1v1h-1zM315 272h1v1h-1zM625 272h1v1h-1zM631 272h1v1h-1zM312 273h1v1h-1zM315 273h1v1h-1zM625 273h2v1h-2zM630 273h2v1h-2zM312 274h1v1h-1zM314 274h1v1h-1zM627 274h3v1h-3zM312 275h1v1h-1zM314 275h1v1h-1zM76 276h1v1h-1zM314 276h1v1h-1zM75 277h2v1h-2zM311 277h1v1h-1zM314 277h1v1h-1zM74 278h1v1h-1zM76 278h1v1h-1zM311 278h1v1h-1zM313 278h1v1h-1zM76 279h1v1h-1zM310 279h1v1h-1zM313 279h1v1h-1zM76 280h1v1h-1zM310 280h1v1h-1zM76 281h1v1h-1zM310 281h1v1h-1zM312 281h1v1h-1zM437 281h3v1h-3zM447 281h3v1h-3zM76 282h1v1h-1zM309 282h1v1h-1zM312 282h1v1h-1zM436 282h1v1h-1zM440 282h1v1h-1zM446 282h1v1h-1zM450 282h1v1h-1zM76 283h1v1h-1zM309 283h1v1h-1zM312 283h1v1h-1zM435 283h1v1h-1zM441 283h1v1h-1zM445 283h1v1h-1zM451 283h1v1h-1zM74 284h5v1h-5zM309 284h1v1h-1zM312 284h1v1h-1zM435 284h1v1h-1zM441 284h1v1h-1zM445 284h1v1h-1zM451 284h1v1h-1zM308 285h1v1h-1zM311 285h1v1h-1zM435 285h1v1h-1zM441 285h1v1h-1zM445 285h1v1h-1zM451 285h1v1h-1zM308 286h1v1h-1zM311 286h1v1h-1zM436 286h1v1h-1zM442 286h1v1h-1zM444 286h1v1h-1zM450 286h1v1h-1zM308 287h1v1h-1zM311 287h1v1h-1zM437 287h1v1h-1zM442 287h1v1h-1zM444 287h1v1h-1zM449 287h1v1h-1zM308 288h1v1h-1zM310 288h1v1h-1zM442 288h1v1h-1zM444 288h1v1h-1zM307 289h1v1h-1zM310 289h1v1h-1zM442 289h1v1h-1zM444 289h1v1h-1zM307 290h1v1h-1zM310 290h1v1h-1zM443 290h1v1h-1zM307 291h1v1h-1zM310 291h1v1h-1zM443 291h1v1h-1zM306 292h1v1h-1zM309 292h1v1h-1zM443 292h1v1h-1zM306 293h1v1h-1zM309 293h1v1h-1zM443 293h1v1h-1zM306 294h1v1h-1zM309 294h1v1h-1zM443 294h1v1h-1zM305 295h1v1h-1zM308 295h1v1h-1zM443 295h1v1h-1zM305 296h1v1h-1zM308 296h1v1h-1zM443 296h1v1h-1zM305 297h1v1h-1zM308 297h1v1h-1zM443 297h1v1h-1zM304 298h1v1h-1zM308 298h1v1h-1zM304 299h1v1h-1zM307 299h1v1h-1zM304 300h1v1h-1zM307 300h1v1h-1zM303 301h1v1h-1zM307 301h1v1h-1zM303 302h1v1h-1zM307 302h1v1h-1zM303 303h1v1h-1zM306 303h1v1h-1zM303 304h1v1h-1zM306 304h1v1h-1zM302 305h1v1h-1zM306 305h1v1h-1zM302 306h1v1h-1zM305 306h1v1h-1zM630 306h3v1h-3zM302 307h1v1h-1zM305 307h1v1h-1zM631 307h2v1h-2zM301 308h1v1h-1zM305 308h1v1h-1zM630 308h1v1h-1zM632 308h1v1h-1zM301 309h1v1h-1zM305 309h1v1h-1zM626 309h2v1h-2zM629 309h1v1h-1zM301 310h1v1h-1zM304 310h1v1h-1zM625 310h1v1h-1zM628 310h1v1h-1zM300 311h1v1h-1zM304 311h1v1h-1zM437 311h3v1h-3zM624 311h1v1h-1zM629 311h1v1h-1zM300 312h1v1h-1zM304 312h1v1h-1zM438 312h2v1h-2zM624 312h1v1h-1zM629 312h1v1h-1zM300 313h1v1h-1zM303 313h1v1h-1zM437 313h1v1h-1zM439 313h1v1h-1zM625 313h1v1h-1zM628 313h1v1h-1zM299 314h1v1h-1zM303 314h1v1h-1zM433 314h2v1h-2zM436 314h1v1h-1zM626 314h2v1h-2zM299 315h1v1h-1zM303 315h1v1h-1zM432 315h1v1h-1zM435 315h1v1h-1zM299 316h1v1h-1zM303 316h1v1h-1zM431 316h1v1h-1zM436 316h1v1h-1zM631 316h1v1h-1zM298 317h1v1h-1zM302 317h1v1h-1zM431 317h1v1h-1zM436 317h1v1h-1zM625 317h2v1h-2zM630 317h1v1h-1zM298 318h1v1h-1zM302 318h1v1h-1zM432 318h1v1h-1zM435 318h1v1h-1zM627 318h1v1h-1zM630 318h1v1h-1zM298 319h1v1h-1zM302 319h1v1h-1zM433 319h2v1h-2zM627 319h1v1h-1zM630 319h1v1h-1zM298 320h1v1h-1zM301 320h1v1h-1zM626 320h1v1h-1zM630 320h1v1h-1zM297 321h1v1h-1zM301 321h1v1h-1zM626 321h1v1h-1zM630 321h1v1h-1zM297 322h1v1h-1zM301 322h1v1h-1zM625 322h1v1h-1zM630 322h1v1h-1zM297 323h1v1h-1zM301 323h1v1h-1zM625 323h8v1h-8zM296 324h1v1h-1zM300 324h1v1h-1zM630 324h1v1h-1zM296 325h1v1h-1zM300 325h1v1h-1zM296 326h1v1h-1zM300 326h1v1h-1zM295 327h1v1h-1zM299 327h1v1h-1zM295 328h1v1h-1zM299 328h1v1h-1zM295 329h1v1h-1zM299 329h1v1h-1zM294 330h1v1h-1zM299 330h1v1h-1zM294 331h1v1h-1zM298 331h1v1h-1zM294 332h1v1h-1zM298 332h1v1h-1zM293 333h1v1h-1zM298 333h1v1h-1zM293 334h1v1h-1zM297 334h1v1h-1zM293 335h1v1h-1zM297 335h1v1h-1zM293 336h1v1h-1zM297 336h1v1h-1zM292 337h1v1h-1zM297 337h1v1h-1zM292 338h1v1h-1zM296 338h1v1h-1zM369 338h5v1h-5zM292 339h1v1h-1zM369 339h1v1h-1zM291 340h1v1h-1zM369 340h1v1h-1zM369 341h1v1h-1zM298 342h1v1h-1zM369 342h4v1h-4zM297 343h3v1h-3zM373 343h1v1h-1zM298 344h1v1h-1zM373 344h1v1h-1zM369 345h1v1h-1zM373 345h1v1h-1zM370 346h3v1h-3zM281 350h1v1h-1zM280 351h3v1h-3zM316 351h5v1h-5zM281 352h1v1h-1zM314 352h2v1h-2zM321 352h2v1h-2zM313 353h1v1h-1zM323 353h1v1h-1zM312 354h1v1h-1zM324 354h1v1h-1zM356 354h3v1h-3zM311 355h1v1h-1zM325 355h1v1h-1zM354 355h2v1h-2zM359 355h2v1h-2zM311 356h1v1h-1zM325 356h1v1h-1zM354 356h1v1h-1zM360 356h1v1h-1zM310 357h1v1h-1zM326 357h1v1h-1zM353 357h1v1h-1zM361 357h1v1h-1zM310 358h1v1h-1zM326 358h1v1h-1zM353 358h1v1h-1zM357 358h1v1h-1zM361 358h1v1h-1zM310 359h1v1h-1zM318 359h1v1h-1zM326 359h1v1h-1zM353 359h1v1h-1zM361 359h1v1h-1zM310 360h1v1h-1zM326 360h1v1h-1zM354 360h1v1h-1zM360 360h1v1h-1zM310 361h1v1h-1zM326 361h1v1h-1zM354 361h2v1h-2zM359 361h2v1h-2zM311 362h1v1h-1zM325 362h1v1h-1zM356 362h3v1h-3zM311 363h1v1h-1zM325 363h1v1h-1zM312 364h1v1h-1zM324 364h1v1h-1zM313 365h1v1h-1zM323 365h1v1h-1zM78 366h1v1h-1zM314 366h2v1h-2zM321 366h2v1h-2zM72 367h2v1h-2zM77 367h1v1h-1zM287 367h6v1h-6zM316 367h5v1h-5zM74 368h1v1h-1zM77 368h1v1h-1zM291 368h2v1h-2zM74 369h1v1h-1zM77 369h1v1h-1zM290 369h1v1h-1zM292 369h1v1h-1zM73 370h1v1h-1zM77 370h1v1h-1zM289 370h1v1h-1zM292 370h1v1h-1zM73 371h1v1h-1zM77 371h1v1h-1zM288 371h1v1h-1zM292 371h1v1h-1zM72 372h1v1h-1zM77 372h1v1h-1zM287 372h1v1h-1zM292 372h1v1h-1zM72 373h8v1h-8zM279 373h5v1h-5zM286 373h1v1h-1zM77 374h1v1h-1zM278 374h1v1h-1zM284 374h2v1h-2zM277 375h1v1h-1zM285 375h1v1h-1zM276 376h1v1h-1zM286 376h1v1h-1zM276 377h1v1h-1zM286 377h1v1h-1zM276 378h1v1h-1zM286 378h1v1h-1zM276 379h1v1h-1zM286 379h1v1h-1zM276 380h1v1h-1zM286 380h1v1h-1zM277 381h1v1h-1zM285 381h1v1h-1zM98 382h5v1h-5zM278 382h1v1h-1zM284 382h1v1h-1zM101 383h2v1h-2zM279 383h5v1h-5zM100 384h1v1h-1zM102 384h1v1h-1zM99 385h1v1h-1zM102 385h1v1h-1zM98 386h1v1h-1zM102 386h1v1h-1zM97 387h1v1h-1zM88 388h1v1h-1zM96 388h1v1h-1zM89 389h1v1h-1zM95 389h1v1h-1zM90 390h1v1h-1zM94 390h1v1h-1zM91 391h1v1h-1zM93 391h1v1h-1zM92 392h1v1h-1zM91 393h1v1h-1zM93 393h1v1h-1zM90 394h1v1h-1zM94 394h1v1h-1zM89 395h1v1h-1zM95 395h1v1h-1zM88 396h1v1h-1zM96 396h1v1h-1zM87 397h1v1h-1zM86 398h1v1h-1z"/>
<path fill="#00ffff" d="M340 187h1v1h-1zM340 189h1v1h-1zM340 190h1v1h-1zM340 191h1v1h-1zM340 193h1v1h-1zM340 195h1v1h-1zM340 196h1v1h-1zM340 197h1v1h-1zM340 199h1v1h-1zM340 201h1v1h-1zM340 202h1v1h-1zM340 203h1v1h-1zM340 205h1v1h-1zM340 207h1v1h-1zM340 208h1v1h-1zM340 209h1v1h-1zM340 211h1v1h-1zM340 213h1v1h-1zM340 214h1v1h-1zM340 215h1v1h-1zM340 217h1v1h-1zM340 219h1v1h-1zM340 220h1v1h-1zM340 221h1v1h-1zM340 223h1v1h-1zM340 225h1v1h-1zM340 226h1v1h-1zM340 227h1v1h-1zM340 229h1v1h-1zM340 231h1v1h-1zM340 232h1v1h-1zM340 233h1v1h-1zM340 235h1v1h-1zM340 237h1v1h-1zM340 238h1v1h-1zM340 239h1v1h-1zM340 241h1v1h-1zM340 243h1v1h-1zM340 244h1v1h-1zM340 245h1v1h-1zM340 247h1v1h-1zM340 249h1v1h-1zM340 250h1v1h-1zM340 251h1v1h-1zM340 253h1v1h-1zM340 255h1v1h-1zM340 256h1v1h-1zM340 257h1v1h-1zM340 259h1v1h-1zM340 261h1v1h-1zM340 262h1v1h-1zM340 263h1v1h-1zM340 265h1v1h-1zM340 267h1v1h-1zM340 268h1v1h-1zM340 269h1v1h-1zM340 271h1v1h-1zM340 273h1v1h-1zM340 274h1v1h-1zM340 275h1v1h-1zM340 277h1v1h-1zM340 279h1v1h-1zM340 280h1v1h-1zM340 281h1v1h-1zM340 283h1v1h-1zM340 285h1v1h-1zM340 286h1v1h-1zM340 287h1v1h-1zM340 289h1v1h-1zM340 291h1v1h-1zM340 292h1v1h-1zM340 293h1v1h-1zM337 295h1v1h-1zM334 297h1v1h-1zM331 299h1v1h-1zM328 301h1v1h-1zM325 303h1v1h-1zM322 305h1v1h-1zM319 307h1v1h-1zM316 309h1v1h-1zM313 311h1v1h-1zM310 313h1v1h-1zM307 315h1v1h-1zM304 317h1v1h-1zM301 319h1v1h-1zM298 321h1v1h-1zM295 323h1v1h-1zM292 325h1v1h-1zM289 327h1v1h-1zM286 329h1v1h-1zM283 331h1v1h-1zM280 333h1v1h-1zM277 335h1v1h-1zM274 337h1v1h-1zM271 338h1v1h-1zM268 340h1v1h-1zM265 342h1v1h-1zM262 344h1v1h-1zM259 346h1v1h-1zM256 348h1v1h-1zM253 350h1v1h-1zM250 352h1v1h-1z"/>
<path fill="#0000ff" d="M287 28h5v1h-5zM284 29h3v1h-3zM292 29h1v1h-1zM283 30h1v1h-1zM293 30h3v1h-3zM282 31h1v1h-1zM292 31h1v1h-1zM296 31h1v1h-1zM281 32h1v1h-1zM291 32h1v1h-1zM297 32h1v1h-1zM291 33h1v1h-1zM297 33h1v1h-1zM283 34h3v1h-3zM291 34h1v1h-1zM297 34h1v1h-1zM282 35h1v1h-1zM286 35h1v1h-1zM292 35h1v1h-1zM296 35h1v1h-1zM281 36h1v1h-1zM287 36h1v1h-1zM293 36h3v1h-3zM281 37h1v1h-1zM287 37h1v1h-1zM281 38h1v1h-1zM287 38h1v1h-1zM297 38h1v1h-1zM282 39h1v1h-1zM286 39h1v1h-1zM296 39h1v1h-1zM313 39h3v1h-3zM283 40h3v1h-3zM295 40h1v1h-1zM312 40h1v1h-1zM316 40h2v1h-2zM286 41h1v1h-1zM292 41h3v1h-3zM313 41h1v1h-1zM317 41h1v1h-1zM287 42h5v1h-5zM314 42h1v1h-1zM318 42h1v1h-1zM314 43h1v1h-1zM318 43h1v1h-1zM314 44h1v1h-1zM318 44h1v1h-1zM313 45h1v1h-1zM317 45h1v1h-1zM312 46h1v1h-1zM316 46h2v1h-2zM313 47h3v1h-3zM358 118h3v1h-3zM357 119h1v1h-1zM361 119h1v1h-1zM357 120h1v1h-1zM361 120h1v1h-1zM357 121h1v1h-1zM361 121h1v1h-1zM358 122h3v1h-3zM357 123h1v1h-1zM361 123h1v1h-1zM357 124h1v1h-1zM361 124h1v1h-1zM357 125h1v1h-1zM361 125h1v1h-1zM358 126h3v1h-3zM371 136h1v1h-1zM374 136h1v1h-1zM377 136h1v1h-1zM371 137h1v1h-1zM373 137h1v1h-1zM375 137h1v1h-1zM377 137h1v1h-1zM371 138h1v1h-1zM374 138h1v1h-1zM377 138h1v1h-1zM372 139h1v1h-1zM376 139h1v1h-1zM373 140h3v1h-3zM374 141h1v1h-1zM372 142h5v1h-5zM374 143h1v1h-1zM374 144h1v1h-1zM626 166h1v1h-1zM629 166h1v1h-1zM632 166h1v1h-1zM625 167h2v1h-2zM628 167h2v1h-2zM631 167h1v1h-1zM625 168h1v1h-1zM627 168h2v1h-2zM630 168h2v1h-2zM624 169h1v1h-1zM627 169h1v1h-1zM630 169h1v1h-1zM626 171h1v1h-1zM629 171h1v1h-1zM632 171h1v1h-1zM625 172h2v1h-2zM628 172h2v1h-2zM631 172h1v1h-1zM625 173h1v1h-1zM627 173h2v1h-2zM630 173h2v1h-2zM624 174h1v1h-1zM627 174h1v1h-1zM630 174h1v1h-1zM76 184h1v1h-1zM79 184h1v1h-1zM82 184h1v1h-1zM75 185h2v1h-2zM78 185h3v1h-3zM82 185h2v1h-2zM76 186h1v1h-1zM79 186h1v1h-1zM82 186h1v1h-1zM77 187h1v1h-1zM79 187h1v1h-1zM81 187h1v1h-1zM78 188h3v1h-3zM79 189h1v1h-1zM77 190h5v1h-5zM79 191h1v1h-1zM79 192h1v1h-1zM71 201h1v1h-1zM78 201h3v1h-3zM70 202h2v1h-2zM77 202h1v1h-1zM81 202h1v1h-1zM69 203h1v1h-1zM71 203h1v1h-1zM81 203h1v1h-1zM71 204h1v1h-1zM81 204h1v1h-1zM71 205h1v1h-1zM80 205h1v1h-1zM71 206h1v1h-1zM79 206h1v1h-1zM625 206h1v1h-1zM631 206h1v1h-1zM71 207h1v1h-1zM78 207h1v1h-1zM626 207h1v1h-1zM630 207h1v1h-1zM71 208h1v1h-1zM77 208h1v1h-1zM627 208h3v1h-3zM69 209h5v1h-5zM77 209h5v1h-5zM626 209h1v1h-1zM630 209h1v1h-1zM625 210h1v1h-1zM631 210h1v1h-1zM625 211h1v1h-1zM631 211h1v1h-1zM625 212h1v1h-1zM631 212h1v1h-1zM626 213h1v1h-1zM630 213h1v1h-1zM627 214h3v1h-3zM627 248h3v1h-3zM626 249h1v1h-1zM630 249h1v1h-1zM626 250h1v1h-1zM630 250h1v1h-1zM624 251h4v1h-4zM629 251h4v1h-4zM624 253h9v1h-9zM29 266h1v1h-1zM32 266h1v1h-1zM35 266h1v1h-1zM29 267h1v1h-1zM31 267h1v1h-1zM33 267h1v1h-1zM35 267h1v1h-1zM29 268h1v1h-1zM32 268h1v1h-1zM35 268h1v1h-1zM30 269h1v1h-1zM34 269h1v1h-1zM31 270h3v1h-3zM32 271h1v1h-1zM30 272h5v1h-5zM32 273h1v1h-1zM32 274h1v1h-1zM626 276h3v1h-3zM625 277h1v1h-1zM629 277h2v1h-2zM626 278h1v1h-1zM630 278h1v1h-1zM627 279h1v1h-1zM631 279h1v1h-1zM627 280h1v1h-1zM631 280h1v1h-1zM627 281h1v1h-1zM631 281h1v1h-1zM626 282h1v1h-1zM630 282h1v1h-1zM625 283h1v1h-1zM629 283h2v1h-2zM626 284h3v1h-3zM30 289h1v1h-1zM34 289h1v1h-1zM38 289h1v1h-1zM31 290h1v1h-1zM33 290h1v1h-1zM35 290h1v1h-1zM37 290h1v1h-1zM39 290h1v1h-1zM32 291h1v1h-1zM36 291h1v1h-1zM40 291h1v1h-1zM32 292h1v1h-1zM36 292h1v1h-1zM40 292h1v1h-1zM32 293h1v1h-1zM36 293h1v1h-1zM40 293h1v1h-1zM362 293h1v1h-1zM368 293h1v1h-1zM374 293h1v1h-1zM32 294h1v1h-1zM36 294h1v1h-1zM40 294h1v1h-1zM345 294h1v1h-1zM362 294h1v1h-1zM368 294h1v1h-1zM374 294h1v1h-1zM32 295h1v1h-1zM36 295h1v1h-1zM40 295h1v1h-1zM345 295h2v1h-2zM361 295h3v1h-3zM366 295h5v1h-5zM373 295h3v1h-3zM32 296h1v1h-1zM36 296h1v1h-1zM40 296h1v1h-1zM362 296h1v1h-1zM368 296h1v1h-1zM374 296h1v1h-1zM32 297h1v1h-1zM36 297h1v1h-1zM40 297h1v1h-1zM362 297h1v1h-1zM368 297h1v1h-1zM374 297h1v1h-1zM32 298h1v1h-1zM36 298h1v1h-1zM40 298h1v1h-1zM363 298h1v1h-1zM368 298h1v1h-1zM373 298h1v1h-1zM32 299h1v1h-1zM36 299h1v1h-1zM40 299h1v1h-1zM363 299h1v1h-1zM368 299h1v1h-1zM373 299h1v1h-1zM32 300h1v1h-1zM36 300h1v1h-1zM40 300h1v1h-1zM45 300h1v1h-1zM364 300h2v1h-2zM368 300h1v1h-1zM371 300h2v1h-2zM32 301h1v1h-1zM36 301h1v1h-1zM40 301h1v1h-1zM44 301h3v1h-3zM366 301h5v1h-5zM32 302h1v1h-1zM36 302h1v1h-1zM40 302h1v1h-1zM45 302h1v1h-1zM368 302h1v1h-1zM32 303h1v1h-1zM36 303h1v1h-1zM40 303h1v1h-1zM45 303h1v1h-1zM368 303h1v1h-1zM41 304h1v1h-1zM44 304h1v1h-1zM368 304h1v1h-1zM42 305h2v1h-2zM364 305h9v1h-9zM368 306h1v1h-1zM368 307h1v1h-1zM368 308h1v1h-1zM368 309h1v1h-1zM293 344h1v1h-1zM292 345h3v1h-3zM293 346h1v1h-1zM625 346h1v1h-1zM628 346h1v1h-1zM631 346h1v1h-1zM624 347h2v1h-2zM627 347h3v1h-3zM631 347h2v1h-2zM625 348h1v1h-1zM628 348h1v1h-1zM631 348h1v1h-1zM626 349h1v1h-1zM628 349h1v1h-1zM630 349h1v1h-1zM627 350h3v1h-3zM628 351h1v1h-1zM626 352h5v1h-5zM628 353h1v1h-1zM628 354h1v1h-1zM625 356h1v1h-1zM628 356h1v1h-1zM631 356h1v1h-1zM250 357h1v1h-1zM625 357h1v1h-1zM627 357h1v1h-1zM629 357h1v1h-1zM631 357h1v1h-1zM249 358h3v1h-3zM625 358h1v1h-1zM628 358h1v1h-1zM631 358h1v1h-1zM250 359h1v1h-1zM626 359h1v1h-1zM630 359h1v1h-1zM298 360h5v1h-5zM627 360h3v1h-3zM297 361h1v1h-1zM303 361h2v1h-2zM628 361h1v1h-1zM296 362h1v1h-1zM305 362h1v1h-1zM626 362h5v1h-5zM297 363h1v1h-1zM306 363h1v1h-1zM628 363h1v1h-1zM298 364h1v1h-1zM307 364h1v1h-1zM628 364h1v1h-1zM299 365h1v1h-1zM307 365h1v1h-1zM299 366h1v1h-1zM308 366h1v1h-1zM300 367h1v1h-1zM308 367h1v1h-1zM300 368h1v1h-1zM308 368h1v1h-1zM300 369h1v1h-1zM308 369h1v1h-1zM299 370h1v1h-1zM308 370h1v1h-1zM299 371h1v1h-1zM307 371h1v1h-1zM298 372h1v1h-1zM307 372h1v1h-1zM297 373h1v1h-1zM306 373h1v1h-1zM246 374h1v1h-1zM251 374h3v1h-3zM258 374h1v1h-1zM296 374h1v1h-1zM305 374h1v1h-1zM246 375h1v1h-1zM250 375h1v1h-1zM254 375h1v1h-1zM258 375h1v1h-1zM297 375h1v1h-1zM303 375h2v1h-2zM246 376h1v1h-1zM250 376h1v1h-1zM254 376h1v1h-1zM258 376h1v1h-1zM298 376h5v1h-5zM382 376h1v1h-1zM398 376h1v1h-1zM246 377h1v1h-1zM250 377h1v1h-1zM254 377h1v1h-1zM258 377h1v1h-1zM383 377h1v1h-1zM397 377h1v1h-1zM246 378h1v1h-1zM251 378h3v1h-3zM258 378h1v1h-1zM384 378h1v1h-1zM396 378h1v1h-1zM247 379h1v1h-1zM257 379h1v1h-1zM385 379h1v1h-1zM395 379h1v1h-1zM247 380h1v1h-1zM257 380h1v1h-1zM385 380h1v1h-1zM395 380h1v1h-1zM248 381h2v1h-2zM255 381h2v1h-2zM386 381h1v1h-1zM394 381h1v1h-1zM250 382h5v1h-5zM386 382h1v1h-1zM394 382h1v1h-1zM252 383h1v1h-1zM386 383h1v1h-1zM394 383h1v1h-1zM252 384h1v1h-1zM382 384h17v1h-17zM252 385h1v1h-1zM386 385h1v1h-1zM394 385h1v1h-1zM248 386h9v1h-9zM386 386h1v1h-1zM394 386h1v1h-1zM252 387h1v1h-1zM386 387h1v1h-1zM394 387h1v1h-1zM252 388h1v1h-1zM385 388h1v1h-1zM395 388h1v1h-1zM252 389h1v1h-1zM385 389h1v1h-1zM395 389h1v1h-1zM252 390h1v1h-1zM384 390h1v1h-1zM396 390h1v1h-1zM383 391h1v1h-1zM397 391h1v1h-1zM297 392h1v1h-1zM300 392h1v1h-1zM382 392h1v1h-1zM398 392h1v1h-1zM297 393h1v1h-1zM300 393h1v1h-1zM297 394h1v1h-1zM300 394h1v1h-1zM297 395h1v1h-1zM300 395h1v1h-1zM297 396h5v1h-5zM300 397h1v1h-1zM300 398h1v1h-1zM274 399h3v1h-3zM300 399h1v1h-1zM367 399h1v1h-1zM370 399h1v1h-1zM373 399h1v1h-1zM273 400h1v1h-1zM277 400h2v1h-2zM300 400h1v1h-1zM366 400h2v1h-2zM369 400h3v1h-3zM373 400h2v1h-2zM274 401h1v1h-1zM278 401h1v1h-1zM367 401h1v1h-1zM370 401h1v1h-1zM373 401h1v1h-1zM275 402h1v1h-1zM279 402h1v1h-1zM368 402h1v1h-1zM370 402h1v1h-1zM372 402h1v1h-1zM275 403h1v1h-1zM279 403h1v1h-1zM369 403h3v1h-3zM275 404h1v1h-1zM279 404h1v1h-1zM370 404h1v1h-1zM274 405h1v1h-1zM278 405h1v1h-1zM368 405h5v1h-5zM273 406h1v1h-1zM277 406h2v1h-2zM370 406h1v1h-1zM274 407h3v1h-3zM370 407h1v1h-1z"/>
<path fill="#ffff00" d="M201 71h1v1h-1zM199 72h5v1h-5zM201 73h1v1h-1zM201 74h1v1h-1zM203 74h2v1h-2zM201 75h2v1h-2zM205 75h1v1h-1zM201 76h1v1h-1zM205 76h1v1h-1zM201 77h1v1h-1zM204 77h1v1h-1zM175 78h1v1h-1zM182 78h3v1h-3zM201 78h1v1h-1zM204 78h1v1h-1zM174 79h2v1h-2zM181 79h1v1h-1zM185 79h1v1h-1zM205 79h1v1h-1zM173 80h1v1h-1zM175 80h1v1h-1zM181 80h1v1h-1zM185 80h1v1h-1zM175 81h1v1h-1zM181 81h1v1h-1zM185 81h1v1h-1zM175 82h1v1h-1zM181 82h1v1h-1zM185 82h1v1h-1zM175 83h1v1h-1zM181 83h1v1h-1zM185 83h1v1h-1zM175 84h1v1h-1zM181 84h1v1h-1zM185 84h1v1h-1zM175 85h1v1h-1zM181 85h1v1h-1zM185 85h1v1h-1zM80 86h1v1h-1zM84 86h1v1h-1zM88 86h1v1h-1zM173 86h5v1h-5zM182 86h3v1h-3zM81 87h1v1h-1zM83 87h1v1h-1zM85 87h1v1h-1zM87 87h1v1h-1zM89 87h1v1h-1zM82 88h1v1h-1zM86 88h1v1h-1zM90 88h1v1h-1zM94 88h1v1h-1zM82 89h1v1h-1zM86 89h1v1h-1zM90 89h1v1h-1zM93 89h2v1h-2zM82 90h1v1h-1zM86 90h1v1h-1zM90 90h1v1h-1zM92 90h1v1h-1zM94 90h1v1h-1zM82 91h1v1h-1zM86 91h1v1h-1zM90 91h2v1h-2zM94 91h1v1h-1zM82 92h1v1h-1zM86 92h1v1h-1zM90 92h1v1h-1zM94 92h1v1h-1zM82 93h1v1h-1zM86 93h1v1h-1zM90 93h1v1h-1zM94 93h1v1h-1zM82 94h1v1h-1zM86 94h1v1h-1zM90 94h1v1h-1zM94 94h1v1h-1zM82 95h1v1h-1zM86 95h1v1h-1zM90 95h1v1h-1zM94 95h1v1h-1zM82 96h1v1h-1zM86 96h1v1h-1zM90 96h1v1h-1zM94 96h1v1h-1zM82 97h1v1h-1zM86 97h1v1h-1zM90 97h1v1h-1zM94 97h1v1h-1zM82 98h1v1h-1zM86 98h1v1h-1zM90 98h1v1h-1zM94 98h1v1h-1zM82 99h1v1h-1zM86 99h1v1h-1zM91 99h1v1h-1zM93 99h1v1h-1zM82 100h1v1h-1zM86 100h1v1h-1zM92 100h1v1h-1zM91 101h1v1h-1zM93 101h1v1h-1zM90 102h1v1h-1zM94 102h1v1h-1zM624 146h1v1h-1zM626 146h1v1h-1zM628 146h1v1h-1zM625 147h1v1h-1zM627 147h1v1h-1zM629 147h1v1h-1zM625 148h1v1h-1zM627 148h1v1h-1zM629 148h1v1h-1zM625 149h1v1h-1zM627 149h1v1h-1zM629 149h1v1h-1zM625 150h1v1h-1zM627 150h1v1h-1zM629 150h1v1h-1zM625 151h1v1h-1zM627 151h1v1h-1zM629 151h1v1h-1zM625 152h1v1h-1zM627 152h1v1h-1zM629 152h1v1h-1zM632 152h1v1h-1zM625 153h1v1h-1zM627 153h1v1h-1zM629 153h1v1h-1zM632 153h1v1h-1zM630 154h2v1h-2zM42 159h3v1h-3zM41 160h1v1h-1zM45 160h1v1h-1zM41 161h1v1h-1zM45 161h1v1h-1zM41 162h1v1h-1zM45 162h1v1h-1zM42 163h3v1h-3zM43 164h1v1h-1zM41 165h5v1h-5zM43 166h1v1h-1zM43 167h1v1h-1zM434 173h1v1h-1zM446 173h1v1h-1zM435 174h1v1h-1zM445 174h1v1h-1zM435 175h1v1h-1zM445 175h1v1h-1zM436 176h2v1h-2zM443 176h2v1h-2zM438 177h5v1h-5zM436 178h2v1h-2zM443 178h2v1h-2zM435 179h1v1h-1zM445 179h1v1h-1zM435 180h1v1h-1zM445 180h1v1h-1zM434 181h1v1h-1zM446 181h1v1h-1zM434 182h1v1h-1zM446 182h1v1h-1zM434 183h1v1h-1zM446 183h1v1h-1zM434 184h1v1h-1zM446 184h1v1h-1zM434 185h1v1h-1zM446 185h1v1h-1zM435 186h1v1h-1zM445 186h1v1h-1zM625 186h2v1h-2zM630 186h2v1h-2zM435 187h1v1h-1zM445 187h1v1h-1zM624 187h1v1h-1zM627 187h1v1h-1zM629 187h1v1h-1zM632 187h1v1h-1zM436 188h2v1h-2zM443 188h2v1h-2zM624 188h1v1h-1zM627 188h1v1h-1zM629 188h1v1h-1zM632 188h1v1h-1zM438 189h5v1h-5zM625 189h1v1h-1zM627 189h1v1h-1zM629 189h1v1h-1zM631 189h1v1h-1zM628 190h1v1h-1zM628 191h1v1h-1zM628 192h1v1h-1zM628 193h1v1h-1zM628 194h1v1h-1zM445 204h3v1h-3zM444 205h1v1h-1zM448 205h1v1h-1zM444 206h1v1h-1zM448 206h1v1h-1zM444 207h1v1h-1zM448 207h1v1h-1zM445 208h3v1h-3zM446 209h1v1h-1zM444 210h5v1h-5zM446 211h1v1h-1zM446 212h1v1h-1zM405 215h3v1h-3zM404 216h1v1h-1zM408 216h1v1h-1zM404 217h1v1h-1zM408 217h1v1h-1zM404 218h1v1h-1zM408 218h1v1h-1zM405 219h3v1h-3zM406 220h1v1h-1zM404 221h5v1h-5zM406 222h1v1h-1zM406 223h1v1h-1zM627 226h3v1h-3zM626 227h1v1h-1zM630 227h1v1h-1zM625 228h1v1h-1zM631 228h1v1h-1zM625 229h1v1h-1zM631 229h1v1h-1zM625 230h1v1h-1zM631 230h1v1h-1zM626 231h1v1h-1zM630 231h1v1h-1zM624 232h1v1h-1zM626 232h1v1h-1zM630 232h1v1h-1zM625 233h1v1h-1zM631 233h1v1h-1zM632 234h1v1h-1zM402 269h3v1h-3zM401 270h1v1h-1zM405 270h1v1h-1zM401 271h1v1h-1zM401 272h1v1h-1zM401 273h4v1h-4zM401 274h1v1h-1zM405 274h1v1h-1zM401 275h1v1h-1zM405 275h1v1h-1zM401 276h1v1h-1zM405 276h1v1h-1zM402 277h3v1h-3zM344 295h1v1h-1zM343 296h3v1h-3zM627 296h3v1h-3zM344 297h1v1h-1zM626 297h1v1h-1zM630 297h1v1h-1zM626 298h1v1h-1zM630 298h1v1h-1zM626 299h1v1h-1zM630 299h1v1h-1zM627 300h3v1h-3zM628 301h1v1h-1zM626 302h5v1h-5zM628 303h1v1h-1zM628 304h1v1h-1zM357 310h1v1h-1zM357 311h1v1h-1zM353 312h9v1h-9zM357 313h1v1h-1zM357 314h1v1h-1zM357 315h1v1h-1zM357 316h1v1h-1zM361 316h3v1h-3zM357 317h1v1h-1zM360 317h1v1h-1zM364 317h1v1h-1zM357 318h3v1h-3zM365 318h1v1h-1zM357 319h1v1h-1zM365 319h1v1h-1zM357 320h1v1h-1zM365 320h1v1h-1zM357 321h1v1h-1zM364 321h1v1h-1zM357 322h1v1h-1zM363 322h1v1h-1zM357 323h1v1h-1zM363 323h1v1h-1zM357 324h1v1h-1zM363 324h1v1h-1zM364 325h1v1h-1zM365 326h1v1h-1zM627 326h1v1h-1zM625 327h5v1h-5zM627 328h1v1h-1zM627 329h1v1h-1zM629 329h2v1h-2zM315 330h1v1h-1zM627 330h2v1h-2zM631 330h1v1h-1zM314 331h3v1h-3zM627 331h1v1h-1zM631 331h1v1h-1zM315 332h1v1h-1zM627 332h1v1h-1zM630 332h1v1h-1zM627 333h1v1h-1zM630 333h1v1h-1zM103 334h3v1h-3zM631 334h1v1h-1zM102 335h1v1h-1zM106 335h1v1h-1zM102 336h1v1h-1zM106 336h1v1h-1zM102 337h1v1h-1zM106 337h1v1h-1zM103 338h3v1h-3zM104 339h1v1h-1zM296 339h1v1h-1zM331 339h5v1h-5zM102 340h5v1h-5zM294 340h1v1h-1zM330 340h1v1h-1zM336 340h1v1h-1zM104 341h1v1h-1zM291 341h2v1h-2zM329 341h1v1h-1zM337 341h1v1h-1zM104 342h1v1h-1zM329 342h1v1h-1zM337 342h1v1h-1zM287 343h1v1h-1zM329 343h1v1h-1zM337 343h1v1h-1zM283 344h1v1h-1zM329 344h1v1h-1zM337 344h1v1h-1zM329 345h1v1h-1zM337 345h1v1h-1zM279 346h1v1h-1zM330 346h1v1h-1zM336 346h1v1h-1zM331 347h5v1h-5zM333 348h1v1h-1zM333 349h1v1h-1zM333 350h1v1h-1zM329 351h9v1h-9zM118 352h3v1h-3zM333 352h1v1h-1zM117 353h1v1h-1zM121 353h1v1h-1zM333 353h1v1h-1zM121 354h1v1h-1zM333 354h1v1h-1zM121 355h1v1h-1zM333 355h1v1h-1zM120 356h1v1h-1zM119 357h1v1h-1zM118 358h1v1h-1zM117 359h1v1h-1zM117 360h5v1h-5zM162 431h1v1h-1zM160 432h5v1h-5zM162 433h1v1h-1zM162 434h1v1h-1zM164 434h2v1h-2zM162 435h2v1h-2zM166 435h1v1h-1zM183 435h1v1h-1zM189 435h1v1h-1zM193 435h3v1h-3zM162 436h1v1h-1zM166 436h1v1h-1zM182 436h2v1h-2zM189 436h2v1h-2zM192 436h1v1h-1zM196 436h1v1h-1zM162 437h1v1h-1zM165 437h1v1h-1zM181 437h1v1h-1zM183 437h1v1h-1zM189 437h1v1h-1zM191 437h1v1h-1zM197 437h1v1h-1zM162 438h1v1h-1zM165 438h1v1h-1zM183 438h1v1h-1zM188 438h1v1h-1zM190 438h1v1h-1zM197 438h1v1h-1zM166 439h1v1h-1zM183 439h1v1h-1zM187 439h1v1h-1zM191 439h1v1h-1zM197 439h1v1h-1zM183 440h1v1h-1zM187 440h1v1h-1zM192 440h1v1h-1zM196 440h1v1h-1zM183 441h1v1h-1zM187 441h1v1h-1zM193 441h3v1h-3zM183 442h1v1h-1zM187 442h1v1h-1zM194 442h1v1h-1zM183 443h1v1h-1zM187 443h1v1h-1zM195 443h1v1h-1zM184 444h1v1h-1zM186 444h1v1h-1zM196 444h1v1h-1zM185 445h1v1h-1zM197 445h1v1h-1zM185 446h1v1h-1zM197 446h1v1h-1zM185 447h1v1h-1zM197 447h1v1h-1zM185 448h1v1h-1zM197 448h1v1h-1zM185 449h1v1h-1zM197 449h1v1h-1zM196 450h1v1h-1zM195 451h1v1h-1z"/>
</g>
<g id="sidebar">
<g transform="translate(0 7)"><title>Astrolog 5.41G</title><g fill="#ffffff"><use href="#g65" x="486"/><use href="#g115" x="492"/><use href="#g116" x="498"/><use href="#g114" x="504"/><use href="#g111" x="510"/><use href="#g108" x="516"/><use href="#g111" x="522"/><use href="#g103" x="528"/><use href="#g53" x="540"/><use href="#g46" x="546"/><use href="#g52" x="552"/><use href="#g49" x="558"/><use href="#g71" x="564"/></g></g>
<g transform="translate(0 17)"><title>Chart of the Moment</title><g fill="#c0c0c0"><use href="#g67" x="486"/><use href="#g104" x="492"/><use href="#g97" x="498"/><use href="#g114" x="504"/><use href="#g116" x="510"/><use href="#g111" x="522"/><use href="#g102" x="528"/><use href="#g116" x="540"/><use href="#g104" x="546"/><use href="#g101" x="552"/><use href="#g77" x="564"/><use href="#g111" x="570"/><use href="#g109" x="576"/><use href="#g101" x="582"/><use href="#g110" x="588"/><use href="#g116" x="594"/></g></g>
<g transform="translate(0 27)"><title>Mon February 16, 2026</title><g fill="#ffffff"><use href="#g77" x="486"/><use href="#g111" x="492"/><use href="#g110" x="498"/><use href="#g70" x="510"/><use href="#g101" x="516"/><use href="#g98" x="522"/><use href="#g114" x="528"/><use href="#g117" x="534"/><use href="#g97" x="540"/><use href="#g114" x="546"/><use href="#g121" x="552"/><use href="#g49" x="564"/><use href="#g54" x="570"/><use href="#g44" x="576"/><use href="#g50" x="588"/><use href="#g48" x="594"/><use href="#g50" x="600"/><use href="#g54" x="606"/></g></g>
<g transform="translate(0 37)"><title>10:44:00pm (ST -8:00 GMT)</title><g fill="#ffffff"><use href="#g49" x="486"/><use href="#g48" x="492"/><use href="#g58" x="498"/><use href="#g52" x="504"/><use href="#g52" x="510"/><use href="#g58" x="516"/><use href="#g48" x="522"/><use href="#g48" x="528"/><use href="#g112" x="534"/><use href="#g109" x="540"/><use href="#g40" x="552"/><use href="#g83" x="558"/><use href="#g84" x="564"/><use href="#g45" x="576"/><use href="#g56" x="582"/><use href="#g58" x="588"/><use href="#g48" x="594"/><use href="#g48" x="600"/><use href="#g71" x="612"/><use href="#g77" x="618"/><use href="#g84" x="624"/><use href="#g41" x="630"/></g></g>
<g transform="translate(0 47)"><title>San Francisco, CA</title><g fill="#c0c0c0"><use href="#g83" x="486"/><use href="#g97" x="492"/><use href="#g110" x="498"/><use href="#g70" x="510"/><use href="#g114" x="516"/><use href="#g97" x="522"/><use href="#g110" x="528"/><use href="#g99" x="534"/><use href="#g105" x="540"/><use href="#g115" x="546"/><use href="#g99" x="552"/><use href="#g111" x="558"/><use href="#g44" x="564"/><use href="#g67" x="576"/><use href="#g65" x="582"/></g></g>
<g transform="translate(0 57)"><title>122°41&#x27;00&quot;W 37°79&#x27;00&quot;N</title><g fill="#c0c0c0"><use href="#g49" x="486"/><use href="#g50" x="492"/><use href="#g50" x="498"/><use href="#g176" x="504"/><use href="#g52" x="510"/><use href="#g49" x="516"/><use href="#g39" x="522"/><use href="#g48" x="528"/><use href="#g48" x="534"/><use href="#g34" x="540"/><use href="#g87" x="546"/><use href="#g51" x="558"/><use href="#g55" x="564"/><use href="#g176" x="570"/><use href="#g55" x="576"/><use href="#g57" x="582"/><use href="#g39" x="588"/><use href="#g48" x="594"/><use href="#g48" x="600"/><use href="#g34" x="606"/><use href="#g78" x="612"/></g></g>
<g transform="translate(0 67)"><title>Placidus houses.</title><g fill="#c0c0c0"><use href="#g80" x="486"/><use href="#g108" x="492"/><use href="#g97" x="498"/><use href="#g99" x="504"/><use href="#g105" x="510"/><use href="#g100" x="516"/><use href="#g117" x="522"/><use href="#g115" x="528"/><use href="#g104" x="540"/><use href="#g111" x="546"/><use href="#g117" x="552"/><use href="#g115" x="558"/><use href="#g101" x="564"/><use href="#g115" x="570"/><use href="#g46" x="576"/></g></g>
<g transform="translate(0 77)"><title>Tropical, Geocentric.</title><g fill="#c0c0c0"><use href="#g84" x="486"/><use href="#g114" x="492"/><use href="#g111" x="498"/><use href="#g112" x="504"/><use href="#g105" x="510"/><use href="#g99" x="516"/><use href="#g97" x="522"/><use href="#g108" x="528"/><use href="#g44" x="534"/><use href="#g71" x="546"/><use href="#g101" x="552"/><use href="#g111" x="558"/><use href="#g99" x="564"/><use href="#g101" x="570"/><use href="#g110" x="576"/><use href="#g116" x="582"/><use href="#g114" x="588"/><use href="#g105" x="594"/><use href="#g99" x="600"/><use href="#g46" x="606"/></g></g>
<g transform="translate(0 87)"><title>Julian Day = 2461088.7806</title><g fill="#ffffff"><use href="#g74" x="486"/><use href="#g117" x="492"/><use href="#g108" x="498"/><use href="#g105" x="504"/><use href="#g97" x="510"/><use href="#g110" x="516"/><use href="#g68" x="528"/><use href="#g97" x="534"/><use href="#g121" x="540"/><use href="#g61" x="552"/><use href="#g50" x="564"/><use href="#g52" x="570"/><use href="#g54" x="576"/><use href="#g49" x="582"/><use href="#g48" x="588"/><use href="#g56" x="594"/><use href="#g56" x="600"/><use href="#g46" x="606"/><use href="#g55" x="612"/><use href="#g56" x="618"/><use href="#g48" x="624"/><use href="#g54" x="630"/></g></g>
<g transform="translate(0 97)"><title>Obliquity = 23°26&#x27;09&quot;</title><g fill="#c0c0c0"><use href="#g79" x="486"/><use href="#g98" x="492"/><use href="#g108" x="498"/><use href="#g105" x="504"/><use href="#g113" x="510"/><use href="#g117" x="516"/><use href="#g105" x="522"/><use href="#g116" x="528"/><use href="#g121" x="534"/><use href="#g61" x="546"/><use href="#g50" x="558"/><use href="#g51" x="564"/><use href="#g176" x="570"/><use href="#g50" x="576"/><use href="#g54" x="582"/><use href="#g39" x="588"/><use href="#g48" x="594"/><use href="#g57" x="600"/><use href="#g34" x="606"/></g></g>
<g transform="translate(0 107)"><title>Sidereal time:  8:22:19</title><g fill="#c0c0c0"><use href="#g83" x="486"/><use href="#g105" x="492"/><use href="#g100" x="498"/><use href="#g101" x="504"/><use href="#g114" x="510"/><use href="#g101" x="516"/><use href="#g97" x="522"/><use href="#g108" x="528"/><use href="#g116" x="540"/><use href="#g105" x="546"/><use href="#g109" x="552"/><use href="#g101" x="558"/><use href="#g58" x="564"/><use href="#g56" x="582"/><use href="#g58" x="588"/><use href="#g50" x="594"/><use href="#g50" x="600"/><use href="#g58" x="606"/><use href="#g49" x="612"/><use href="#g57" x="618"/></g></g>
<g transform="translate(0 117)"><title>DeltaT =  95.3747</title><g fill="#c0c0c0"><use href="#g68" x="486"/><use href="#g101" x="492"/><use href="#g108" x="498"/><use href="#g116" x="504"/><use href="#g97" x="510"/><use href="#g84" x="516"/><use href="#g61" x="528"/><use href="#g57" x="546"/><use href="#g53" x="552"/><use href="#g46" x="558"/><use href="#g51" x="564"/><use href="#g55" x="570"/><use href="#g52" x="576"/><use href="#g55" x="582"/></g></g>
<g transform="translate(0 137)"><title>1st house: 28Lib45</title><g fill="#ff0000"><use href="#g49" x="492"/><use href="#g115" x="498"/><use href="#g116" x="504"/><use href="#g104" x="516"/><use href="#g111" x="522"/><use href="#g117" x="528"/><use href="#g115" x="534"/><use href="#g101" x="540"/><use href="#g58" x="546"/></g><g fill="#00ff00"><use href="#g50" x="558"/><use href="#g56" x="564"/><use href="#g76" x="570"/><use href="#g105" x="576"/><use href="#g98" x="582"/><use href="#g52" x="588"/><use href="#g53" x="594"/></g></g>
<g transform="translate(0 147)"><title>2nd house: 27Sco02</title><g fill="#ffff00"><use href="#g50" x="492"/><use href="#g110" x="498"/><use href="#g100" x="504"/><use href="#g104" x="516"/><use href="#g111" x="522"/><use href="#g117" x="528"/><use href="#g115" x="534"/><use href="#g101" x="540"/><use href="#g58" x="546"/></g><g fill="#0000ff"><use href="#g50" x="558"/><use href="#g55" x="564"/><use href="#g83" x="570"/><use href="#g99" x="576"/><use href="#g111" x="582"/><use href="#g48" x="588"/><use href="#g50" x="594"/></g></g>
<g transform="translate(0 157)"><title>3rd house: 29Sag00</title><g fill="#00ff00"><use href="#g51" x="492"/><use href="#g114" x="498"/><use href="#g100" x="504"/><use href="#g104" x="516"/><use href="#g111" x="522"/><use href="#g117" x="528"/><use href="#g115" x="534"/><use href="#g101" x="540"/><use href="#g58" x="546"/></g><g fill="#ff0000"><use href="#g50" x="558"/><use href="#g57" x="564"/><use href="#g83" x="570"/><use href="#g97" x="576"/><use href="#g103" x="582"/><use href="#g48" x="588"/><use href="#g48" x="594"/></g></g>
<g transform="translate(0 167)"><title>4th house:  3Aqu17</title><g fill="#0000ff"><use href="#g52" x="492"/><use href="#g116" x="498"/><use href="#g104" x="504"/><use href="#g104" x="516"/><use href="#g111" x="522"/><use href="#g117" x="528"/><use href="#g115" x="534"/><use href="#g101" x="540"/><use href="#g58" x="546"/></g><g fill="#00ff00"><use href="#g51" x="564"/><use href="#g65" x="570"/><use href="#g113" x="576"/><use href="#g117" x="582"/><use href="#g49" x="588"/><use href="#g55" x="594"/></g></g>
<g transform="translate(0 177)"><title>5th house:  6Pis16</title><g fill="#ff0000"><use href="#g53" x="492"/><use href="#g116" x="498"/><use href="#g104" x="504"/><use href="#g104" x="516"/><use href="#g111" x="522"/><use href="#g117" x="528"/><use href="#g115" x="534"/><use href="#g101" x="540"/><use href="#g58" x="546"/></g><g fill="#0000ff"><use href="#g54" x="564"/><use href="#g80" x="570"/><use href="#g105" x="576"/><use href="#g115" x="582"/><use href="#g49" x="588"/><use href="#g54" x="594"/></g></g>
<g transform="translate(0 187)"><title>6th house:  4Ari57</title><g fill="#ffff00"><use href="#g54" x="492"/><use href="#g116" x="498"/><use href="#g104" x="504"/><use href="#g104" x="516"/><use href="#g111" x="522"/><use href="#g117" x="528"/><use href="#g115" x="534"/><use href="#g101" x="540"/><use href="#g58" x="546"/></g><g fill="#ff0000"><use href="#g52" x="564"/><use href="#g65" x="570"/><use href="#g114" x="576"/><use href="#g105" x="582"/><use href="#g53" x="588"/><use href="#g55" x="594"/></g></g>
<g transform="translate(0 197)"><title>7th house: 28Ari45</title><g fill="#00ff00"><use href="#g55" x="492"/><use href="#g116" x="498"/><use href="#g104" x="504"/><use href="#g104" x="516"/><use href="#g111" x="522"/><use href="#g117" x="528"/><use href="#g115" x="534"/><use href="#g101" x="540"/><use href="#g58" x="546"/></g><g fill="#ff0000"><use href="#g50" x="558"/><use href="#g56" x="564"/><use href="#g65" x="570"/><use href="#g114" x="576"/><use href="#g105" x="582"/><use href="#g52" x="588"/><use href="#g53" x="594"/></g></g>
<g transform="translate(0 207)"><title>8th house: 27Tau02</title><g fill="#0000ff"><use href="#g56" x="492"/><use href="#g116" x="498"/><use href="#g104" x="504"/><use href="#g104" x="516"/><use href="#g111" x="522"/><use href="#g117" x="528"/><use href="#g115" x="534"/><use href="#g101" x="540"/><use href="#g58" x="546"/></g><g fill="#ffff00"><use href="#g50" x="558"/><use href="#g55" x="564"/><use href="#g84" x="570"/><use href="#g97" x="576"/><use href="#g117" x="582"/><use href="#g48" x="588"/><use href="#g50" x="594"/></g></g>
<g transform="translate(0 217)"><title>9th house: 29Gem00</title><g fill="#ff0000"><use href="#g57" x="492"/><use href="#g116" x="498"/><use href="#g104" x="504"/><use href="#g104" x="516"/><use href="#g111" x="522"/><use href="#g117" x="528"/><use href="#g115" x="534"/><use href="#g101" x="540"/><use href="#g58" x="546"/></g><g fill="#00ff00"><use href="#g50" x="558"/><use href="#g57" x="564"/><use href="#g71" x="570"/><use href="#g101" x="576"/><use href="#g109" x="582"/><use href="#g48" x="588"/><use href="#g48" x="594"/></g></g>
<g transform="translate(0 227)"><title>10th house:  3Leo17</title><g fill="#ffff00"><use href="#g49" x="486"/><use href="#g48" x="492"/><use href="#g116" x="498"/><use href="#g104" x="504"/><use href="#g104" x="516"/><use href="#g111" x="522"/><use href="#g117" x="528"/><use href="#g115" x="534"/><use href="#g101" x="540"/><use href="#g58" x="546"/></g><g fill="#ff0000"><use href="#g51" x="564"/><use href="#g76" x="570"/><use href="#g101" x="576"/><use href="#g111" x="582"/><use href="#g49" x="588"/><use href="#g55" x="594"/></g></g>
<g transform="translate(0 237)"><title>11th house:  6Vir16</title><g fill="#00ff00"><use href="#g49" x="486"/><use href="#g49" x="492"/><use href="#g116" x="498"/><use href="#g104" x="504"/><use href="#g104" x="516"/><use href="#g111" x="522"/><use href="#g117" x="528"/><use href="#g115" x="534"/><use href="#g101" x="540"/><use href="#g58" x="546"/></g><g fill="#ffff00"><use href="#g54" x="564"/><use href="#g86" x="570"/><use href="#g105" x="576"/><use href="#g114" x="582"/><use href="#g49" x="588"/><use href="#g54" x="594"/></g></g>
<g transform="translate(0 247)"><title>12th house:  4Lib57</title><g fill="#0000ff"><use href="#g49" x="486"/><use href="#g50" x="492"/><use href="#g116" x="498"/><use href="#g104" x="504"/><use href="#g104" x="516"/><use href="#g111" x="522"/><use href="#g117" x="528"/><use href="#g115" x="534"/><use href="#g101" x="540"/><use href="#g58" x="546"/></g><g fill="#00ff00"><use href="#g52" x="564"/><use href="#g76" x="570"/><use href="#g105" x="576"/><use href="#g98" x="582"/><use href="#g53" x="588"/><use href="#g55" x="594"/></g></g>
<g transform="translate(0 267)"><title>Sun: 28Aqu36  - 0°00&#x27;</title><g fill="#ff0000"><use href="#g83" x="492"/><use href="#g117" x="498"/><use href="#g110" x="504"/><use href="#g58" x="510"/></g><g fill="#00ff00"><use href="#g50" x="522"/><use href="#g56" x="528"/><use href="#g65" x="534"/><use href="#g113" x="540"/><use href="#g117" x="546"/><use href="#g51" x="552"/><use href="#g54" x="558"/></g><g fill="#c0c0c0"><use href="#g45" x="576"/><use href="#g48" x="588"/><use href="#g176" x="594"/><use href="#g48" x="600"/><use href="#g48" x="606"/><use href="#g39" x="612"/></g></g>
<g transform="translate(0 277)"><title>Moon: 25Aqu56  - 1°11&#x27;</title><g fill="#0000ff"><use href="#g77" x="486"/><use href="#g111" x="492"/><use href="#g111" x="498"/><use href="#g110" x="504"/><use href="#g58" x="510"/></g><g fill="#00ff00"><use href="#g50" x="522"/><use href="#g53" x="528"/><use href="#g65" x="534"/><use href="#g113" x="540"/><use href="#g117" x="546"/><use href="#g53" x="552"/><use href="#g54" x="558"/></g><g fill="#c0c0c0"><use href="#g45" x="576"/><use href="#g49" x="588"/><use href="#g176" x="594"/><use href="#g49" x="600"/><use href="#g49" x="606"/><use href="#g39" x="612"/></g></g>
<g transform="translate(0 287)"><title>Merc: 16Pis23  + 0°34&#x27;</title><g fill="#00ff00"><use href="#g77" x="486"/><use href="#g101" x="492"/><use href="#g114" x="498"/><use href="#g99" x="504"/><use href="#g58" x="510"/></g><g fill="#0000ff"><use href="#g49" x="522"/><use href="#g54" x="528"/><use href="#g80" x="534"/><use href="#g105" x="540"/><use href="#g115" x="546"/><use href="#g50" x="552"/><use href="#g51" x="558"/></g><g fill="#c0c0c0"><use href="#g43" x="576"/><use href="#g48" x="588"/><use href="#g176" x="594"/><use href="#g51" x="600"/><use href="#g52" x="606"/><use href="#g39" x="612"/></g></g>
<g transform="translate(0 297)"><title>Venu:  8Pis35  - 1°28&#x27;</title><g fill="#ffff00"><use href="#g86" x="486"/><use href="#g101" x="492"/><use href="#g110" x="498"/><use href="#g117" x="504"/><use href="#g58" x="510"/></g><g fill="#0000ff"><use href="#g56" x="528"/><use href="#g80" x="534"/><use href="#g105" x="540"/><use href="#g115" x="546"/><use href="#g51" x="552"/><use href="#g53" x="558"/></g><g fill="#c0c0c0"><use href="#g45" x="576"/><use href="#g49" x="588"/><use href="#g176" x="594"/><use href="#g50" x="600"/><use href="#g56" x="606"/><use href="#g39" x="612"/></g></g>
<g transform="translate(0 307)"><title>Mars: 19Aqu31  - 1°05&#x27;</title><g fill="#ff0000"><use href="#g77" x="486"/><use href="#g97" x="492"/><use href="#g114" x="498"/><use href="#g115" x="504"/><use href="#g58" x="510"/></g><g fill="#00ff00"><use href="#g49" x="522"/><use href="#g57" x="528"/><use href="#g65" x="534"/><use href="#g113" x="540"/><use href="#g117" x="546"/><use href="#g51" x="552"/><use href="#g49" x="558"/></g><g fill="#c0c0c0"><use href="#g45" x="576"/><use href="#g49" x="588"/><use href="#g176" x="594"/><use href="#g48" x="600"/><use href="#g53" x="606"/><use href="#g39" x="612"/></g></g>
<g transform="translate(0 317)"><title>Jupi: 15Can52R + 0°20&#x27;</title><g fill="#ff0000"><use href="#g74" x="486"/><use href="#g117" x="492"/><use href="#g112" x="498"/><use href="#g105" x="504"/><use href="#g58" x="510"/></g><g fill="#0000ff"><use href="#g49" x="522"/><use href="#g53" x="528"/><use href="#g67" x="534"/><use href="#g97" x="540"/><use href="#g110" x="546"/><use href="#g53" x="552"/><use href="#g50" x="558"/></g><g fill="#ffffff"><use href="#g82" x="564"/></g><g fill="#c0c0c0"><use href="#g43" x="576"/><use href="#g48" x="588"/><use href="#g176" x="594"/><use href="#g50" x="600"/><use href="#g48" x="606"/><use href="#g39" x="612"/></g></g>
<g transform="translate(0 327)"><title>Satu:  0Ari22  - 2°09&#x27;</title><g fill="#ffff00"><use href="#g83" x="486"/><use href="#g97" x="492"/><use href="#g116" x="498"/><use href="#g117" x="504"/><use href="#g58" x="510"/></g><g fill="#ff0000"><use href="#g48" x="528"/><use href="#g65" x="534"/><use href="#g114" x="540"/><use href="#g105" x="546"/><use href="#g50" x="552"/><use href="#g50" x="558"/></g><g fill="#c0c0c0"><use href="#g45" x="576"/><use href="#g50" x="588"/><use href="#g176" x="594"/><use href="#g48" x="600"/><use href="#g57" x="606"/><use href="#g39" x="612"/></g></g>
<g transform="translate(0 337)"><title>Uran: 27Tau32  - 0°11&#x27;</title><g fill="#00ff00"><use href="#g85" x="486"/><use href="#g114" x="492"/><use href="#g97" x="498"/><use href="#g110" x="504"/><use href="#g58" x="510"/></g><g fill="#ffff00"><use href="#g50" x="522"/><use href="#g55" x="528"/><use href="#g84" x="534"/><use href="#g97" x="540"/><use href="#g117" x="546"/><use href="#g51" x="552"/><use href="#g50" x="558"/></g><g fill="#c0c0c0"><use href="#g45" x="576"/><use href="#g48" x="588"/><use href="#g176" x="594"/><use href="#g49" x="600"/><use href="#g49" x="606"/><use href="#g39" x="612"/></g></g>
<g transform="translate(0 347)"><title>Nept:  0Ari38  - 1°19&#x27;</title><g fill="#0000ff"><use href="#g78" x="486"/><use href="#g101" x="492"/><use href="#g112" x="498"/><use href="#g116" x="504"/><use href="#g58" x="510"/></g><g fill="#ff0000"><use href="#g48" x="528"/><use href="#g65" x="534"/><use href="#g114" x="540"/><use href="#g105" x="546"/><use href="#g51" x="552"/><use href="#g56" x="558"/></g><g fill="#c0c0c0"><use href="#g45" x="576"/><use href="#g49" x="588"/><use href="#g176" x="594"/><use href="#g49" x="600"/><use href="#g57" x="606"/><use href="#g39" x="612"/></g></g>
<g transform="translate(0 357)"><title>Plut:  4Aqu12  - 3°50&#x27;</title><g fill="#0000ff"><use href="#g80" x="486"/><use href="#g108" x="492"/><use href="#g117" x="498"/><use href="#g116" x="504"/><use href="#g58" x="510"/></g><g fill="#00ff00"><use href="#g52" x="528"/><use href="#g65" x="534"/><use href="#g113" x="540"/><use href="#g117" x="546"/><use href="#g49" x="552"/><use href="#g50" x="558"/></g><g fill="#c0c0c0"><use href="#g45" x="576"/><use href="#g51" x="588"/><use href="#g176" x="594"/><use href="#g53" x="600"/><use href="#g48" x="606"/><use href="#g39" x="612"/></g></g>
<g transform="translate(0 377)"><title>Fire: 2, Earth: 1,</title><g fill="#c0c0c0"><use href="#g70" x="486"/><use href="#g105" x="492"/><use href="#g114" x="498"/><use href="#g101" x="504"/><use href="#g58" x="510"/><use href="#g50" x="522"/><use href="#g44" x="528"/><use href="#g69" x="540"/><use href="#g97" x="546"/><use href="#g114" x="552"/><use href="#g116" x="558"/><use href="#g104" x="564"/><use href="#g58" x="570"/><use href="#g49" x="582"/><use href="#g44" x="588"/></g></g>
<g transform="translate(0 387)"><title>Air : 4, Water: 3</title><g fill="#c0c0c0"><use href="#g65" x="486"/><use href="#g105" x="492"/><use href="#g114" x="498"/><use href="#g58" x="510"/><use href="#g52" x="522"/><use href="#g44" x="528"/><use href="#g87" x="540"/><use href="#g97" x="546"/><use href="#g116" x="552"/><use href="#g101" x="558"/><use href="#g114" x="564"/><use href="#g58" x="570"/><use href="#g51" x="582"/></g></g>
<g transform="translate(0 397)"><title>Car: 3, Fix: 5, Mut: 2</title><g fill="#c0c0c0"><use href="#g67" x="486"/><use href="#g97" x="492"/><use href="#g114" x="498"/><use href="#g58" x="504"/><use href="#g51" x="516"/><use href="#g44" x="522"/><use href="#g70" x="534"/><use href="#g105" x="540"/><use href="#g120" x="546"/><use href="#g58" x="552"/><use href="#g53" x="564"/><use href="#g44" x="570"/><use href="#g77" x="582"/><use href="#g117" x="588"/><use href="#g116" x="594"/><use href="#g58" x="600"/><use href="#g50" x="612"/></g></g>
<g transform="translate(0 407)"><title>Yang: 6, Yin: 4</title><g fill="#c0c0c0"><use href="#g89" x="486"/><use href="#g97" x="492"/><use href="#g110" x="498"/><use href="#g103" x="504"/><use href="#g58" x="510"/><use href="#g54" x="522"/><use href="#g44" x="528"/><use href="#g89" x="540"/><use href="#g105" x="546"/><use href="#g110" x="552"/><use href="#g58" x="558"/><use href="#g52" x="570"/></g></g>
<g transform="translate(0 417)"><title>M: 2, N: 8, A: 0, D: 10</title><g fill="#c0c0c0"><use href="#g77" x="486"/><use href="#g58" x="492"/><use href="#g50" x="504"/><use href="#g44" x="510"/><use href="#g78" x="522"/><use href="#g58" x="528"/><use href="#g56" x="540"/><use href="#g44" x="546"/><use href="#g65" x="558"/><use href="#g58" x="564"/><use href="#g48" x="576"/><use href="#g44" x="582"/><use href="#g68" x="594"/><use href="#g58" x="600"/><use href="#g49" x="612"/><use href="#g48" x="618"/></g></g>
<g transform="translate(0 427)"><title>Ang: 4, Suc: 5, Cad: 1</title><g fill="#c0c0c0"><use href="#g65" x="486"/><use href="#g110" x="492"/><use href="#g103" x="498"/><use href="#g58" x="504"/><use href="#g52" x="516"/><use href="#g44" x="522"/><use href="#g83" x="534"/><use href="#g117" x="540"/><use href="#g99" x="546"/><use href="#g58" x="552"/><use href="#g53" x="564"/><use href="#g44" x="570"/><use href="#g67" x="582"/><use href="#g97" x="588"/><use href="#g100" x="594"/><use href="#g58" x="600"/><use href="#g49" x="612"/></g></g>
<g transform="translate(0 437)"><title>Learn: 4, Share: 6</title><g fill="#c0c0c0"><use href="#g76" x="486"/><use href="#g101" x="492"/><use href="#g97" x="498"/><use href="#g114" x="504"/><use href="#g110" x="510"/><use href="#g58" x="516"/><use href="#g52" x="528"/><use href="#g44" x="534"/><use href="#g83" x="546"/><use href="#g104" x="552"/><use href="#g97" x="558"/><use href="#g114" x="564"/><use href="#g101" x="570"/><use href="#g58" x="576"/><use href="#g54" x="588"/></g></g>
</g>
</svg></body></html>
